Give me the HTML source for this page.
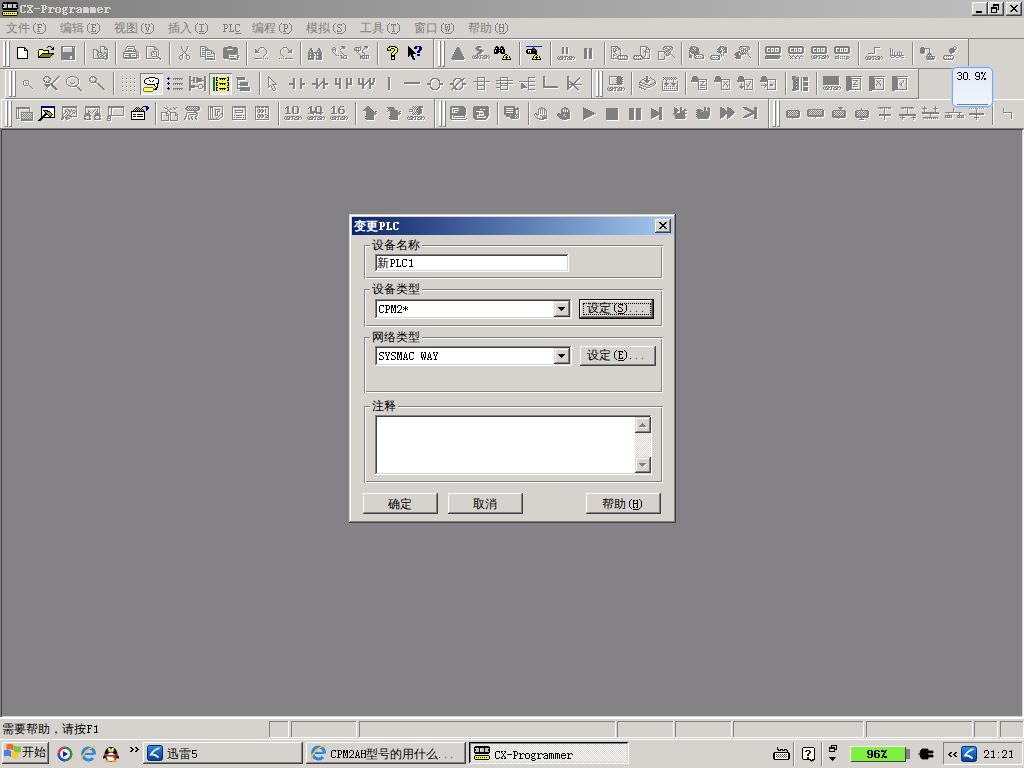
<!DOCTYPE html>
<html><head><meta charset="utf-8"><style>
html,body{margin:0;padding:0;width:1024px;height:768px;overflow:hidden;background:#d6d3ce;}
div,span,svg{position:absolute;}
.t{font-family:"Liberation Sans",sans-serif;font-size:12px;line-height:12px;white-space:nowrap;}
.m{font-family:"Liberation Mono",monospace;font-size:12px;line-height:12px;white-space:pre;letter-spacing:-1.2px;}
svg{overflow:visible;shape-rendering:crispEdges;}
svg.aa{shape-rendering:auto;}
</style></head><body>
<div style="left:0px;top:0px;width:1024px;height:18px;background:linear-gradient(to right,#808080,#c0c0c0);"></div>
<svg style="left:2px;top:1px" width="20" height="17"><path d="M3 2h1v1h-1z" fill="#008000"/><path d="M1 1h14v1h-14zM0 2h3v1h-3zM4 2h12v1h-12zM0 3h1v1h-1zM5 3h1v1h-1zM10 3h1v1h-1zM15 3h1v1h-1zM0 4h2v1h-2zM5 4h1v1h-1zM10 4h1v1h-1zM14 4h2v1h-2zM0 5h2v1h-2zM5 5h1v1h-1zM10 5h1v1h-1zM14 5h2v1h-2zM0 6h1v1h-1zM5 6h1v1h-1zM10 6h1v1h-1zM15 6h1v1h-1zM0 7h16v1h-16zM1 8h14v1h-14zM1 10h14v1h-14zM0 11h1v1h-1zM15 11h1v1h-1zM0 12h1v1h-1zM2 12h1v1h-1zM4 12h1v1h-1zM6 12h1v1h-1zM8 12h1v1h-1zM10 12h1v1h-1zM12 12h1v1h-1zM15 12h1v1h-1zM0 13h1v1h-1zM15 13h1v1h-1zM1 14h14v1h-14z" fill="#000000"/><path d="M2 3h3v1h-3zM6 3h4v1h-4zM11 3h4v1h-4zM2 4h3v1h-3zM7 4h3v1h-3zM11 4h3v1h-3zM2 5h3v1h-3zM7 5h3v1h-3zM11 5h3v1h-3zM2 6h3v1h-3zM6 6h4v1h-4zM11 6h4v1h-4z" fill="#c0c0c0"/><path d="M1 3h1v1h-1zM6 4h1v1h-1zM6 5h1v1h-1zM1 6h1v1h-1z" fill="#ffffff"/><path d="M1 11h14v1h-14zM1 12h1v1h-1zM3 12h1v1h-1zM5 12h1v1h-1zM7 12h1v1h-1zM9 12h1v1h-1zM11 12h1v1h-1zM13 12h2v1h-2zM1 13h14v1h-14z" fill="#ffff00"/></svg>
<svg style="left:19px;top:3px" width="92" height="12"><path d="M2 2h5v1h-5zM1 3h2v1h-2zM5 3h2v1h-2zM1 4h2v1h-2zM1 5h2v1h-2zM1 6h2v1h-2zM1 7h2v1h-2zM1 8h2v1h-2zM5 8h2v1h-2zM2 9h4v1h-4zM8 2h3v1h-3zM11 2h3v1h-3zM8 3h2v1h-2zM12 3h2v1h-2zM9 4h2v1h-2zM11 4h2v1h-2zM10 5h2v1h-2zM10 6h2v1h-2zM9 7h2v1h-2zM11 7h2v1h-2zM8 8h2v1h-2zM12 8h2v1h-2zM8 9h3v1h-3zM11 9h3v1h-3zM15 5h6v1h-6zM22 2h5v1h-5zM23 3h2v1h-2zM26 3h2v1h-2zM23 4h2v1h-2zM26 4h2v1h-2zM23 5h2v1h-2zM26 5h2v1h-2zM23 6h4v1h-4zM23 7h2v1h-2zM23 8h2v1h-2zM22 9h4v1h-4zM29 4h3v1h-3zM32 4h3v1h-3zM30 5h3v1h-3zM34 5h2v1h-2zM30 6h2v1h-2zM30 7h2v1h-2zM30 8h2v1h-2zM29 9h5v1h-5zM37 4h4v1h-4zM36 5h2v1h-2zM40 5h2v1h-2zM36 6h2v1h-2zM40 6h2v1h-2zM36 7h2v1h-2zM40 7h2v1h-2zM36 8h2v1h-2zM40 8h2v1h-2zM37 9h4v1h-4zM44 4h5v1h-5zM43 5h2v1h-2zM46 5h2v1h-2zM43 6h2v1h-2zM46 6h2v1h-2zM44 7h3v1h-3zM43 8h2v1h-2zM44 9h4v1h-4zM43 10h2v1h-2zM47 10h2v1h-2zM44 11h4v1h-4zM50 4h3v1h-3zM53 4h3v1h-3zM51 5h3v1h-3zM55 5h2v1h-2zM51 6h2v1h-2zM51 7h2v1h-2zM51 8h2v1h-2zM50 9h5v1h-5zM58 4h4v1h-4zM57 5h2v1h-2zM61 5h2v1h-2zM59 6h4v1h-4zM58 7h2v1h-2zM61 7h2v1h-2zM57 8h2v1h-2zM61 8h2v1h-2zM58 9h5v1h-5zM64 4h5v1h-5zM64 5h2v1h-2zM66 5h2v1h-2zM68 5h2v1h-2zM64 6h2v1h-2zM66 6h2v1h-2zM68 6h2v1h-2zM64 7h2v1h-2zM66 7h2v1h-2zM68 7h2v1h-2zM64 8h2v1h-2zM66 8h2v1h-2zM68 8h2v1h-2zM64 9h2v1h-2zM66 9h2v1h-2zM68 9h2v1h-2zM71 4h5v1h-5zM71 5h2v1h-2zM73 5h2v1h-2zM75 5h2v1h-2zM71 6h2v1h-2zM73 6h2v1h-2zM75 6h2v1h-2zM71 7h2v1h-2zM73 7h2v1h-2zM75 7h2v1h-2zM71 8h2v1h-2zM73 8h2v1h-2zM75 8h2v1h-2zM71 9h2v1h-2zM73 9h2v1h-2zM75 9h2v1h-2zM79 4h4v1h-4zM78 5h2v1h-2zM82 5h2v1h-2zM78 6h6v1h-6zM78 7h2v1h-2zM78 8h2v1h-2zM82 8h2v1h-2zM79 9h4v1h-4zM85 4h3v1h-3zM88 4h3v1h-3zM86 5h3v1h-3zM90 5h2v1h-2zM86 6h2v1h-2zM86 7h2v1h-2zM86 8h2v1h-2zM85 9h5v1h-5z" fill="#d6d3ce"/></svg>
<div style="left:972px;top:2px;width:16px;height:14px;background:#d6d3ce;box-shadow:inset -1px -1px #404040,inset 1px 1px #ffffff,inset -2px -2px #808080,inset 2px 2px #d6d3ce;"></div>
<div style="left:988px;top:2px;width:16px;height:14px;background:#d6d3ce;box-shadow:inset -1px -1px #404040,inset 1px 1px #ffffff,inset -2px -2px #808080,inset 2px 2px #d6d3ce;"></div>
<div style="left:1006px;top:2px;width:16px;height:14px;background:#d6d3ce;box-shadow:inset -1px -1px #404040,inset 1px 1px #ffffff,inset -2px -2px #808080,inset 2px 2px #d6d3ce;"></div>
<svg style="left:972px;top:2px" width="16" height="14"><path d="M4 9h6v2h-6z" fill="#000"/></svg>
<svg style="left:988px;top:2px" width="20" height="17"><path d="M5 2h6v1h-6zM5 3h6v1h-6zM5 4h1v1h-1zM10 4h1v1h-1zM3 5h6v1h-6zM10 5h1v1h-1zM3 6h6v1h-6zM10 6h1v1h-1zM3 7h1v1h-1zM8 7h3v1h-3zM3 8h1v1h-1zM8 8h1v1h-1zM3 9h1v1h-1zM8 9h1v1h-1zM3 10h6v1h-6z" fill="#000000"/></svg>
<svg style="left:1006px;top:2px" width="20" height="17"><path d="M4 3h2v1h-2zM10 3h2v1h-2zM5 4h2v1h-2zM9 4h2v1h-2zM6 5h4v1h-4zM7 6h2v1h-2zM6 7h4v1h-4zM5 8h2v1h-2zM9 8h2v1h-2zM4 9h2v1h-2zM10 9h2v1h-2z" fill="#000000"/></svg>
<div style="left:0px;top:18px;width:1024px;height:20px;background:#d6d3ce;"></div>
<span class="t" style="left:6px;top:22px;color:#808080;">文件</span>
<svg style="left:30px;top:22px" width="19" height="12"><path d="M5 1h1v1h-1zM4 2h1v1h-1zM3 3h1v1h-1zM3 4h1v1h-1zM3 5h1v1h-1zM3 6h1v1h-1zM3 7h1v1h-1zM3 8h1v1h-1zM4 9h1v1h-1zM5 10h1v1h-1zM7 2h5v1h-5zM8 3h1v1h-1zM11 3h1v1h-1zM8 4h1v1h-1zM8 5h3v1h-3zM8 6h1v1h-1zM8 7h1v1h-1zM8 8h1v1h-1zM7 9h3v1h-3zM7 11h6v1h-6zM13 1h1v1h-1zM14 2h1v1h-1zM15 3h1v1h-1zM15 4h1v1h-1zM15 5h1v1h-1zM15 6h1v1h-1zM15 7h1v1h-1zM15 8h1v1h-1zM14 9h1v1h-1zM13 10h1v1h-1z" fill="#808080"/></svg>
<span class="t" style="left:60px;top:22px;color:#808080;">编辑</span>
<svg style="left:84px;top:22px" width="19" height="12"><path d="M5 1h1v1h-1zM4 2h1v1h-1zM3 3h1v1h-1zM3 4h1v1h-1zM3 5h1v1h-1zM3 6h1v1h-1zM3 7h1v1h-1zM3 8h1v1h-1zM4 9h1v1h-1zM5 10h1v1h-1zM7 2h5v1h-5zM8 3h1v1h-1zM11 3h1v1h-1zM8 4h1v1h-1zM8 5h3v1h-3zM8 6h1v1h-1zM8 7h1v1h-1zM8 8h1v1h-1zM11 8h1v1h-1zM7 9h5v1h-5zM7 11h6v1h-6zM13 1h1v1h-1zM14 2h1v1h-1zM15 3h1v1h-1zM15 4h1v1h-1zM15 5h1v1h-1zM15 6h1v1h-1zM15 7h1v1h-1zM15 8h1v1h-1zM14 9h1v1h-1zM13 10h1v1h-1z" fill="#808080"/></svg>
<span class="t" style="left:114px;top:22px;color:#808080;">视图</span>
<svg style="left:138px;top:22px" width="19" height="12"><path d="M5 1h1v1h-1zM4 2h1v1h-1zM3 3h1v1h-1zM3 4h1v1h-1zM3 5h1v1h-1zM3 6h1v1h-1zM3 7h1v1h-1zM3 8h1v1h-1zM4 9h1v1h-1zM5 10h1v1h-1zM7 2h2v1h-2zM10 2h2v1h-2zM7 3h1v1h-1zM11 3h1v1h-1zM7 4h1v1h-1zM11 4h1v1h-1zM8 5h1v1h-1zM10 5h1v1h-1zM8 6h1v1h-1zM10 6h1v1h-1zM8 7h1v1h-1zM10 7h1v1h-1zM9 8h1v1h-1zM9 9h1v1h-1zM7 11h6v1h-6zM13 1h1v1h-1zM14 2h1v1h-1zM15 3h1v1h-1zM15 4h1v1h-1zM15 5h1v1h-1zM15 6h1v1h-1zM15 7h1v1h-1zM15 8h1v1h-1zM14 9h1v1h-1zM13 10h1v1h-1z" fill="#808080"/></svg>
<span class="t" style="left:168px;top:22px;color:#808080;">插入</span>
<svg style="left:192px;top:22px" width="19" height="12"><path d="M5 1h1v1h-1zM4 2h1v1h-1zM3 3h1v1h-1zM3 4h1v1h-1zM3 5h1v1h-1zM3 6h1v1h-1zM3 7h1v1h-1zM3 8h1v1h-1zM4 9h1v1h-1zM5 10h1v1h-1zM7 2h5v1h-5zM9 3h1v1h-1zM9 4h1v1h-1zM9 5h1v1h-1zM9 6h1v1h-1zM9 7h1v1h-1zM9 8h1v1h-1zM7 9h5v1h-5zM7 11h6v1h-6zM13 1h1v1h-1zM14 2h1v1h-1zM15 3h1v1h-1zM15 4h1v1h-1zM15 5h1v1h-1zM15 6h1v1h-1zM15 7h1v1h-1zM15 8h1v1h-1zM14 9h1v1h-1zM13 10h1v1h-1z" fill="#808080"/></svg>
<svg style="left:222px;top:22px" width="19" height="12"><path d="M1 2h4v1h-4zM2 3h1v1h-1zM5 3h1v1h-1zM2 4h1v1h-1zM5 4h1v1h-1zM2 5h1v1h-1zM5 5h1v1h-1zM2 6h3v1h-3zM2 7h1v1h-1zM2 8h1v1h-1zM1 9h3v1h-3zM7 2h3v1h-3zM8 3h1v1h-1zM8 4h1v1h-1zM8 5h1v1h-1zM8 6h1v1h-1zM8 7h1v1h-1zM8 8h1v1h-1zM11 8h1v1h-1zM7 9h5v1h-5zM14 2h4v1h-4zM13 3h1v1h-1zM17 3h1v1h-1zM13 4h1v1h-1zM13 5h1v1h-1zM13 6h1v1h-1zM13 7h1v1h-1zM13 8h1v1h-1zM17 8h1v1h-1zM14 9h3v1h-3zM13 11h6v1h-6z" fill="#808080"/></svg>
<span class="t" style="left:252px;top:22px;color:#808080;">编程</span>
<svg style="left:276px;top:22px" width="19" height="12"><path d="M5 1h1v1h-1zM4 2h1v1h-1zM3 3h1v1h-1zM3 4h1v1h-1zM3 5h1v1h-1zM3 6h1v1h-1zM3 7h1v1h-1zM3 8h1v1h-1zM4 9h1v1h-1zM5 10h1v1h-1zM7 2h4v1h-4zM8 3h1v1h-1zM11 3h1v1h-1zM8 4h1v1h-1zM11 4h1v1h-1zM8 5h1v1h-1zM11 5h1v1h-1zM8 6h3v1h-3zM8 7h1v1h-1zM8 8h1v1h-1zM7 9h3v1h-3zM7 11h6v1h-6zM13 1h1v1h-1zM14 2h1v1h-1zM15 3h1v1h-1zM15 4h1v1h-1zM15 5h1v1h-1zM15 6h1v1h-1zM15 7h1v1h-1zM15 8h1v1h-1zM14 9h1v1h-1zM13 10h1v1h-1z" fill="#808080"/></svg>
<span class="t" style="left:306px;top:22px;color:#808080;">模拟</span>
<svg style="left:330px;top:22px" width="19" height="12"><path d="M5 1h1v1h-1zM4 2h1v1h-1zM3 3h1v1h-1zM3 4h1v1h-1zM3 5h1v1h-1zM3 6h1v1h-1zM3 7h1v1h-1zM3 8h1v1h-1zM4 9h1v1h-1zM5 10h1v1h-1zM8 2h4v1h-4zM7 3h1v1h-1zM11 3h1v1h-1zM7 4h1v1h-1zM8 5h2v1h-2zM10 6h1v1h-1zM11 7h1v1h-1zM7 8h1v1h-1zM11 8h1v1h-1zM7 9h4v1h-4zM7 11h6v1h-6zM13 1h1v1h-1zM14 2h1v1h-1zM15 3h1v1h-1zM15 4h1v1h-1zM15 5h1v1h-1zM15 6h1v1h-1zM15 7h1v1h-1zM15 8h1v1h-1zM14 9h1v1h-1zM13 10h1v1h-1z" fill="#808080"/></svg>
<span class="t" style="left:360px;top:22px;color:#808080;">工具</span>
<svg style="left:384px;top:22px" width="19" height="12"><path d="M5 1h1v1h-1zM4 2h1v1h-1zM3 3h1v1h-1zM3 4h1v1h-1zM3 5h1v1h-1zM3 6h1v1h-1zM3 7h1v1h-1zM3 8h1v1h-1zM4 9h1v1h-1zM5 10h1v1h-1zM7 2h5v1h-5zM7 3h1v1h-1zM9 3h1v1h-1zM11 3h1v1h-1zM9 4h1v1h-1zM9 5h1v1h-1zM9 6h1v1h-1zM9 7h1v1h-1zM9 8h1v1h-1zM8 9h3v1h-3zM7 11h6v1h-6zM13 1h1v1h-1zM14 2h1v1h-1zM15 3h1v1h-1zM15 4h1v1h-1zM15 5h1v1h-1zM15 6h1v1h-1zM15 7h1v1h-1zM15 8h1v1h-1zM14 9h1v1h-1zM13 10h1v1h-1z" fill="#808080"/></svg>
<span class="t" style="left:414px;top:22px;color:#808080;">窗口</span>
<svg style="left:438px;top:22px" width="19" height="12"><path d="M5 1h1v1h-1zM4 2h1v1h-1zM3 3h1v1h-1zM3 4h1v1h-1zM3 5h1v1h-1zM3 6h1v1h-1zM3 7h1v1h-1zM3 8h1v1h-1zM4 9h1v1h-1zM5 10h1v1h-1zM7 2h2v1h-2zM10 2h2v1h-2zM7 3h1v1h-1zM11 3h1v1h-1zM7 4h1v1h-1zM9 4h1v1h-1zM11 4h1v1h-1zM7 5h1v1h-1zM9 5h1v1h-1zM11 5h1v1h-1zM7 6h1v1h-1zM9 6h1v1h-1zM11 6h1v1h-1zM7 7h2v1h-2zM10 7h2v1h-2zM8 8h1v1h-1zM10 8h1v1h-1zM8 9h1v1h-1zM10 9h1v1h-1zM7 11h6v1h-6zM13 1h1v1h-1zM14 2h1v1h-1zM15 3h1v1h-1zM15 4h1v1h-1zM15 5h1v1h-1zM15 6h1v1h-1zM15 7h1v1h-1zM15 8h1v1h-1zM14 9h1v1h-1zM13 10h1v1h-1z" fill="#808080"/></svg>
<span class="t" style="left:468px;top:22px;color:#808080;">帮助</span>
<svg style="left:492px;top:22px" width="19" height="12"><path d="M5 1h1v1h-1zM4 2h1v1h-1zM3 3h1v1h-1zM3 4h1v1h-1zM3 5h1v1h-1zM3 6h1v1h-1zM3 7h1v1h-1zM3 8h1v1h-1zM4 9h1v1h-1zM5 10h1v1h-1zM7 2h2v1h-2zM10 2h2v1h-2zM7 3h1v1h-1zM11 3h1v1h-1zM7 4h1v1h-1zM11 4h1v1h-1zM7 5h5v1h-5zM7 6h1v1h-1zM11 6h1v1h-1zM7 7h1v1h-1zM11 7h1v1h-1zM7 8h1v1h-1zM11 8h1v1h-1zM7 9h2v1h-2zM10 9h2v1h-2zM7 11h6v1h-6zM13 1h1v1h-1zM14 2h1v1h-1zM15 3h1v1h-1zM15 4h1v1h-1zM15 5h1v1h-1zM15 6h1v1h-1zM15 7h1v1h-1zM15 8h1v1h-1zM14 9h1v1h-1zM13 10h1v1h-1z" fill="#808080"/></svg>
<div style="left:0px;top:38px;width:1024px;height:1px;background:#808080;"></div>
<div style="left:0px;top:39px;width:1024px;height:90px;background:#d6d3ce;"></div>
<div style="left:-1px;top:39px;width:435px;height:1px;background:#fff;"></div>
<div style="left:-1px;top:39px;width:1px;height:29px;background:#fff;"></div>
<div style="left:-1px;top:68px;width:435px;height:1px;background:#808080;"></div>
<div style="left:433px;top:39px;width:1px;height:29px;background:#808080;"></div>
<div style="left:3px;top:41px;width:3px;height:26px;box-shadow:inset -1px -1px #808080,inset 2px 1px #fff;"></div>
<div style="left:7px;top:41px;width:3px;height:26px;box-shadow:inset -1px -1px #808080,inset 2px 1px #fff;"></div>
<svg style="left:15px;top:46px" width="20" height="17"><path d="M2 1h8v1h-8zM2 2h1v1h-1zM9 2h2v1h-2zM2 3h1v1h-1zM9 3h1v1h-1zM11 3h1v1h-1zM2 4h1v1h-1zM9 4h4v1h-4zM2 5h1v1h-1zM12 5h1v1h-1zM2 6h1v1h-1zM12 6h1v1h-1zM2 7h1v1h-1zM12 7h1v1h-1zM2 8h1v1h-1zM12 8h1v1h-1zM2 9h1v1h-1zM12 9h1v1h-1zM2 10h1v1h-1zM12 10h1v1h-1zM2 11h1v1h-1zM12 11h1v1h-1zM2 12h11v1h-11z" fill="#000000"/><path d="M3 2h6v1h-6zM3 3h6v1h-6zM10 3h1v1h-1zM3 4h6v1h-6zM3 5h9v1h-9zM3 6h9v1h-9zM3 7h9v1h-9zM3 8h9v1h-9zM3 9h9v1h-9zM3 10h9v1h-9zM3 11h9v1h-9z" fill="#ffffff"/></svg>
<svg style="left:38px;top:46px" width="20" height="17"><path d="M1 4h4v1h-4zM1 5h9v1h-9zM1 6h9v1h-9zM1 7h3v1h-3zM1 8h2v1h-2zM1 9h1v1h-1z" fill="#ffff80"/><path d="M10 0h3v1h-3zM9 1h1v1h-1zM13 1h1v1h-1zM15 1h1v1h-1zM14 2h2v1h-2zM1 3h4v1h-4zM13 3h3v1h-3zM0 4h1v1h-1zM5 4h6v1h-6zM0 5h1v1h-1zM10 5h1v1h-1zM0 6h1v1h-1zM10 6h1v1h-1zM0 7h1v1h-1zM4 7h12v1h-12zM0 8h1v1h-1zM3 8h1v1h-1zM14 8h1v1h-1zM0 9h1v1h-1zM2 9h1v1h-1zM13 9h1v1h-1zM0 10h2v1h-2zM12 10h1v1h-1zM0 11h12v1h-12z" fill="#000000"/><path d="M4 8h10v1h-10zM15 8h1v1h-1zM3 9h10v1h-10zM2 10h10v1h-10z" fill="#808000"/></svg>
<svg style="left:61px;top:46px" width="20" height="17"><path d="M1 1h14v1h-14zM1 2h2v1h-2zM12 2h1v1h-1zM14 2h1v1h-1zM1 3h2v1h-2zM12 3h3v1h-3zM1 4h2v1h-2zM12 4h3v1h-3zM1 5h2v1h-2zM12 5h3v1h-3zM1 6h2v1h-2zM12 6h3v1h-3zM1 7h14v1h-14zM1 8h14v1h-14zM1 9h14v1h-14zM1 10h14v1h-14zM1 11h9v1h-9zM12 11h3v1h-3zM1 12h9v1h-9zM12 12h3v1h-3zM1 13h9v1h-9zM12 13h3v1h-3zM1 14h14v1h-14z" fill="#fff"/><path d="M0 0h14v1h-14zM0 1h2v1h-2zM11 1h1v1h-1zM13 1h1v1h-1zM0 2h2v1h-2zM11 2h3v1h-3zM0 3h2v1h-2zM11 3h3v1h-3zM0 4h2v1h-2zM11 4h3v1h-3zM0 5h2v1h-2zM11 5h3v1h-3zM0 6h14v1h-14zM0 7h14v1h-14zM0 8h14v1h-14zM0 9h14v1h-14zM0 10h9v1h-9zM11 10h3v1h-3zM0 11h9v1h-9zM11 11h3v1h-3zM0 12h9v1h-9zM11 12h3v1h-3zM0 13h14v1h-14z" fill="#808080"/></svg>
<div style="left:84px;top:42px;width:1px;height:23px;background:#808080;"></div>
<div style="left:85px;top:42px;width:1px;height:23px;background:#fff;"></div>
<svg style="left:92px;top:46px" width="20" height="17"><path d="M9 1h5v1h-5zM9 2h1v1h-1zM13 2h2v1h-2zM9 3h1v1h-1zM13 3h1v1h-1zM15 3h1v1h-1zM2 4h4v1h-4zM9 4h1v1h-1zM13 4h4v1h-4zM2 5h1v1h-1zM5 5h2v1h-2zM9 5h1v1h-1zM16 5h1v1h-1zM2 6h1v1h-1zM6 6h2v1h-2zM9 6h1v1h-1zM16 6h1v1h-1zM2 7h1v1h-1zM7 7h4v1h-4zM13 7h2v1h-2zM16 7h1v1h-1zM2 8h1v1h-1zM6 8h2v1h-2zM10 8h2v1h-2zM13 8h1v1h-1zM15 8h2v1h-2zM2 9h1v1h-1zM6 9h1v1h-1zM8 9h2v1h-2zM12 9h1v1h-1zM15 9h2v1h-2zM2 10h1v1h-1zM6 10h2v1h-2zM10 10h2v1h-2zM14 10h3v1h-3zM2 11h1v1h-1zM7 11h1v1h-1zM9 11h2v1h-2zM12 11h2v1h-2zM15 11h2v1h-2zM2 12h1v1h-1zM7 12h2v1h-2zM11 12h2v1h-2zM15 12h2v1h-2zM2 13h15v1h-15zM14 14h2v1h-2z" fill="#fff"/><path d="M8 0h5v1h-5zM8 1h1v1h-1zM12 1h2v1h-2zM8 2h1v1h-1zM12 2h1v1h-1zM14 2h1v1h-1zM1 3h4v1h-4zM8 3h1v1h-1zM12 3h4v1h-4zM1 4h1v1h-1zM4 4h2v1h-2zM8 4h1v1h-1zM15 4h1v1h-1zM1 5h1v1h-1zM5 5h2v1h-2zM8 5h1v1h-1zM15 5h1v1h-1zM1 6h1v1h-1zM6 6h4v1h-4zM12 6h2v1h-2zM15 6h1v1h-1zM1 7h1v1h-1zM5 7h2v1h-2zM9 7h2v1h-2zM12 7h1v1h-1zM14 7h2v1h-2zM1 8h1v1h-1zM5 8h1v1h-1zM7 8h2v1h-2zM11 8h1v1h-1zM14 8h2v1h-2zM1 9h1v1h-1zM5 9h2v1h-2zM9 9h2v1h-2zM13 9h3v1h-3zM1 10h1v1h-1zM6 10h1v1h-1zM8 10h2v1h-2zM11 10h2v1h-2zM14 10h2v1h-2zM1 11h1v1h-1zM6 11h2v1h-2zM10 11h2v1h-2zM14 11h2v1h-2zM1 12h15v1h-15zM13 13h2v1h-2z" fill="#808080"/></svg>
<div style="left:115px;top:42px;width:1px;height:23px;background:#808080;"></div>
<div style="left:116px;top:42px;width:1px;height:23px;background:#fff;"></div>
<svg style="left:123px;top:46px" width="20" height="17"><path d="M5 1h8v1h-8zM4 2h1v1h-1zM12 2h1v1h-1zM4 3h1v1h-1zM6 3h5v1h-5zM12 3h1v1h-1zM3 4h1v1h-1zM12 4h2v1h-2zM3 5h1v1h-1zM5 5h5v1h-5zM11 5h1v1h-1zM13 5h2v1h-2zM2 6h12v1h-12zM15 6h1v1h-1zM1 7h1v1h-1zM14 7h1v1h-1zM16 7h1v1h-1zM1 8h14v1h-14zM16 8h1v1h-1zM1 9h1v1h-1zM7 9h2v1h-2zM14 9h1v1h-1zM16 9h1v1h-1zM1 10h1v1h-1zM3 10h6v1h-6zM10 10h3v1h-3zM14 10h3v1h-3zM1 11h1v1h-1zM7 11h2v1h-2zM14 11h1v1h-1zM16 11h1v1h-1zM1 12h16v1h-16zM2 13h13v1h-13z" fill="#fff"/><path d="M4 0h8v1h-8zM3 1h1v1h-1zM11 1h1v1h-1zM3 2h1v1h-1zM5 2h5v1h-5zM11 2h1v1h-1zM2 3h1v1h-1zM11 3h2v1h-2zM2 4h1v1h-1zM4 4h5v1h-5zM10 4h1v1h-1zM12 4h2v1h-2zM1 5h12v1h-12zM14 5h1v1h-1zM0 6h1v1h-1zM13 6h1v1h-1zM15 6h1v1h-1zM0 7h14v1h-14zM15 7h1v1h-1zM0 8h1v1h-1zM6 8h2v1h-2zM13 8h1v1h-1zM15 8h1v1h-1zM0 9h1v1h-1zM2 9h6v1h-6zM9 9h3v1h-3zM13 9h3v1h-3zM0 10h1v1h-1zM6 10h2v1h-2zM13 10h1v1h-1zM15 10h1v1h-1zM0 11h16v1h-16zM1 12h13v1h-13z" fill="#808080"/></svg>
<svg style="left:146px;top:46px" width="20" height="17"><path d="M1 1h9v1h-9zM1 2h1v1h-1zM9 2h2v1h-2zM1 3h1v1h-1zM9 3h1v1h-1zM11 3h1v1h-1zM1 4h1v1h-1zM9 4h4v1h-4zM1 5h1v1h-1zM13 5h1v1h-1zM1 6h1v1h-1zM7 6h4v1h-4zM13 6h1v1h-1zM1 7h1v1h-1zM6 7h1v1h-1zM8 7h1v1h-1zM11 7h1v1h-1zM13 7h1v1h-1zM1 8h1v1h-1zM6 8h1v1h-1zM9 8h1v1h-1zM11 8h1v1h-1zM13 8h1v1h-1zM1 9h1v1h-1zM6 9h2v1h-2zM11 9h1v1h-1zM13 9h1v1h-1zM1 10h1v1h-1zM6 10h1v1h-1zM11 10h1v1h-1zM13 10h1v1h-1zM1 11h1v1h-1zM7 11h6v1h-6zM1 12h1v1h-1zM13 12h2v1h-2zM1 13h12v1h-12zM14 13h2v1h-2zM15 14h1v1h-1z" fill="#fff"/><path d="M0 0h9v1h-9zM0 1h1v1h-1zM8 1h2v1h-2zM0 2h1v1h-1zM8 2h1v1h-1zM10 2h1v1h-1zM0 3h1v1h-1zM8 3h4v1h-4zM0 4h1v1h-1zM12 4h1v1h-1zM0 5h1v1h-1zM6 5h4v1h-4zM12 5h1v1h-1zM0 6h1v1h-1zM5 6h1v1h-1zM7 6h1v1h-1zM10 6h1v1h-1zM12 6h1v1h-1zM0 7h1v1h-1zM5 7h1v1h-1zM8 7h1v1h-1zM10 7h1v1h-1zM12 7h1v1h-1zM0 8h1v1h-1zM5 8h2v1h-2zM10 8h1v1h-1zM12 8h1v1h-1zM0 9h1v1h-1zM5 9h1v1h-1zM10 9h1v1h-1zM12 9h1v1h-1zM0 10h1v1h-1zM6 10h6v1h-6zM0 11h1v1h-1zM12 11h2v1h-2zM0 12h12v1h-12zM13 12h2v1h-2zM14 13h1v1h-1z" fill="#808080"/></svg>
<div style="left:169px;top:42px;width:1px;height:23px;background:#808080;"></div>
<div style="left:170px;top:42px;width:1px;height:23px;background:#fff;"></div>
<svg style="left:177px;top:46px" width="20" height="17"><path d="M5 1h1v1h-1zM11 1h1v1h-1zM5 2h1v1h-1zM11 2h1v1h-1zM5 3h1v1h-1zM11 3h1v1h-1zM6 4h1v1h-1zM10 4h1v1h-1zM6 5h1v1h-1zM10 5h1v1h-1zM7 6h1v1h-1zM9 6h1v1h-1zM8 7h1v1h-1zM7 8h1v1h-1zM9 8h1v1h-1zM6 9h1v1h-1zM10 9h1v1h-1zM4 10h3v1h-3zM10 10h3v1h-3zM3 11h1v1h-1zM6 11h1v1h-1zM10 11h1v1h-1zM13 11h1v1h-1zM3 12h1v1h-1zM6 12h1v1h-1zM10 12h1v1h-1zM13 12h1v1h-1zM3 13h1v1h-1zM6 13h1v1h-1zM10 13h1v1h-1zM13 13h1v1h-1zM4 14h2v1h-2zM11 14h2v1h-2z" fill="#fff"/><path d="M4 0h1v1h-1zM10 0h1v1h-1zM4 1h1v1h-1zM10 1h1v1h-1zM4 2h1v1h-1zM10 2h1v1h-1zM5 3h1v1h-1zM9 3h1v1h-1zM5 4h1v1h-1zM9 4h1v1h-1zM6 5h1v1h-1zM8 5h1v1h-1zM7 6h1v1h-1zM6 7h1v1h-1zM8 7h1v1h-1zM5 8h1v1h-1zM9 8h1v1h-1zM3 9h3v1h-3zM9 9h3v1h-3zM2 10h1v1h-1zM5 10h1v1h-1zM9 10h1v1h-1zM12 10h1v1h-1zM2 11h1v1h-1zM5 11h1v1h-1zM9 11h1v1h-1zM12 11h1v1h-1zM2 12h1v1h-1zM5 12h1v1h-1zM9 12h1v1h-1zM12 12h1v1h-1zM3 13h2v1h-2zM10 13h2v1h-2z" fill="#808080"/></svg>
<svg style="left:200px;top:46px" width="20" height="17"><path d="M1 1h6v1h-6zM1 2h1v1h-1zM6 2h2v1h-2zM1 3h1v1h-1zM3 3h2v1h-2zM6 3h1v1h-1zM8 3h1v1h-1zM1 4h1v1h-1zM6 4h4v1h-4zM1 5h1v1h-1zM3 5h10v1h-10zM1 6h1v1h-1zM6 6h1v1h-1zM12 6h2v1h-2zM1 7h1v1h-1zM3 7h4v1h-4zM8 7h3v1h-3zM12 7h1v1h-1zM14 7h1v1h-1zM1 8h1v1h-1zM6 8h1v1h-1zM12 8h4v1h-4zM1 9h1v1h-1zM3 9h4v1h-4zM8 9h4v1h-4zM15 9h1v1h-1zM1 10h1v1h-1zM6 10h1v1h-1zM15 10h1v1h-1zM1 11h6v1h-6zM8 11h6v1h-6zM15 11h1v1h-1zM6 12h1v1h-1zM15 12h1v1h-1zM6 13h1v1h-1zM8 13h6v1h-6zM15 13h1v1h-1zM6 14h10v1h-10z" fill="#fff"/><path d="M0 0h6v1h-6zM0 1h1v1h-1zM5 1h2v1h-2zM0 2h1v1h-1zM2 2h2v1h-2zM5 2h1v1h-1zM7 2h1v1h-1zM0 3h1v1h-1zM5 3h4v1h-4zM0 4h1v1h-1zM2 4h10v1h-10zM0 5h1v1h-1zM5 5h1v1h-1zM11 5h2v1h-2zM0 6h1v1h-1zM2 6h4v1h-4zM7 6h3v1h-3zM11 6h1v1h-1zM13 6h1v1h-1zM0 7h1v1h-1zM5 7h1v1h-1zM11 7h4v1h-4zM0 8h1v1h-1zM2 8h4v1h-4zM7 8h4v1h-4zM14 8h1v1h-1zM0 9h1v1h-1zM5 9h1v1h-1zM14 9h1v1h-1zM0 10h6v1h-6zM7 10h6v1h-6zM14 10h1v1h-1zM5 11h1v1h-1zM14 11h1v1h-1zM5 12h1v1h-1zM7 12h6v1h-6zM14 12h1v1h-1zM5 13h10v1h-10z" fill="#808080"/></svg>
<svg style="left:223px;top:46px" width="20" height="17"><path d="M6 1h4v1h-4zM2 2h13v1h-13zM1 3h15v1h-15zM1 4h4v1h-4zM11 4h5v1h-5zM1 5h15v1h-15zM1 6h15v1h-15zM1 7h15v1h-15zM1 8h15v1h-15zM1 9h6v1h-6zM8 9h6v1h-6zM15 9h1v1h-1zM1 10h6v1h-6zM15 10h2v1h-2zM1 11h6v1h-6zM8 11h4v1h-4zM15 11h2v1h-2zM1 12h6v1h-6zM15 12h2v1h-2zM2 13h5v1h-5zM8 13h6v1h-6zM15 13h1v1h-1zM7 14h9v1h-9z" fill="#fff"/><path d="M5 0h4v1h-4zM1 1h13v1h-13zM0 2h15v1h-15zM0 3h4v1h-4zM10 3h5v1h-5zM0 4h15v1h-15zM0 5h15v1h-15zM0 6h15v1h-15zM0 7h15v1h-15zM0 8h6v1h-6zM7 8h6v1h-6zM14 8h1v1h-1zM0 9h6v1h-6zM14 9h2v1h-2zM0 10h6v1h-6zM7 10h4v1h-4zM14 10h2v1h-2zM0 11h6v1h-6zM14 11h2v1h-2zM1 12h5v1h-5zM7 12h6v1h-6zM14 12h1v1h-1zM6 13h9v1h-9z" fill="#808080"/></svg>
<div style="left:246px;top:42px;width:1px;height:23px;background:#808080;"></div>
<div style="left:247px;top:42px;width:1px;height:23px;background:#fff;"></div>
<svg style="left:254px;top:46px" width="20" height="17"><path d="M7 2h4v1h-4zM6 3h1v1h-1zM11 3h1v1h-1zM2 4h1v1h-1zM5 4h1v1h-1zM12 4h1v1h-1zM2 5h2v1h-2zM5 5h1v1h-1zM13 5h1v1h-1zM2 6h3v1h-3zM13 6h1v1h-1zM2 7h4v1h-4zM13 7h1v1h-1zM13 8h1v1h-1zM12 9h1v1h-1zM11 10h1v1h-1zM10 11h1v1h-1zM1 13h8v1h-8zM10 13h1v1h-1zM12 13h1v1h-1zM14 13h1v1h-1z" fill="#fff"/><path d="M6 1h4v1h-4zM5 2h1v1h-1zM10 2h1v1h-1zM1 3h1v1h-1zM4 3h1v1h-1zM11 3h1v1h-1zM1 4h2v1h-2zM4 4h1v1h-1zM12 4h1v1h-1zM1 5h3v1h-3zM12 5h1v1h-1zM1 6h4v1h-4zM12 6h1v1h-1zM12 7h1v1h-1zM11 8h1v1h-1zM10 9h1v1h-1zM9 10h1v1h-1zM0 12h8v1h-8zM9 12h1v1h-1zM11 12h1v1h-1zM13 12h1v1h-1z" fill="#808080"/></svg>
<svg style="left:277px;top:46px" width="20" height="17"><path d="M7 2h4v1h-4zM6 3h1v1h-1zM11 3h1v1h-1zM5 4h1v1h-1zM12 4h1v1h-1zM15 4h1v1h-1zM4 5h1v1h-1zM12 5h1v1h-1zM14 5h2v1h-2zM4 6h1v1h-1zM13 6h3v1h-3zM4 7h1v1h-1zM12 7h4v1h-4zM4 8h1v1h-1zM5 9h1v1h-1zM6 10h1v1h-1zM7 11h1v1h-1zM3 13h1v1h-1zM5 13h1v1h-1zM7 13h1v1h-1zM9 13h8v1h-8z" fill="#fff"/><path d="M6 1h4v1h-4zM5 2h1v1h-1zM10 2h1v1h-1zM4 3h1v1h-1zM11 3h1v1h-1zM14 3h1v1h-1zM3 4h1v1h-1zM11 4h1v1h-1zM13 4h2v1h-2zM3 5h1v1h-1zM12 5h3v1h-3zM3 6h1v1h-1zM11 6h4v1h-4zM3 7h1v1h-1zM4 8h1v1h-1zM5 9h1v1h-1zM6 10h1v1h-1zM2 12h1v1h-1zM4 12h1v1h-1zM6 12h1v1h-1zM8 12h8v1h-8z" fill="#808080"/></svg>
<div style="left:300px;top:42px;width:1px;height:23px;background:#808080;"></div>
<div style="left:301px;top:42px;width:1px;height:23px;background:#fff;"></div>
<svg style="left:308px;top:46px" width="20" height="17"><path d="M3 3h2v1h-2zM11 3h2v1h-2zM3 4h2v1h-2zM11 4h2v1h-2zM2 5h4v1h-4zM10 5h4v1h-4zM2 6h1v1h-1zM4 6h2v1h-2zM10 6h1v1h-1zM12 6h2v1h-2zM1 7h14v1h-14zM1 8h2v1h-2zM4 8h3v1h-3zM8 8h2v1h-2zM11 8h4v1h-4zM1 9h2v1h-2zM4 9h3v1h-3zM9 9h1v1h-1zM11 9h4v1h-4zM1 10h7v1h-7zM9 10h6v1h-6zM1 11h2v1h-2zM4 11h3v1h-3zM9 11h1v1h-1zM11 11h4v1h-4zM1 12h2v1h-2zM4 12h3v1h-3zM9 12h1v1h-1zM11 12h4v1h-4zM1 13h6v1h-6zM9 13h6v1h-6zM1 14h6v1h-6zM9 14h6v1h-6z" fill="#fff"/><path d="M2 2h2v1h-2zM10 2h2v1h-2zM2 3h2v1h-2zM10 3h2v1h-2zM1 4h4v1h-4zM9 4h4v1h-4zM1 5h1v1h-1zM3 5h2v1h-2zM9 5h1v1h-1zM11 5h2v1h-2zM0 6h14v1h-14zM0 7h2v1h-2zM3 7h3v1h-3zM7 7h2v1h-2zM10 7h4v1h-4zM0 8h2v1h-2zM3 8h3v1h-3zM8 8h1v1h-1zM10 8h4v1h-4zM0 9h7v1h-7zM8 9h6v1h-6zM0 10h2v1h-2zM3 10h3v1h-3zM8 10h1v1h-1zM10 10h4v1h-4zM0 11h2v1h-2zM3 11h3v1h-3zM8 11h1v1h-1zM10 11h4v1h-4zM0 12h6v1h-6zM8 12h6v1h-6zM0 13h6v1h-6zM8 13h6v1h-6z" fill="#808080"/></svg>
<svg style="left:331px;top:46px" width="20" height="17"><path d="M11 1h4v1h-4zM3 2h2v1h-2zM12 2h3v1h-3zM2 3h1v1h-1zM5 3h1v1h-1zM11 3h1v1h-1zM13 3h2v1h-2zM2 4h4v1h-4zM10 4h1v1h-1zM2 5h1v1h-1zM5 5h1v1h-1zM2 6h1v1h-1zM5 6h1v1h-1zM10 6h1v1h-1zM3 7h1v1h-1zM11 7h1v1h-1zM4 8h1v1h-1zM12 8h1v1h-1zM5 9h1v1h-1zM13 9h1v1h-1zM6 10h1v1h-1zM8 10h1v1h-1zM10 10h2v1h-2zM14 10h3v1h-3zM11 11h1v1h-1zM13 11h1v1h-1zM16 11h1v1h-1zM11 12h3v1h-3zM16 12h1v1h-1zM11 13h1v1h-1zM13 13h4v1h-4z" fill="#fff"/><path d="M10 0h4v1h-4zM2 1h2v1h-2zM11 1h3v1h-3zM1 2h1v1h-1zM4 2h1v1h-1zM10 2h1v1h-1zM12 2h2v1h-2zM1 3h4v1h-4zM9 3h1v1h-1zM1 4h1v1h-1zM4 4h1v1h-1zM1 5h1v1h-1zM4 5h1v1h-1zM9 5h1v1h-1zM2 6h1v1h-1zM10 6h1v1h-1zM3 7h1v1h-1zM11 7h1v1h-1zM4 8h1v1h-1zM12 8h1v1h-1zM5 9h1v1h-1zM7 9h1v1h-1zM9 9h2v1h-2zM13 9h3v1h-3zM10 10h1v1h-1zM12 10h1v1h-1zM15 10h1v1h-1zM10 11h3v1h-3zM15 11h1v1h-1zM10 12h1v1h-1zM12 12h4v1h-4z" fill="#808080"/></svg>
<svg style="left:354px;top:46px" width="20" height="17"><path d="M7 1h1v1h-1zM11 1h4v1h-4zM2 2h6v1h-6zM12 2h3v1h-3zM1 3h1v1h-1zM3 3h1v1h-1zM5 3h1v1h-1zM7 3h1v1h-1zM11 3h1v1h-1zM13 3h1v1h-1zM1 4h1v1h-1zM3 4h1v1h-1zM5 4h1v1h-1zM7 4h1v1h-1zM10 4h1v1h-1zM1 5h7v1h-7zM9 5h1v1h-1zM3 6h1v1h-1zM5 6h1v1h-1zM9 6h1v1h-1zM4 7h1v1h-1zM9 7h2v1h-2zM5 8h1v1h-1zM11 8h1v1h-1zM6 9h1v1h-1zM11 9h1v1h-1zM7 10h1v1h-1zM9 10h7v1h-7zM7 11h3v1h-3zM11 11h1v1h-1zM13 11h1v1h-1zM15 11h1v1h-1zM7 12h3v1h-3zM11 12h1v1h-1zM13 12h1v1h-1zM15 12h1v1h-1zM7 13h1v1h-1zM9 13h7v1h-7z" fill="#fff"/><path d="M6 0h1v1h-1zM10 0h4v1h-4zM1 1h6v1h-6zM11 1h3v1h-3zM0 2h1v1h-1zM2 2h1v1h-1zM4 2h1v1h-1zM6 2h1v1h-1zM10 2h1v1h-1zM12 2h1v1h-1zM0 3h1v1h-1zM2 3h1v1h-1zM4 3h1v1h-1zM6 3h1v1h-1zM9 3h1v1h-1zM0 4h7v1h-7zM8 4h1v1h-1zM2 5h1v1h-1zM4 5h1v1h-1zM8 5h1v1h-1zM3 6h1v1h-1zM8 6h2v1h-2zM4 7h1v1h-1zM10 7h1v1h-1zM5 8h1v1h-1zM10 8h1v1h-1zM6 9h1v1h-1zM8 9h7v1h-7zM6 10h3v1h-3zM10 10h1v1h-1zM12 10h1v1h-1zM14 10h1v1h-1zM6 11h3v1h-3zM10 11h1v1h-1zM12 11h1v1h-1zM14 11h1v1h-1zM6 12h1v1h-1zM8 12h7v1h-7z" fill="#808080"/></svg>
<div style="left:377px;top:42px;width:1px;height:23px;background:#808080;"></div>
<div style="left:378px;top:42px;width:1px;height:23px;background:#fff;"></div>
<svg style="left:385px;top:46px" width="20" height="17"><path d="M4 0h7v1h-7zM3 1h2v1h-2zM10 1h2v1h-2zM2 2h1v1h-1zM6 2h3v1h-3zM12 2h1v1h-1zM2 3h1v1h-1zM5 3h1v1h-1zM9 3h1v1h-1zM12 3h1v1h-1zM2 4h4v1h-4zM9 4h1v1h-1zM12 4h1v1h-1zM8 5h1v1h-1zM12 5h1v1h-1zM7 6h1v1h-1zM11 6h1v1h-1zM6 7h1v1h-1zM10 7h1v1h-1zM6 8h1v1h-1zM9 8h1v1h-1zM6 9h4v1h-4zM6 10h4v1h-4zM6 11h1v1h-1zM9 11h1v1h-1zM6 12h1v1h-1zM9 12h1v1h-1zM6 13h4v1h-4z" fill="#000000"/><path d="M5 1h5v1h-5zM3 2h3v1h-3zM9 2h3v1h-3zM3 3h2v1h-2zM10 3h2v1h-2zM10 4h2v1h-2zM9 5h3v1h-3zM8 6h3v1h-3zM7 7h3v1h-3zM7 8h2v1h-2zM7 11h2v1h-2zM7 12h2v1h-2z" fill="#ffff00"/></svg>
<svg style="left:408px;top:46px" width="20" height="17"><path d="M7 0h6v1h-6zM6 1h3v1h-3zM11 1h3v1h-3zM6 2h3v1h-3zM11 2h3v1h-3zM11 3h3v1h-3zM10 4h3v1h-3zM9 5h3v1h-3zM9 6h3v1h-3zM9 8h3v1h-3zM9 9h3v1h-3z" fill="#000080"/><path d="M0 0h1v1h-1zM0 1h2v1h-2zM0 2h3v1h-3zM0 3h4v1h-4zM0 4h5v1h-5zM0 5h6v1h-6zM0 6h7v1h-7zM0 7h8v1h-8zM0 8h5v1h-5zM0 9h2v1h-2zM3 9h2v1h-2zM0 10h1v1h-1zM3 10h3v1h-3zM4 11h2v1h-2zM4 12h3v1h-3zM5 13h2v1h-2z" fill="#000000"/></svg>
<div style="left:434px;top:39px;width:535px;height:1px;background:#fff;"></div>
<div style="left:434px;top:39px;width:1px;height:29px;background:#fff;"></div>
<div style="left:434px;top:68px;width:535px;height:1px;background:#808080;"></div>
<div style="left:968px;top:39px;width:1px;height:29px;background:#808080;"></div>
<div style="left:438px;top:41px;width:3px;height:26px;box-shadow:inset -1px -1px #808080,inset 2px 1px #fff;"></div>
<div style="left:442px;top:41px;width:3px;height:26px;box-shadow:inset -1px -1px #808080,inset 2px 1px #fff;"></div>
<svg style="left:448px;top:45px" width="20" height="17"><path d="M10 3h2v1h-2zM9 4h4v1h-4zM9 5h4v1h-4zM8 6h6v1h-6zM8 7h6v1h-6zM7 8h8v1h-8zM7 9h8v1h-8zM6 10h10v1h-10zM6 11h10v1h-10zM5 12h12v1h-12zM5 13h12v1h-12zM4 14h14v1h-14zM5 15h12v1h-12z" fill="#fff"/><path d="M9 2h2v1h-2zM8 3h4v1h-4zM8 4h4v1h-4zM7 5h6v1h-6zM7 6h6v1h-6zM6 7h8v1h-8zM6 8h8v1h-8zM5 9h10v1h-10zM5 10h10v1h-10zM4 11h12v1h-12zM4 12h12v1h-12zM3 13h14v1h-14zM4 14h12v1h-12z" fill="#808080"/></svg>
<svg style="left:471px;top:45px" width="20" height="17"><path d="M7 2h4v1h-4zM6 3h5v1h-5zM5 4h4v1h-4zM6 5h6v1h-6zM7 6h7v1h-7zM9 7h4v1h-4zM8 8h4v1h-4zM7 9h4v1h-4zM7 10h2v1h-2zM3 11h1v1h-1zM5 11h3v1h-3zM9 11h4v1h-4zM14 11h3v1h-3zM18 11h1v1h-1zM2 12h1v1h-1zM4 12h2v1h-2zM7 12h2v1h-2zM10 12h1v1h-1zM13 12h2v1h-2zM16 12h2v1h-2zM19 12h1v1h-1zM2 13h1v1h-1zM4 13h1v1h-1zM6 13h2v1h-2zM10 13h1v1h-1zM12 13h1v1h-1zM15 13h2v1h-2zM19 13h1v1h-1zM3 14h5v1h-5zM9 14h2v1h-2zM12 14h5v1h-5zM18 14h1v1h-1z" fill="#fff"/><path d="M6 1h4v1h-4zM5 2h5v1h-5zM4 3h4v1h-4zM5 4h6v1h-6zM6 5h7v1h-7zM8 6h4v1h-4zM7 7h4v1h-4zM6 8h4v1h-4zM6 9h2v1h-2zM2 10h1v1h-1zM4 10h3v1h-3zM8 10h4v1h-4zM13 10h3v1h-3zM17 10h1v1h-1zM1 11h1v1h-1zM3 11h2v1h-2zM6 11h2v1h-2zM9 11h1v1h-1zM12 11h2v1h-2zM15 11h2v1h-2zM18 11h1v1h-1zM1 12h1v1h-1zM3 12h1v1h-1zM5 12h2v1h-2zM9 12h1v1h-1zM11 12h1v1h-1zM14 12h2v1h-2zM18 12h1v1h-1zM2 13h5v1h-5zM8 13h2v1h-2zM11 13h5v1h-5zM17 13h1v1h-1z" fill="#808080"/></svg>
<svg style="left:494px;top:45px" width="20" height="17"><path d="M2 1h2v1h-2zM7 1h2v1h-2zM1 2h4v1h-4zM6 2h4v1h-4zM1 3h1v1h-1zM3 3h2v1h-2zM6 3h1v1h-1zM8 3h2v1h-2zM0 4h11v1h-11zM0 5h1v1h-1zM2 5h3v1h-3zM6 5h2v1h-2zM9 5h2v1h-2zM0 6h1v1h-1zM2 6h6v1h-6zM9 6h2v1h-2zM0 7h5v1h-5zM6 7h5v1h-5zM0 8h4v1h-4zM7 8h4v1h-4zM11 9h2v1h-2zM10 10h1v1h-1zM13 10h1v1h-1zM9 11h1v1h-1zM12 11h1v1h-1zM15 11h1v1h-1zM9 12h1v1h-1zM11 12h3v1h-3zM15 12h1v1h-1zM8 13h1v1h-1zM12 13h1v1h-1zM16 13h1v1h-1zM8 14h9v1h-9z" fill="#000000"/><path d="M2 3h1v1h-1zM7 3h1v1h-1zM1 5h1v1h-1zM5 5h1v1h-1zM8 5h1v1h-1zM1 6h1v1h-1zM8 6h1v1h-1z" fill="#ffffff"/><path d="M11 10h2v1h-2zM10 11h2v1h-2zM13 11h2v1h-2zM10 12h1v1h-1zM14 12h1v1h-1zM9 13h3v1h-3zM13 13h3v1h-3z" fill="#ffff00"/></svg>
<div style="left:519px;top:42px;width:1px;height:23px;background:#808080;"></div>
<div style="left:520px;top:42px;width:1px;height:23px;background:#fff;"></div>
<svg style="left:525px;top:45px" width="20" height="17"><path d="M3 7h1v1h-1z" fill="#00ff00"/><path d="M1 1h16v1h-16zM8 2h1v1h-1zM7 3h3v1h-3z" fill="#2020c8"/><path d="M8 5h2v1h-2z" fill="#ff0000"/><path d="M2 4h9v1h-9zM1 5h2v1h-2zM6 5h2v1h-2zM10 5h2v1h-2zM1 6h2v1h-2zM4 6h1v1h-1zM6 6h6v1h-6zM1 7h2v1h-2zM4 7h1v1h-1zM6 7h6v1h-6zM2 8h10v1h-10zM10 9h2v1h-2zM9 10h1v1h-1zM12 10h1v1h-1zM8 11h1v1h-1zM11 11h1v1h-1zM14 11h1v1h-1zM8 12h1v1h-1zM10 12h3v1h-3zM14 12h1v1h-1zM7 13h1v1h-1zM11 13h1v1h-1zM15 13h1v1h-1zM7 14h9v1h-9z" fill="#000000"/><path d="M3 5h3v1h-3zM3 6h1v1h-1zM5 6h1v1h-1zM5 7h1v1h-1z" fill="#ffffff"/><path d="M10 10h2v1h-2zM9 11h2v1h-2zM12 11h2v1h-2zM9 12h1v1h-1zM13 12h1v1h-1zM8 13h3v1h-3zM12 13h3v1h-3z" fill="#ffff00"/></svg>
<div style="left:550px;top:42px;width:1px;height:23px;background:#808080;"></div>
<div style="left:551px;top:42px;width:1px;height:23px;background:#fff;"></div>
<svg style="left:556px;top:45px" width="20" height="17"><path d="M7 3h2v1h-2zM11 3h2v1h-2zM7 4h2v1h-2zM11 4h2v1h-2zM7 5h2v1h-2zM11 5h2v1h-2zM7 6h2v1h-2zM11 6h2v1h-2zM7 7h2v1h-2zM11 7h2v1h-2zM7 8h2v1h-2zM11 8h2v1h-2zM7 9h2v1h-2zM11 9h2v1h-2zM3 12h1v1h-1zM5 12h3v1h-3zM9 12h4v1h-4zM14 12h3v1h-3zM18 12h1v1h-1zM2 13h1v1h-1zM4 13h2v1h-2zM7 13h2v1h-2zM10 13h1v1h-1zM13 13h2v1h-2zM16 13h2v1h-2zM19 13h1v1h-1zM2 14h1v1h-1zM4 14h1v1h-1zM6 14h2v1h-2zM10 14h1v1h-1zM12 14h1v1h-1zM15 14h2v1h-2zM19 14h1v1h-1zM3 15h5v1h-5zM9 15h2v1h-2zM12 15h5v1h-5zM18 15h1v1h-1z" fill="#fff"/><path d="M6 2h2v1h-2zM10 2h2v1h-2zM6 3h2v1h-2zM10 3h2v1h-2zM6 4h2v1h-2zM10 4h2v1h-2zM6 5h2v1h-2zM10 5h2v1h-2zM6 6h2v1h-2zM10 6h2v1h-2zM6 7h2v1h-2zM10 7h2v1h-2zM6 8h2v1h-2zM10 8h2v1h-2zM2 11h1v1h-1zM4 11h3v1h-3zM8 11h4v1h-4zM13 11h3v1h-3zM17 11h1v1h-1zM1 12h1v1h-1zM3 12h2v1h-2zM6 12h2v1h-2zM9 12h1v1h-1zM12 12h2v1h-2zM15 12h2v1h-2zM18 12h1v1h-1zM1 13h1v1h-1zM3 13h1v1h-1zM5 13h2v1h-2zM9 13h1v1h-1zM11 13h1v1h-1zM14 13h2v1h-2zM18 13h1v1h-1zM2 14h5v1h-5zM8 14h2v1h-2zM11 14h5v1h-5zM17 14h1v1h-1z" fill="#808080"/></svg>
<svg style="left:579px;top:45px" width="20" height="17"><path d="M6 4h3v1h-3zM11 4h3v1h-3zM6 5h3v1h-3zM11 5h3v1h-3zM6 6h3v1h-3zM11 6h3v1h-3zM6 7h3v1h-3zM11 7h3v1h-3zM6 8h3v1h-3zM11 8h3v1h-3zM6 9h3v1h-3zM11 9h3v1h-3zM6 10h3v1h-3zM11 10h3v1h-3zM6 11h3v1h-3zM11 11h3v1h-3zM6 12h3v1h-3zM11 12h3v1h-3zM6 13h3v1h-3zM11 13h3v1h-3zM6 14h3v1h-3zM11 14h3v1h-3z" fill="#fff"/><path d="M5 3h3v1h-3zM10 3h3v1h-3zM5 4h3v1h-3zM10 4h3v1h-3zM5 5h3v1h-3zM10 5h3v1h-3zM5 6h3v1h-3zM10 6h3v1h-3zM5 7h3v1h-3zM10 7h3v1h-3zM5 8h3v1h-3zM10 8h3v1h-3zM5 9h3v1h-3zM10 9h3v1h-3zM5 10h3v1h-3zM10 10h3v1h-3zM5 11h3v1h-3zM10 11h3v1h-3zM5 12h3v1h-3zM10 12h3v1h-3zM5 13h3v1h-3zM10 13h3v1h-3z" fill="#808080"/></svg>
<div style="left:604px;top:42px;width:1px;height:23px;background:#808080;"></div>
<div style="left:605px;top:42px;width:1px;height:23px;background:#fff;"></div>
<svg style="left:610px;top:45px" width="20" height="17"><path d="M2 2h7v1h-7zM2 3h1v1h-1zM6 3h1v1h-1zM8 3h2v1h-2zM2 4h1v1h-1zM4 4h2v1h-2zM7 4h1v1h-1zM9 4h2v1h-2zM2 5h1v1h-1zM4 5h1v1h-1zM6 5h1v1h-1zM9 5h3v1h-3zM2 6h1v1h-1zM4 6h1v1h-1zM6 6h2v1h-2zM11 6h1v1h-1zM2 7h1v1h-1zM4 7h3v1h-3zM11 7h1v1h-1zM2 8h1v1h-1zM5 8h1v1h-1zM11 8h1v1h-1zM2 9h1v1h-1zM6 9h1v1h-1zM11 9h1v1h-1zM2 10h1v1h-1zM4 10h1v1h-1zM7 10h1v1h-1zM11 10h1v1h-1zM2 11h1v1h-1zM4 11h2v1h-2zM9 11h9v1h-9zM2 12h1v1h-1zM4 12h1v1h-1zM8 12h2v1h-2zM11 12h1v1h-1zM13 12h1v1h-1zM15 12h1v1h-1zM17 12h2v1h-2zM2 13h1v1h-1zM8 13h1v1h-1zM18 13h1v1h-1zM2 14h8v1h-8zM11 14h1v1h-1zM13 14h1v1h-1zM15 14h1v1h-1zM17 14h2v1h-2zM9 15h9v1h-9z" fill="#fff"/><path d="M1 1h7v1h-7zM1 2h1v1h-1zM5 2h1v1h-1zM7 2h2v1h-2zM1 3h1v1h-1zM3 3h2v1h-2zM6 3h1v1h-1zM8 3h2v1h-2zM1 4h1v1h-1zM3 4h1v1h-1zM5 4h1v1h-1zM8 4h3v1h-3zM1 5h1v1h-1zM3 5h1v1h-1zM5 5h2v1h-2zM10 5h1v1h-1zM1 6h1v1h-1zM3 6h3v1h-3zM10 6h1v1h-1zM1 7h1v1h-1zM4 7h1v1h-1zM10 7h1v1h-1zM1 8h1v1h-1zM5 8h1v1h-1zM10 8h1v1h-1zM1 9h1v1h-1zM3 9h1v1h-1zM6 9h1v1h-1zM10 9h1v1h-1zM1 10h1v1h-1zM3 10h2v1h-2zM8 10h9v1h-9zM1 11h1v1h-1zM3 11h1v1h-1zM7 11h2v1h-2zM10 11h1v1h-1zM12 11h1v1h-1zM14 11h1v1h-1zM16 11h2v1h-2zM1 12h1v1h-1zM7 12h1v1h-1zM17 12h1v1h-1zM1 13h8v1h-8zM10 13h1v1h-1zM12 13h1v1h-1zM14 13h1v1h-1zM16 13h2v1h-2zM8 14h9v1h-9z" fill="#808080"/></svg>
<svg style="left:633px;top:45px" width="20" height="17"><path d="M8 2h7v1h-7zM8 3h1v1h-1zM14 3h2v1h-2zM8 4h1v1h-1zM14 4h1v1h-1zM16 4h1v1h-1zM8 5h1v1h-1zM14 5h4v1h-4zM8 6h1v1h-1zM13 6h1v1h-1zM17 6h1v1h-1zM8 7h1v1h-1zM12 7h3v1h-3zM17 7h1v1h-1zM8 8h1v1h-1zM11 8h1v1h-1zM13 8h1v1h-1zM15 8h1v1h-1zM17 8h1v1h-1zM8 9h1v1h-1zM13 9h1v1h-1zM17 9h1v1h-1zM8 10h1v1h-1zM13 10h1v1h-1zM17 10h1v1h-1zM2 11h8v1h-8zM13 11h1v1h-1zM17 11h1v1h-1zM1 12h2v1h-2zM4 12h1v1h-1zM6 12h1v1h-1zM9 12h2v1h-2zM12 12h1v1h-1zM17 12h1v1h-1zM1 13h1v1h-1zM10 13h2v1h-2zM17 13h1v1h-1zM1 14h2v1h-2zM4 14h1v1h-1zM6 14h1v1h-1zM8 14h1v1h-1zM10 14h8v1h-8zM2 15h8v1h-8z" fill="#fff"/><path d="M7 1h7v1h-7zM7 2h1v1h-1zM13 2h2v1h-2zM7 3h1v1h-1zM13 3h1v1h-1zM15 3h1v1h-1zM7 4h1v1h-1zM13 4h4v1h-4zM7 5h1v1h-1zM12 5h1v1h-1zM16 5h1v1h-1zM7 6h1v1h-1zM11 6h3v1h-3zM16 6h1v1h-1zM7 7h1v1h-1zM10 7h1v1h-1zM12 7h1v1h-1zM14 7h1v1h-1zM16 7h1v1h-1zM7 8h1v1h-1zM12 8h1v1h-1zM16 8h1v1h-1zM7 9h1v1h-1zM12 9h1v1h-1zM16 9h1v1h-1zM1 10h8v1h-8zM12 10h1v1h-1zM16 10h1v1h-1zM0 11h2v1h-2zM3 11h1v1h-1zM5 11h1v1h-1zM8 11h2v1h-2zM11 11h1v1h-1zM16 11h1v1h-1zM0 12h1v1h-1zM9 12h2v1h-2zM16 12h1v1h-1zM0 13h2v1h-2zM3 13h1v1h-1zM5 13h1v1h-1zM7 13h1v1h-1zM9 13h8v1h-8zM1 14h8v1h-8z" fill="#808080"/></svg>
<svg style="left:656px;top:45px" width="20" height="17"><path d="M9 2h8v1h-8zM8 3h2v1h-2zM11 3h1v1h-1zM14 3h1v1h-1zM16 3h2v1h-2zM8 4h1v1h-1zM10 4h3v1h-3zM15 4h1v1h-1zM17 4h1v1h-1zM8 5h2v1h-2zM13 5h2v1h-2zM16 5h2v1h-2zM10 6h5v1h-5zM3 7h7v1h-7zM11 7h1v1h-1zM13 7h1v1h-1zM15 7h1v1h-1zM3 8h1v1h-1zM9 8h2v1h-2zM12 8h1v1h-1zM14 8h2v1h-2zM3 9h1v1h-1zM9 9h1v1h-1zM11 9h1v1h-1zM13 9h1v1h-1zM15 9h1v1h-1zM3 10h1v1h-1zM10 10h2v1h-2zM13 10h2v1h-2zM16 10h1v1h-1zM3 11h1v1h-1zM11 11h3v1h-3zM17 11h1v1h-1zM3 12h1v1h-1zM9 12h1v1h-1zM18 12h1v1h-1zM3 13h1v1h-1zM9 13h1v1h-1zM19 13h1v1h-1zM3 14h1v1h-1zM9 14h1v1h-1zM3 15h7v1h-7z" fill="#fff"/><path d="M8 1h8v1h-8zM7 2h2v1h-2zM10 2h1v1h-1zM13 2h1v1h-1zM15 2h2v1h-2zM7 3h1v1h-1zM9 3h3v1h-3zM14 3h1v1h-1zM16 3h1v1h-1zM7 4h2v1h-2zM12 4h2v1h-2zM15 4h2v1h-2zM9 5h5v1h-5zM2 6h7v1h-7zM10 6h1v1h-1zM12 6h1v1h-1zM14 6h1v1h-1zM2 7h1v1h-1zM8 7h2v1h-2zM11 7h1v1h-1zM13 7h2v1h-2zM2 8h1v1h-1zM8 8h1v1h-1zM10 8h1v1h-1zM12 8h1v1h-1zM14 8h1v1h-1zM2 9h1v1h-1zM9 9h2v1h-2zM12 9h2v1h-2zM15 9h1v1h-1zM2 10h1v1h-1zM10 10h3v1h-3zM16 10h1v1h-1zM2 11h1v1h-1zM8 11h1v1h-1zM17 11h1v1h-1zM2 12h1v1h-1zM8 12h1v1h-1zM18 12h1v1h-1zM2 13h1v1h-1zM8 13h1v1h-1zM2 14h7v1h-7z" fill="#808080"/></svg>
<div style="left:681px;top:42px;width:1px;height:23px;background:#808080;"></div>
<div style="left:682px;top:42px;width:1px;height:23px;background:#fff;"></div>
<svg style="left:687px;top:45px" width="20" height="17"><path d="M5 2h4v1h-4zM4 3h3v1h-3zM8 3h4v1h-4zM3 4h4v1h-4zM8 4h1v1h-1zM10 4h3v1h-3zM4 5h4v1h-4zM9 5h4v1h-4zM3 6h3v1h-3zM7 6h2v1h-2zM10 6h3v1h-3zM3 7h10v1h-10zM3 8h1v1h-1zM5 8h9v1h-9zM3 9h1v1h-1zM6 9h7v1h-7zM3 10h2v1h-2zM8 10h9v1h-9zM3 11h3v1h-3zM8 11h2v1h-2zM16 11h2v1h-2zM3 12h3v1h-3zM8 12h1v1h-1zM10 12h1v1h-1zM12 12h1v1h-1zM14 12h1v1h-1zM17 12h1v1h-1zM3 13h3v1h-3zM8 13h2v1h-2zM16 13h2v1h-2zM9 14h9v1h-9z" fill="#fff"/><path d="M4 1h4v1h-4zM3 2h3v1h-3zM7 2h4v1h-4zM2 3h4v1h-4zM7 3h1v1h-1zM9 3h3v1h-3zM3 4h4v1h-4zM8 4h4v1h-4zM2 5h3v1h-3zM6 5h2v1h-2zM9 5h3v1h-3zM2 6h10v1h-10zM2 7h1v1h-1zM4 7h9v1h-9zM2 8h1v1h-1zM5 8h7v1h-7zM2 9h2v1h-2zM7 9h9v1h-9zM2 10h3v1h-3zM7 10h2v1h-2zM15 10h2v1h-2zM2 11h3v1h-3zM7 11h1v1h-1zM9 11h1v1h-1zM11 11h1v1h-1zM13 11h1v1h-1zM16 11h1v1h-1zM2 12h3v1h-3zM7 12h2v1h-2zM15 12h2v1h-2zM8 13h9v1h-9z" fill="#808080"/></svg>
<svg style="left:710px;top:45px" width="20" height="17"><path d="M11 2h4v1h-4zM10 3h3v1h-3zM14 3h4v1h-4zM9 4h3v1h-3zM13 4h1v1h-1zM15 4h3v1h-3zM8 5h4v1h-4zM14 5h4v1h-4zM9 6h2v1h-2zM12 6h1v1h-1zM14 6h1v1h-1zM16 6h2v1h-2zM8 7h5v1h-5zM15 7h3v1h-3zM9 8h4v1h-4zM14 8h4v1h-4zM11 9h1v1h-1zM14 9h1v1h-1zM12 10h1v1h-1zM14 10h1v1h-1zM2 11h9v1h-9zM12 11h1v1h-1zM14 11h1v1h-1zM1 12h2v1h-2zM9 12h2v1h-2zM12 12h1v1h-1zM1 13h1v1h-1zM3 13h1v1h-1zM5 13h1v1h-1zM7 13h1v1h-1zM10 13h1v1h-1zM1 14h2v1h-2zM9 14h2v1h-2zM2 15h9v1h-9z" fill="#fff"/><path d="M10 1h4v1h-4zM9 2h3v1h-3zM13 2h4v1h-4zM8 3h3v1h-3zM12 3h1v1h-1zM14 3h3v1h-3zM7 4h4v1h-4zM13 4h4v1h-4zM8 5h2v1h-2zM11 5h1v1h-1zM13 5h1v1h-1zM15 5h2v1h-2zM7 6h5v1h-5zM14 6h3v1h-3zM8 7h4v1h-4zM13 7h4v1h-4zM10 8h1v1h-1zM13 8h1v1h-1zM11 9h1v1h-1zM13 9h1v1h-1zM1 10h9v1h-9zM11 10h1v1h-1zM13 10h1v1h-1zM0 11h2v1h-2zM8 11h2v1h-2zM11 11h1v1h-1zM0 12h1v1h-1zM2 12h1v1h-1zM4 12h1v1h-1zM6 12h1v1h-1zM9 12h1v1h-1zM0 13h2v1h-2zM8 13h2v1h-2zM1 14h9v1h-9z" fill="#808080"/></svg>
<svg style="left:733px;top:45px" width="20" height="17"><path d="M8 2h9v1h-9zM7 3h2v1h-2zM10 3h1v1h-1zM14 3h1v1h-1zM16 3h2v1h-2zM7 4h1v1h-1zM9 4h1v1h-1zM11 4h1v1h-1zM13 4h1v1h-1zM15 4h1v1h-1zM17 4h1v1h-1zM7 5h2v1h-2zM11 5h3v1h-3zM16 5h2v1h-2zM9 6h3v1h-3zM13 6h3v1h-3zM6 7h2v1h-2zM9 7h1v1h-1zM11 7h1v1h-1zM13 7h1v1h-1zM15 7h1v1h-1zM4 8h5v1h-5zM10 8h1v1h-1zM12 8h1v1h-1zM14 8h1v1h-1zM3 9h4v1h-4zM8 9h6v1h-6zM15 9h1v1h-1zM2 10h5v1h-5zM9 10h3v1h-3zM13 10h1v1h-1zM16 10h1v1h-1zM3 11h6v1h-6zM16 11h1v1h-1zM4 12h5v1h-5zM17 12h1v1h-1zM3 13h6v1h-6zM18 13h1v1h-1zM4 14h5v1h-5z" fill="#fff"/><path d="M7 1h9v1h-9zM6 2h2v1h-2zM9 2h1v1h-1zM13 2h1v1h-1zM15 2h2v1h-2zM6 3h1v1h-1zM8 3h1v1h-1zM10 3h1v1h-1zM12 3h1v1h-1zM14 3h1v1h-1zM16 3h1v1h-1zM6 4h2v1h-2zM10 4h3v1h-3zM15 4h2v1h-2zM8 5h3v1h-3zM12 5h3v1h-3zM5 6h2v1h-2zM8 6h1v1h-1zM10 6h1v1h-1zM12 6h1v1h-1zM14 6h1v1h-1zM3 7h5v1h-5zM9 7h1v1h-1zM11 7h1v1h-1zM13 7h1v1h-1zM2 8h4v1h-4zM7 8h6v1h-6zM14 8h1v1h-1zM1 9h5v1h-5zM8 9h3v1h-3zM12 9h1v1h-1zM15 9h1v1h-1zM2 10h6v1h-6zM15 10h1v1h-1zM3 11h5v1h-5zM16 11h1v1h-1zM2 12h6v1h-6zM17 12h1v1h-1zM3 13h5v1h-5z" fill="#808080"/></svg>
<div style="left:758px;top:42px;width:1px;height:23px;background:#808080;"></div>
<div style="left:759px;top:42px;width:1px;height:23px;background:#fff;"></div>
<svg style="left:764px;top:45px" width="20" height="17"><path d="M3 2h14v1h-14zM2 3h16v1h-16zM2 4h2v1h-2zM7 4h1v1h-1zM11 4h1v1h-1zM16 4h2v1h-2zM2 5h2v1h-2zM5 5h3v1h-3zM9 5h1v1h-1zM11 5h1v1h-1zM13 5h1v1h-1zM16 5h2v1h-2zM2 6h2v1h-2zM5 6h3v1h-3zM9 6h1v1h-1zM11 6h1v1h-1zM13 6h1v1h-1zM16 6h2v1h-2zM2 7h2v1h-2zM7 7h1v1h-1zM11 7h1v1h-1zM16 7h2v1h-2zM2 8h16v1h-16zM3 9h14v1h-14zM3 11h14v1h-14zM2 12h16v1h-16zM2 13h15v1h-15zM2 14h14v1h-14z" fill="#fff"/><path d="M2 1h14v1h-14zM1 2h16v1h-16zM1 3h2v1h-2zM6 3h1v1h-1zM10 3h1v1h-1zM15 3h2v1h-2zM1 4h2v1h-2zM4 4h3v1h-3zM8 4h1v1h-1zM10 4h1v1h-1zM12 4h1v1h-1zM15 4h2v1h-2zM1 5h2v1h-2zM4 5h3v1h-3zM8 5h1v1h-1zM10 5h1v1h-1zM12 5h1v1h-1zM15 5h2v1h-2zM1 6h2v1h-2zM6 6h1v1h-1zM10 6h1v1h-1zM15 6h2v1h-2zM1 7h16v1h-16zM2 8h14v1h-14zM2 10h14v1h-14zM1 11h16v1h-16zM1 12h15v1h-15zM1 13h14v1h-14z" fill="#808080"/></svg>
<svg style="left:787px;top:45px" width="20" height="17"><path d="M3 2h14v1h-14zM2 3h16v1h-16zM2 4h2v1h-2zM7 4h1v1h-1zM11 4h1v1h-1zM16 4h2v1h-2zM2 5h2v1h-2zM5 5h3v1h-3zM9 5h1v1h-1zM11 5h1v1h-1zM13 5h1v1h-1zM16 5h2v1h-2zM2 6h2v1h-2zM5 6h3v1h-3zM9 6h1v1h-1zM11 6h1v1h-1zM13 6h1v1h-1zM16 6h2v1h-2zM2 7h2v1h-2zM7 7h1v1h-1zM11 7h1v1h-1zM16 7h2v1h-2zM2 8h16v1h-16zM3 9h14v1h-14zM3 11h1v1h-1zM7 11h1v1h-1zM11 11h1v1h-1zM15 11h1v1h-1zM4 12h1v1h-1zM6 12h1v1h-1zM8 12h1v1h-1zM10 12h1v1h-1zM12 12h1v1h-1zM14 12h1v1h-1zM16 12h1v1h-1zM5 13h1v1h-1zM9 13h1v1h-1zM13 13h1v1h-1zM4 14h1v1h-1zM6 14h1v1h-1zM9 14h2v1h-2zM13 14h1v1h-1zM15 14h1v1h-1z" fill="#fff"/><path d="M2 1h14v1h-14zM1 2h16v1h-16zM1 3h2v1h-2zM6 3h1v1h-1zM10 3h1v1h-1zM15 3h2v1h-2zM1 4h2v1h-2zM4 4h3v1h-3zM8 4h1v1h-1zM10 4h1v1h-1zM12 4h1v1h-1zM15 4h2v1h-2zM1 5h2v1h-2zM4 5h3v1h-3zM8 5h1v1h-1zM10 5h1v1h-1zM12 5h1v1h-1zM15 5h2v1h-2zM1 6h2v1h-2zM6 6h1v1h-1zM10 6h1v1h-1zM15 6h2v1h-2zM1 7h16v1h-16zM2 8h14v1h-14zM2 10h1v1h-1zM6 10h1v1h-1zM10 10h1v1h-1zM14 10h1v1h-1zM3 11h1v1h-1zM5 11h1v1h-1zM7 11h1v1h-1zM9 11h1v1h-1zM11 11h1v1h-1zM13 11h1v1h-1zM15 11h1v1h-1zM4 12h1v1h-1zM8 12h1v1h-1zM12 12h1v1h-1zM3 13h1v1h-1zM5 13h1v1h-1zM8 13h2v1h-2zM12 13h1v1h-1zM14 13h1v1h-1z" fill="#808080"/></svg>
<svg style="left:810px;top:45px" width="20" height="17"><path d="M3 2h14v1h-14zM2 3h16v1h-16zM2 4h2v1h-2zM7 4h1v1h-1zM11 4h1v1h-1zM16 4h2v1h-2zM2 5h2v1h-2zM5 5h3v1h-3zM9 5h1v1h-1zM11 5h1v1h-1zM13 5h1v1h-1zM16 5h2v1h-2zM2 6h2v1h-2zM5 6h3v1h-3zM9 6h1v1h-1zM11 6h1v1h-1zM13 6h1v1h-1zM16 6h2v1h-2zM2 7h2v1h-2zM7 7h1v1h-1zM11 7h1v1h-1zM16 7h2v1h-2zM2 8h16v1h-16zM3 9h14v1h-14zM3 11h1v1h-1zM5 11h3v1h-3zM9 11h4v1h-4zM14 11h3v1h-3zM18 11h1v1h-1zM2 12h1v1h-1zM4 12h2v1h-2zM7 12h2v1h-2zM10 12h1v1h-1zM13 12h2v1h-2zM16 12h2v1h-2zM19 12h1v1h-1zM2 13h1v1h-1zM4 13h1v1h-1zM6 13h2v1h-2zM10 13h1v1h-1zM12 13h1v1h-1zM15 13h2v1h-2zM19 13h1v1h-1zM3 14h5v1h-5zM9 14h2v1h-2zM12 14h5v1h-5zM18 14h1v1h-1z" fill="#fff"/><path d="M2 1h14v1h-14zM1 2h16v1h-16zM1 3h2v1h-2zM6 3h1v1h-1zM10 3h1v1h-1zM15 3h2v1h-2zM1 4h2v1h-2zM4 4h3v1h-3zM8 4h1v1h-1zM10 4h1v1h-1zM12 4h1v1h-1zM15 4h2v1h-2zM1 5h2v1h-2zM4 5h3v1h-3zM8 5h1v1h-1zM10 5h1v1h-1zM12 5h1v1h-1zM15 5h2v1h-2zM1 6h2v1h-2zM6 6h1v1h-1zM10 6h1v1h-1zM15 6h2v1h-2zM1 7h16v1h-16zM2 8h14v1h-14zM2 10h1v1h-1zM4 10h3v1h-3zM8 10h4v1h-4zM13 10h3v1h-3zM17 10h1v1h-1zM1 11h1v1h-1zM3 11h2v1h-2zM6 11h2v1h-2zM9 11h1v1h-1zM12 11h2v1h-2zM15 11h2v1h-2zM18 11h1v1h-1zM1 12h1v1h-1zM3 12h1v1h-1zM5 12h2v1h-2zM9 12h1v1h-1zM11 12h1v1h-1zM14 12h2v1h-2zM18 12h1v1h-1zM2 13h5v1h-5zM8 13h2v1h-2zM11 13h5v1h-5zM17 13h1v1h-1z" fill="#808080"/></svg>
<svg style="left:833px;top:45px" width="20" height="17"><path d="M3 2h14v1h-14zM2 3h16v1h-16zM2 4h2v1h-2zM7 4h1v1h-1zM11 4h1v1h-1zM16 4h2v1h-2zM2 5h2v1h-2zM5 5h3v1h-3zM9 5h1v1h-1zM11 5h1v1h-1zM13 5h1v1h-1zM16 5h2v1h-2zM2 6h2v1h-2zM5 6h3v1h-3zM9 6h1v1h-1zM11 6h1v1h-1zM13 6h1v1h-1zM16 6h2v1h-2zM2 7h2v1h-2zM7 7h1v1h-1zM11 7h1v1h-1zM16 7h2v1h-2zM2 8h16v1h-16zM3 9h14v1h-14zM6 11h1v1h-1zM3 12h4v1h-4zM8 12h1v1h-1zM10 12h1v1h-1zM12 12h1v1h-1zM14 12h3v1h-3zM3 13h1v1h-1zM6 13h1v1h-1zM14 13h1v1h-1zM17 13h1v1h-1zM3 14h4v1h-4zM8 14h1v1h-1zM10 14h1v1h-1zM12 14h1v1h-1zM14 14h3v1h-3zM14 15h1v1h-1z" fill="#fff"/><path d="M2 1h14v1h-14zM1 2h16v1h-16zM1 3h2v1h-2zM6 3h1v1h-1zM10 3h1v1h-1zM15 3h2v1h-2zM1 4h2v1h-2zM4 4h3v1h-3zM8 4h1v1h-1zM10 4h1v1h-1zM12 4h1v1h-1zM15 4h2v1h-2zM1 5h2v1h-2zM4 5h3v1h-3zM8 5h1v1h-1zM10 5h1v1h-1zM12 5h1v1h-1zM15 5h2v1h-2zM1 6h2v1h-2zM6 6h1v1h-1zM10 6h1v1h-1zM15 6h2v1h-2zM1 7h16v1h-16zM2 8h14v1h-14zM5 10h1v1h-1zM2 11h4v1h-4zM7 11h1v1h-1zM9 11h1v1h-1zM11 11h1v1h-1zM13 11h3v1h-3zM2 12h1v1h-1zM5 12h1v1h-1zM13 12h1v1h-1zM16 12h1v1h-1zM2 13h4v1h-4zM7 13h1v1h-1zM9 13h1v1h-1zM11 13h1v1h-1zM13 13h3v1h-3zM13 14h1v1h-1z" fill="#808080"/></svg>
<div style="left:858px;top:42px;width:1px;height:23px;background:#808080;"></div>
<div style="left:859px;top:42px;width:1px;height:23px;background:#fff;"></div>
<svg style="left:864px;top:45px" width="20" height="17"><path d="M11 3h6v1h-6zM11 4h1v1h-1zM11 5h1v1h-1zM11 6h1v1h-1zM11 7h1v1h-1zM11 8h1v1h-1zM5 9h7v1h-7zM3 12h1v1h-1zM5 12h3v1h-3zM9 12h4v1h-4zM14 12h3v1h-3zM18 12h1v1h-1zM2 13h1v1h-1zM4 13h2v1h-2zM7 13h2v1h-2zM10 13h1v1h-1zM13 13h2v1h-2zM16 13h2v1h-2zM19 13h1v1h-1zM2 14h1v1h-1zM4 14h1v1h-1zM6 14h2v1h-2zM10 14h1v1h-1zM12 14h1v1h-1zM15 14h2v1h-2zM19 14h1v1h-1zM3 15h5v1h-5zM9 15h2v1h-2zM12 15h5v1h-5zM18 15h1v1h-1z" fill="#fff"/><path d="M10 2h6v1h-6zM10 3h1v1h-1zM10 4h1v1h-1zM10 5h1v1h-1zM10 6h1v1h-1zM10 7h1v1h-1zM4 8h7v1h-7zM2 11h1v1h-1zM4 11h3v1h-3zM8 11h4v1h-4zM13 11h3v1h-3zM17 11h1v1h-1zM1 12h1v1h-1zM3 12h2v1h-2zM6 12h2v1h-2zM9 12h1v1h-1zM12 12h2v1h-2zM15 12h2v1h-2zM18 12h1v1h-1zM1 13h1v1h-1zM3 13h1v1h-1zM5 13h2v1h-2zM9 13h1v1h-1zM11 13h1v1h-1zM14 13h2v1h-2zM18 13h1v1h-1zM2 14h5v1h-5zM8 14h2v1h-2zM11 14h5v1h-5zM17 14h1v1h-1z" fill="#808080"/></svg>
<svg style="left:887px;top:45px" width="20" height="17"><path d="M4 4h1v1h-1zM4 5h1v1h-1zM6 5h1v1h-1zM4 6h1v1h-1zM6 6h1v1h-1zM4 7h1v1h-1zM6 7h1v1h-1zM8 7h1v1h-1zM13 7h1v1h-1zM4 8h1v1h-1zM6 8h1v1h-1zM8 8h1v1h-1zM11 8h1v1h-1zM13 8h1v1h-1zM15 8h1v1h-1zM4 9h1v1h-1zM6 9h1v1h-1zM8 9h1v1h-1zM11 9h1v1h-1zM13 9h1v1h-1zM15 9h1v1h-1zM4 10h1v1h-1zM6 10h1v1h-1zM8 10h1v1h-1zM11 10h1v1h-1zM13 10h1v1h-1zM15 10h1v1h-1zM4 11h14v1h-14zM4 12h1v1h-1zM8 12h2v1h-2zM13 12h2v1h-2zM5 13h3v1h-3zM10 13h3v1h-3zM15 13h3v1h-3z" fill="#fff"/><path d="M3 3h1v1h-1zM3 4h1v1h-1zM5 4h1v1h-1zM3 5h1v1h-1zM5 5h1v1h-1zM3 6h1v1h-1zM5 6h1v1h-1zM7 6h1v1h-1zM12 6h1v1h-1zM3 7h1v1h-1zM5 7h1v1h-1zM7 7h1v1h-1zM10 7h1v1h-1zM12 7h1v1h-1zM14 7h1v1h-1zM3 8h1v1h-1zM5 8h1v1h-1zM7 8h1v1h-1zM10 8h1v1h-1zM12 8h1v1h-1zM14 8h1v1h-1zM3 9h1v1h-1zM5 9h1v1h-1zM7 9h1v1h-1zM10 9h1v1h-1zM12 9h1v1h-1zM14 9h1v1h-1zM3 10h14v1h-14zM3 11h1v1h-1zM7 11h2v1h-2zM12 11h2v1h-2zM4 12h3v1h-3zM9 12h3v1h-3zM14 12h3v1h-3z" fill="#808080"/></svg>
<div style="left:912px;top:42px;width:1px;height:23px;background:#808080;"></div>
<div style="left:913px;top:42px;width:1px;height:23px;background:#fff;"></div>
<svg style="left:918px;top:45px" width="20" height="17"><path d="M4 3h3v1h-3zM3 4h10v1h-10zM3 5h5v1h-5zM12 5h1v1h-1zM3 6h5v1h-5zM12 6h1v1h-1zM3 7h5v1h-5zM12 7h1v1h-1zM3 8h5v1h-5zM12 8h1v1h-1zM4 9h3v1h-3zM11 9h3v1h-3zM10 10h5v1h-5zM10 11h1v1h-1zM12 11h1v1h-1zM14 11h1v1h-1zM9 12h9v1h-9zM9 13h1v1h-1zM11 13h1v1h-1zM13 13h1v1h-1zM15 13h1v1h-1zM17 13h1v1h-1zM9 14h9v1h-9zM10 15h7v1h-7z" fill="#fff"/><path d="M3 2h3v1h-3zM2 3h10v1h-10zM2 4h5v1h-5zM11 4h1v1h-1zM2 5h5v1h-5zM11 5h1v1h-1zM2 6h5v1h-5zM11 6h1v1h-1zM2 7h5v1h-5zM11 7h1v1h-1zM3 8h3v1h-3zM10 8h3v1h-3zM9 9h5v1h-5zM9 10h1v1h-1zM11 10h1v1h-1zM13 10h1v1h-1zM8 11h9v1h-9zM8 12h1v1h-1zM10 12h1v1h-1zM12 12h1v1h-1zM14 12h1v1h-1zM16 12h1v1h-1zM8 13h9v1h-9zM9 14h7v1h-7z" fill="#808080"/></svg>
<svg style="left:941px;top:45px" width="20" height="17"><path d="M14 2h2v1h-2zM13 3h1v1h-1zM16 3h1v1h-1zM10 4h4v1h-4zM16 4h1v1h-1zM9 5h7v1h-7zM9 6h6v1h-6zM9 7h6v1h-6zM10 8h4v1h-4zM10 9h2v1h-2zM4 11h9v1h-9zM3 12h2v1h-2zM6 12h1v1h-1zM8 12h1v1h-1zM10 12h1v1h-1zM13 12h1v1h-1zM3 13h1v1h-1zM13 13h1v1h-1zM3 14h2v1h-2zM6 14h1v1h-1zM8 14h1v1h-1zM10 14h1v1h-1zM12 14h2v1h-2zM4 15h9v1h-9z" fill="#fff"/><path d="M13 1h2v1h-2zM12 2h1v1h-1zM15 2h1v1h-1zM9 3h4v1h-4zM15 3h1v1h-1zM8 4h7v1h-7zM8 5h6v1h-6zM8 6h6v1h-6zM9 7h4v1h-4zM9 8h2v1h-2zM3 10h9v1h-9zM2 11h2v1h-2zM5 11h1v1h-1zM7 11h1v1h-1zM9 11h1v1h-1zM12 11h1v1h-1zM2 12h1v1h-1zM12 12h1v1h-1zM2 13h2v1h-2zM5 13h1v1h-1zM7 13h1v1h-1zM9 13h1v1h-1zM11 13h2v1h-2zM3 14h9v1h-9z" fill="#808080"/></svg>
<div style="left:5px;top:69px;width:587px;height:1px;background:#fff;"></div>
<div style="left:5px;top:69px;width:1px;height:29px;background:#fff;"></div>
<div style="left:5px;top:98px;width:587px;height:1px;background:#808080;"></div>
<div style="left:591px;top:69px;width:1px;height:29px;background:#808080;"></div>
<div style="left:9px;top:71px;width:3px;height:26px;box-shadow:inset -1px -1px #808080,inset 2px 1px #fff;"></div>
<div style="left:13px;top:71px;width:3px;height:26px;box-shadow:inset -1px -1px #808080,inset 2px 1px #fff;"></div>
<svg style="left:18px;top:75px" width="20" height="17"><path d="M7 6h4v1h-4zM6 7h1v1h-1zM11 7h1v1h-1zM6 8h1v1h-1zM8 8h1v1h-1zM11 8h1v1h-1zM6 9h1v1h-1zM9 9h1v1h-1zM11 9h1v1h-1zM6 10h1v1h-1zM11 10h1v1h-1zM7 11h4v1h-4zM12 11h1v1h-1zM13 12h1v1h-1zM14 13h1v1h-1zM15 14h1v1h-1z" fill="#fff"/><path d="M6 5h4v1h-4zM5 6h1v1h-1zM10 6h1v1h-1zM5 7h1v1h-1zM7 7h1v1h-1zM10 7h1v1h-1zM5 8h1v1h-1zM8 8h1v1h-1zM10 8h1v1h-1zM5 9h1v1h-1zM10 9h1v1h-1zM6 10h4v1h-4zM11 10h1v1h-1zM12 11h1v1h-1zM13 12h1v1h-1zM14 13h1v1h-1z" fill="#808080"/></svg>
<svg style="left:41px;top:75px" width="20" height="17"><path d="M5 2h4v1h-4zM18 2h2v1h-2zM4 3h1v1h-1zM6 3h1v1h-1zM8 3h2v1h-2zM17 3h2v1h-2zM3 4h2v1h-2zM9 4h2v1h-2zM16 4h2v1h-2zM3 5h1v1h-1zM10 5h1v1h-1zM15 5h2v1h-2zM3 6h2v1h-2zM9 6h2v1h-2zM14 6h2v1h-2zM4 7h1v1h-1zM6 7h1v1h-1zM8 7h2v1h-2zM13 7h2v1h-2zM5 8h5v1h-5zM12 8h2v1h-2zM10 9h3v1h-3zM4 10h9v1h-9zM5 11h5v1h-5zM11 11h3v1h-3zM6 12h3v1h-3zM12 12h3v1h-3zM7 13h1v1h-1zM13 13h3v1h-3zM6 14h1v1h-1zM14 14h3v1h-3zM5 15h1v1h-1zM15 15h3v1h-3z" fill="#fff"/><path d="M4 1h4v1h-4zM17 1h2v1h-2zM3 2h1v1h-1zM5 2h1v1h-1zM7 2h2v1h-2zM16 2h2v1h-2zM2 3h2v1h-2zM8 3h2v1h-2zM15 3h2v1h-2zM2 4h1v1h-1zM9 4h1v1h-1zM14 4h2v1h-2zM2 5h2v1h-2zM8 5h2v1h-2zM13 5h2v1h-2zM3 6h1v1h-1zM5 6h1v1h-1zM7 6h2v1h-2zM12 6h2v1h-2zM4 7h5v1h-5zM11 7h2v1h-2zM9 8h3v1h-3zM3 9h9v1h-9zM4 10h5v1h-5zM10 10h3v1h-3zM5 11h3v1h-3zM11 11h3v1h-3zM6 12h1v1h-1zM12 12h3v1h-3zM5 13h1v1h-1zM13 13h3v1h-3zM4 14h1v1h-1zM14 14h3v1h-3z" fill="#808080"/></svg>
<svg style="left:64px;top:75px" width="20" height="17"><path d="M7 2h5v1h-5zM5 3h2v1h-2zM12 3h2v1h-2zM4 4h1v1h-1zM14 4h1v1h-1zM3 5h1v1h-1zM15 5h1v1h-1zM3 6h1v1h-1zM15 6h1v1h-1zM3 7h1v1h-1zM15 7h1v1h-1zM3 8h1v1h-1zM7 8h1v1h-1zM11 8h1v1h-1zM15 8h1v1h-1zM3 9h1v1h-1zM8 9h3v1h-3zM15 9h1v1h-1zM4 10h1v1h-1zM14 10h1v1h-1zM5 11h2v1h-2zM12 11h2v1h-2zM7 12h7v1h-7zM14 13h2v1h-2zM15 14h2v1h-2zM16 15h2v1h-2zM17 16h2v1h-2z" fill="#fff"/><path d="M6 1h5v1h-5zM4 2h2v1h-2zM11 2h2v1h-2zM3 3h1v1h-1zM13 3h1v1h-1zM2 4h1v1h-1zM14 4h1v1h-1zM2 5h1v1h-1zM14 5h1v1h-1zM2 6h1v1h-1zM14 6h1v1h-1zM2 7h1v1h-1zM6 7h1v1h-1zM10 7h1v1h-1zM14 7h1v1h-1zM2 8h1v1h-1zM7 8h3v1h-3zM14 8h1v1h-1zM3 9h1v1h-1zM13 9h1v1h-1zM4 10h2v1h-2zM11 10h2v1h-2zM6 11h7v1h-7zM13 12h2v1h-2zM14 13h2v1h-2zM15 14h2v1h-2zM16 15h2v1h-2z" fill="#808080"/></svg>
<svg style="left:87px;top:75px" width="20" height="17"><path d="M5 2h4v1h-4zM4 3h1v1h-1zM6 3h1v1h-1zM8 3h2v1h-2zM3 4h2v1h-2zM9 4h2v1h-2zM3 5h1v1h-1zM10 5h1v1h-1zM3 6h2v1h-2zM9 6h2v1h-2zM4 7h1v1h-1zM6 7h1v1h-1zM8 7h2v1h-2zM5 8h6v1h-6zM11 9h2v1h-2zM12 10h2v1h-2zM13 11h2v1h-2zM14 12h2v1h-2zM15 13h2v1h-2zM16 14h2v1h-2zM17 15h2v1h-2z" fill="#fff"/><path d="M4 1h4v1h-4zM3 2h1v1h-1zM5 2h1v1h-1zM7 2h2v1h-2zM2 3h2v1h-2zM8 3h2v1h-2zM2 4h1v1h-1zM9 4h1v1h-1zM2 5h2v1h-2zM8 5h2v1h-2zM3 6h1v1h-1zM5 6h1v1h-1zM7 6h2v1h-2zM4 7h6v1h-6zM10 8h2v1h-2zM11 9h2v1h-2zM12 10h2v1h-2zM13 11h2v1h-2zM14 12h2v1h-2zM15 13h2v1h-2zM16 14h2v1h-2z" fill="#808080"/></svg>
<div style="left:113px;top:72px;width:1px;height:23px;background:#808080;"></div>
<div style="left:114px;top:72px;width:1px;height:23px;background:#fff;"></div>
<svg style="left:118px;top:75px" width="20" height="17"><path d="M5 4h1v1h-1zM9 4h1v1h-1zM13 4h1v1h-1zM17 4h1v1h-1zM5 8h1v1h-1zM9 8h1v1h-1zM13 8h1v1h-1zM17 8h1v1h-1zM5 12h1v1h-1zM9 12h1v1h-1zM13 12h1v1h-1zM17 12h1v1h-1zM5 16h1v1h-1zM9 16h1v1h-1zM13 16h1v1h-1zM17 16h1v1h-1z" fill="#fff"/><path d="M4 3h1v1h-1zM8 3h1v1h-1zM12 3h1v1h-1zM16 3h1v1h-1zM4 7h1v1h-1zM8 7h1v1h-1zM12 7h1v1h-1zM16 7h1v1h-1zM4 11h1v1h-1zM8 11h1v1h-1zM12 11h1v1h-1zM16 11h1v1h-1zM4 15h1v1h-1zM8 15h1v1h-1zM12 15h1v1h-1zM16 15h1v1h-1z" fill="#808080"/></svg>
<div style="left:140px;top:73px;width:23px;height:22px;background:repeating-conic-gradient(#fff 0 25%,#d6d3ce 0 50%) 0 0/2px 2px;box-shadow:inset 1px 1px #808080,inset -1px -1px #fff;"></div>
<svg style="left:142px;top:76px" width="20" height="17"><path d="M2 12h9v1h-9zM2 13h9v1h-9zM2 14h9v1h-9z" fill="#ffff80"/><path d="M7 1h6v1h-6zM4 2h3v1h-3zM13 2h3v1h-3zM3 3h1v1h-1zM16 3h1v1h-1zM2 4h1v1h-1zM7 4h1v1h-1zM11 4h1v1h-1zM16 4h1v1h-1zM2 5h1v1h-1zM8 5h1v1h-1zM10 5h1v1h-1zM16 5h1v1h-1zM2 6h1v1h-1zM16 6h1v1h-1zM3 7h2v1h-2zM14 7h3v1h-3zM5 8h8v1h-8zM15 8h1v1h-1zM12 9h1v1h-1zM15 9h1v1h-1zM13 10h1v1h-1zM15 10h1v1h-1zM14 11h2v1h-2zM13 12h2v1h-2zM12 13h3v1h-3z" fill="#000000"/><path d="M2 11h9v1h-9zM1 12h1v1h-1zM11 12h1v1h-1zM1 13h1v1h-1zM11 13h1v1h-1zM1 14h1v1h-1zM11 14h1v1h-1zM2 15h9v1h-9z" fill="#808000"/><path d="M7 2h6v1h-6zM4 3h12v1h-12zM3 4h4v1h-4zM8 4h3v1h-3zM12 4h4v1h-4zM3 5h5v1h-5zM9 5h1v1h-1zM11 5h5v1h-5zM3 6h13v1h-13zM5 7h9v1h-9zM13 8h2v1h-2zM13 9h2v1h-2zM14 10h1v1h-1z" fill="#ffffff"/></svg>
<svg style="left:164px;top:75px" width="20" height="17"><path d="M4 2h1v1h-1zM3 3h3v1h-3zM4 4h1v1h-1zM4 7h1v1h-1zM3 8h3v1h-3zM4 9h1v1h-1zM4 12h1v1h-1zM3 13h3v1h-3zM4 14h1v1h-1z" fill="#000080"/><path d="M9 3h10v1h-10zM9 4h1v1h-1zM11 4h1v1h-1zM13 4h1v1h-1zM15 4h1v1h-1zM17 4h1v1h-1zM9 8h10v1h-10zM9 9h1v1h-1zM11 9h1v1h-1zM13 9h1v1h-1zM15 9h1v1h-1zM17 9h1v1h-1zM9 13h10v1h-10zM9 14h1v1h-1zM11 14h1v1h-1zM13 14h1v1h-1zM15 14h1v1h-1zM17 14h1v1h-1z" fill="#808080"/></svg>
<svg style="left:187px;top:75px" width="20" height="17"><path d="M3 2h2v1h-2zM18 2h2v1h-2zM3 3h2v1h-2zM7 3h2v1h-2zM10 3h2v1h-2zM18 3h2v1h-2zM3 4h2v1h-2zM7 4h2v1h-2zM10 4h6v1h-6zM18 4h2v1h-2zM3 5h2v1h-2zM7 5h2v1h-2zM10 5h6v1h-6zM18 5h2v1h-2zM3 6h6v1h-6zM10 6h10v1h-10zM3 7h2v1h-2zM7 7h2v1h-2zM10 7h6v1h-6zM18 7h2v1h-2zM3 8h2v1h-2zM7 8h2v1h-2zM10 8h2v1h-2zM18 8h2v1h-2zM3 9h2v1h-2zM18 9h2v1h-2zM3 10h2v1h-2zM13 10h3v1h-3zM18 10h2v1h-2zM3 11h6v1h-6zM12 11h1v1h-1zM16 11h1v1h-1zM18 11h2v1h-2zM3 12h10v1h-10zM16 12h4v1h-4zM3 13h6v1h-6zM12 13h1v1h-1zM16 13h1v1h-1zM18 13h2v1h-2zM3 14h2v1h-2zM13 14h3v1h-3zM18 14h2v1h-2zM3 15h2v1h-2zM18 15h2v1h-2zM3 16h2v1h-2zM18 16h2v1h-2z" fill="#fff"/><path d="M2 1h2v1h-2zM17 1h2v1h-2zM2 2h2v1h-2zM6 2h2v1h-2zM9 2h2v1h-2zM17 2h2v1h-2zM2 3h2v1h-2zM6 3h2v1h-2zM9 3h6v1h-6zM17 3h2v1h-2zM2 4h2v1h-2zM6 4h2v1h-2zM9 4h6v1h-6zM17 4h2v1h-2zM2 5h6v1h-6zM9 5h10v1h-10zM2 6h2v1h-2zM6 6h2v1h-2zM9 6h6v1h-6zM17 6h2v1h-2zM2 7h2v1h-2zM6 7h2v1h-2zM9 7h2v1h-2zM17 7h2v1h-2zM2 8h2v1h-2zM17 8h2v1h-2zM2 9h2v1h-2zM12 9h3v1h-3zM17 9h2v1h-2zM2 10h6v1h-6zM11 10h1v1h-1zM15 10h1v1h-1zM17 10h2v1h-2zM2 11h10v1h-10zM15 11h4v1h-4zM2 12h6v1h-6zM11 12h1v1h-1zM15 12h1v1h-1zM17 12h2v1h-2zM2 13h2v1h-2zM12 13h3v1h-3zM17 13h2v1h-2zM2 14h2v1h-2zM17 14h2v1h-2zM2 15h2v1h-2zM17 15h2v1h-2z" fill="#808080"/></svg>
<div style="left:209px;top:73px;width:23px;height:22px;background:repeating-conic-gradient(#fff 0 25%,#d6d3ce 0 50%) 0 0/2px 2px;box-shadow:inset 1px 1px #808080,inset -1px -1px #fff;"></div>
<svg style="left:211px;top:76px" width="20" height="17"><path d="M2 1h2v1h-2zM2 2h2v1h-2zM2 3h2v1h-2zM2 4h2v1h-2zM2 5h2v1h-2zM2 6h2v1h-2zM2 7h2v1h-2zM2 8h2v1h-2zM2 9h2v1h-2zM2 10h2v1h-2zM2 11h2v1h-2zM2 12h2v1h-2zM2 13h2v1h-2zM2 14h2v1h-2z" fill="#008000"/><path d="M5 1h2v1h-2zM16 1h2v1h-2zM5 2h1v1h-1zM8 2h7v1h-7zM17 2h1v1h-1zM5 3h1v1h-1zM9 3h1v1h-1zM11 3h1v1h-1zM13 3h1v1h-1zM17 3h1v1h-1zM5 4h2v1h-2zM16 4h2v1h-2zM5 6h2v1h-2zM16 6h2v1h-2zM5 7h1v1h-1zM8 7h7v1h-7zM17 7h1v1h-1zM5 8h1v1h-1zM9 8h1v1h-1zM11 8h1v1h-1zM13 8h1v1h-1zM17 8h1v1h-1zM5 9h2v1h-2zM16 9h2v1h-2zM5 11h2v1h-2zM16 11h2v1h-2zM5 12h1v1h-1zM8 12h7v1h-7zM17 12h1v1h-1zM5 13h1v1h-1zM9 13h1v1h-1zM11 13h1v1h-1zM13 13h1v1h-1zM17 13h1v1h-1zM5 14h2v1h-2zM16 14h2v1h-2z" fill="#000000"/><path d="M7 1h9v1h-9zM6 2h2v1h-2zM15 2h2v1h-2zM6 3h3v1h-3zM10 3h1v1h-1zM12 3h1v1h-1zM14 3h3v1h-3zM7 4h9v1h-9zM7 6h9v1h-9zM6 7h2v1h-2zM15 7h2v1h-2zM6 8h3v1h-3zM10 8h1v1h-1zM12 8h1v1h-1zM14 8h3v1h-3zM7 9h9v1h-9zM7 11h9v1h-9zM6 12h2v1h-2zM15 12h2v1h-2zM6 13h3v1h-3zM10 13h1v1h-1zM12 13h1v1h-1zM14 13h3v1h-3zM7 14h9v1h-9z" fill="#ffff00"/></svg>
<svg style="left:233px;top:75px" width="20" height="17"><path d="M4 3h9v1h-9zM5 4h8v1h-8zM5 5h8v1h-8zM5 6h1v1h-1zM5 7h1v1h-1zM5 8h1v1h-1zM8 8h8v1h-8zM5 9h1v1h-1zM8 9h8v1h-8zM5 10h11v1h-11zM5 11h1v1h-1zM8 11h8v1h-8zM5 12h1v1h-1zM5 13h1v1h-1zM8 13h10v1h-10zM5 14h13v1h-13zM8 15h10v1h-10zM8 16h10v1h-10z" fill="#fff"/><path d="M3 2h9v1h-9zM4 3h8v1h-8zM4 4h8v1h-8zM4 5h1v1h-1zM4 6h1v1h-1zM4 7h1v1h-1zM7 7h8v1h-8zM4 8h1v1h-1zM7 8h8v1h-8zM4 9h11v1h-11zM4 10h1v1h-1zM7 10h8v1h-8zM4 11h1v1h-1zM4 12h1v1h-1zM7 12h10v1h-10zM4 13h13v1h-13zM7 14h10v1h-10zM7 15h10v1h-10z" fill="#808080"/></svg>
<div style="left:259px;top:72px;width:1px;height:23px;background:#808080;"></div>
<div style="left:260px;top:72px;width:1px;height:23px;background:#fff;"></div>
<svg style="left:264px;top:75px" width="20" height="17"><path d="M5 2h1v1h-1zM5 3h2v1h-2zM5 4h1v1h-1zM7 4h1v1h-1zM5 5h1v1h-1zM8 5h1v1h-1zM5 6h1v1h-1zM9 6h1v1h-1zM5 7h1v1h-1zM10 7h1v1h-1zM5 8h1v1h-1zM11 8h1v1h-1zM5 9h1v1h-1zM12 9h1v1h-1zM5 10h1v1h-1zM9 10h5v1h-5zM5 11h1v1h-1zM7 11h1v1h-1zM10 11h1v1h-1zM5 12h2v1h-2zM8 12h1v1h-1zM11 12h1v1h-1zM5 13h1v1h-1zM8 13h1v1h-1zM11 13h1v1h-1zM9 14h1v1h-1zM12 14h1v1h-1zM9 15h1v1h-1zM12 15h1v1h-1zM10 16h2v1h-2z" fill="#fff"/><path d="M4 1h1v1h-1zM4 2h2v1h-2zM4 3h1v1h-1zM6 3h1v1h-1zM4 4h1v1h-1zM7 4h1v1h-1zM4 5h1v1h-1zM8 5h1v1h-1zM4 6h1v1h-1zM9 6h1v1h-1zM4 7h1v1h-1zM10 7h1v1h-1zM4 8h1v1h-1zM11 8h1v1h-1zM4 9h1v1h-1zM8 9h5v1h-5zM4 10h1v1h-1zM6 10h1v1h-1zM9 10h1v1h-1zM4 11h2v1h-2zM7 11h1v1h-1zM10 11h1v1h-1zM4 12h1v1h-1zM7 12h1v1h-1zM10 12h1v1h-1zM8 13h1v1h-1zM11 13h1v1h-1zM8 14h1v1h-1zM11 14h1v1h-1zM9 15h2v1h-2z" fill="#808080"/></svg>
<svg style="left:287px;top:75px" width="20" height="17"><path d="M7 4h2v1h-2zM14 4h2v1h-2zM7 5h2v1h-2zM14 5h2v1h-2zM7 6h2v1h-2zM14 6h2v1h-2zM7 7h2v1h-2zM14 7h2v1h-2zM7 8h2v1h-2zM14 8h2v1h-2zM3 9h6v1h-6zM14 9h5v1h-5zM3 10h6v1h-6zM14 10h5v1h-5zM7 11h2v1h-2zM14 11h2v1h-2zM7 12h2v1h-2zM14 12h2v1h-2zM7 13h2v1h-2zM14 13h2v1h-2zM7 14h2v1h-2zM14 14h2v1h-2z" fill="#fff"/><path d="M6 3h2v1h-2zM13 3h2v1h-2zM6 4h2v1h-2zM13 4h2v1h-2zM6 5h2v1h-2zM13 5h2v1h-2zM6 6h2v1h-2zM13 6h2v1h-2zM6 7h2v1h-2zM13 7h2v1h-2zM2 8h6v1h-6zM13 8h5v1h-5zM2 9h6v1h-6zM13 9h5v1h-5zM6 10h2v1h-2zM13 10h2v1h-2zM6 11h2v1h-2zM13 11h2v1h-2zM6 12h2v1h-2zM13 12h2v1h-2zM6 13h2v1h-2zM13 13h2v1h-2z" fill="#808080"/></svg>
<svg style="left:310px;top:75px" width="20" height="17"><path d="M7 4h2v1h-2zM14 4h2v1h-2zM7 5h2v1h-2zM14 5h2v1h-2zM7 6h2v1h-2zM14 6h2v1h-2zM7 7h2v1h-2zM13 7h3v1h-3zM7 8h2v1h-2zM12 8h4v1h-4zM3 9h6v1h-6zM11 9h2v1h-2zM14 9h5v1h-5zM3 10h6v1h-6zM10 10h2v1h-2zM14 10h5v1h-5zM7 11h4v1h-4zM14 11h2v1h-2zM7 12h3v1h-3zM14 12h2v1h-2zM7 13h2v1h-2zM14 13h2v1h-2zM7 14h2v1h-2zM14 14h2v1h-2z" fill="#fff"/><path d="M6 3h2v1h-2zM13 3h2v1h-2zM6 4h2v1h-2zM13 4h2v1h-2zM6 5h2v1h-2zM13 5h2v1h-2zM6 6h2v1h-2zM12 6h3v1h-3zM6 7h2v1h-2zM11 7h4v1h-4zM2 8h6v1h-6zM10 8h2v1h-2zM13 8h5v1h-5zM2 9h6v1h-6zM9 9h2v1h-2zM13 9h5v1h-5zM6 10h4v1h-4zM13 10h2v1h-2zM6 11h3v1h-3zM13 11h2v1h-2zM6 12h2v1h-2zM13 12h2v1h-2zM6 13h2v1h-2zM13 13h2v1h-2z" fill="#808080"/></svg>
<svg style="left:333px;top:75px" width="20" height="17"><path d="M3 4h2v1h-2zM7 4h2v1h-2zM14 4h2v1h-2zM18 4h2v1h-2zM3 5h2v1h-2zM7 5h2v1h-2zM14 5h2v1h-2zM18 5h2v1h-2zM3 6h2v1h-2zM7 6h2v1h-2zM14 6h2v1h-2zM18 6h2v1h-2zM3 7h2v1h-2zM7 7h2v1h-2zM14 7h2v1h-2zM18 7h2v1h-2zM3 8h2v1h-2zM7 8h2v1h-2zM14 8h2v1h-2zM18 8h2v1h-2zM3 9h6v1h-6zM14 9h6v1h-6zM3 10h6v1h-6zM14 10h6v1h-6zM7 11h2v1h-2zM14 11h2v1h-2zM7 12h2v1h-2zM14 12h2v1h-2zM7 13h2v1h-2zM14 13h2v1h-2zM7 14h2v1h-2zM14 14h2v1h-2z" fill="#fff"/><path d="M2 3h2v1h-2zM6 3h2v1h-2zM13 3h2v1h-2zM17 3h2v1h-2zM2 4h2v1h-2zM6 4h2v1h-2zM13 4h2v1h-2zM17 4h2v1h-2zM2 5h2v1h-2zM6 5h2v1h-2zM13 5h2v1h-2zM17 5h2v1h-2zM2 6h2v1h-2zM6 6h2v1h-2zM13 6h2v1h-2zM17 6h2v1h-2zM2 7h2v1h-2zM6 7h2v1h-2zM13 7h2v1h-2zM17 7h2v1h-2zM2 8h6v1h-6zM13 8h6v1h-6zM2 9h6v1h-6zM13 9h6v1h-6zM6 10h2v1h-2zM13 10h2v1h-2zM6 11h2v1h-2zM13 11h2v1h-2zM6 12h2v1h-2zM13 12h2v1h-2zM6 13h2v1h-2zM13 13h2v1h-2z" fill="#808080"/></svg>
<svg style="left:356px;top:75px" width="20" height="17"><path d="M3 4h2v1h-2zM7 4h2v1h-2zM14 4h2v1h-2zM18 4h2v1h-2zM3 5h2v1h-2zM7 5h2v1h-2zM14 5h2v1h-2zM18 5h2v1h-2zM3 6h2v1h-2zM7 6h2v1h-2zM13 6h3v1h-3zM18 6h2v1h-2zM3 7h2v1h-2zM7 7h2v1h-2zM12 7h4v1h-4zM18 7h2v1h-2zM3 8h2v1h-2zM7 8h2v1h-2zM11 8h2v1h-2zM14 8h2v1h-2zM17 8h2v1h-2zM3 9h6v1h-6zM10 9h2v1h-2zM14 9h5v1h-5zM3 10h8v1h-8zM14 10h5v1h-5zM7 11h3v1h-3zM14 11h2v1h-2zM7 12h2v1h-2zM14 12h2v1h-2zM7 13h2v1h-2zM14 13h2v1h-2zM7 14h2v1h-2zM14 14h2v1h-2z" fill="#fff"/><path d="M2 3h2v1h-2zM6 3h2v1h-2zM13 3h2v1h-2zM17 3h2v1h-2zM2 4h2v1h-2zM6 4h2v1h-2zM13 4h2v1h-2zM17 4h2v1h-2zM2 5h2v1h-2zM6 5h2v1h-2zM12 5h3v1h-3zM17 5h2v1h-2zM2 6h2v1h-2zM6 6h2v1h-2zM11 6h4v1h-4zM17 6h2v1h-2zM2 7h2v1h-2zM6 7h2v1h-2zM10 7h2v1h-2zM13 7h2v1h-2zM16 7h2v1h-2zM2 8h6v1h-6zM9 8h2v1h-2zM13 8h5v1h-5zM2 9h8v1h-8zM13 9h5v1h-5zM6 10h3v1h-3zM13 10h2v1h-2zM6 11h2v1h-2zM13 11h2v1h-2zM6 12h2v1h-2zM13 12h2v1h-2zM6 13h2v1h-2zM13 13h2v1h-2z" fill="#808080"/></svg>
<svg style="left:379px;top:75px" width="20" height="17"><path d="M10 3h2v1h-2zM10 4h2v1h-2zM10 5h2v1h-2zM10 6h2v1h-2zM10 7h2v1h-2zM10 8h2v1h-2zM10 9h2v1h-2zM10 10h2v1h-2zM10 11h2v1h-2zM10 12h2v1h-2zM10 13h2v1h-2zM10 14h2v1h-2zM10 15h2v1h-2z" fill="#fff"/><path d="M9 2h2v1h-2zM9 3h2v1h-2zM9 4h2v1h-2zM9 5h2v1h-2zM9 6h2v1h-2zM9 7h2v1h-2zM9 8h2v1h-2zM9 9h2v1h-2zM9 10h2v1h-2zM9 11h2v1h-2zM9 12h2v1h-2zM9 13h2v1h-2zM9 14h2v1h-2z" fill="#808080"/></svg>
<svg style="left:402px;top:75px" width="20" height="17"><path d="M3 8h16v1h-16zM3 9h16v1h-16z" fill="#fff"/><path d="M2 7h16v1h-16zM2 8h16v1h-16z" fill="#808080"/></svg>
<svg style="left:425px;top:75px" width="20" height="17"><path d="M8 4h6v1h-6zM7 5h2v1h-2zM13 5h2v1h-2zM6 6h2v1h-2zM14 6h2v1h-2zM6 7h1v1h-1zM15 7h1v1h-1zM6 8h1v1h-1zM15 8h1v1h-1zM3 9h4v1h-4zM15 9h4v1h-4zM3 10h4v1h-4zM15 10h4v1h-4zM6 11h1v1h-1zM15 11h1v1h-1zM6 12h1v1h-1zM15 12h1v1h-1zM6 13h2v1h-2zM14 13h2v1h-2zM7 14h2v1h-2zM13 14h2v1h-2zM8 15h6v1h-6z" fill="#fff"/><path d="M7 3h6v1h-6zM6 4h2v1h-2zM12 4h2v1h-2zM5 5h2v1h-2zM13 5h2v1h-2zM5 6h1v1h-1zM14 6h1v1h-1zM5 7h1v1h-1zM14 7h1v1h-1zM2 8h4v1h-4zM14 8h4v1h-4zM2 9h4v1h-4zM14 9h4v1h-4zM5 10h1v1h-1zM14 10h1v1h-1zM5 11h1v1h-1zM14 11h1v1h-1zM5 12h2v1h-2zM13 12h2v1h-2zM6 13h2v1h-2zM12 13h2v1h-2zM7 14h6v1h-6z" fill="#808080"/></svg>
<svg style="left:448px;top:75px" width="20" height="17"><path d="M8 4h6v1h-6zM16 4h2v1h-2zM7 5h2v1h-2zM13 5h4v1h-4zM6 6h2v1h-2zM13 6h3v1h-3zM6 7h1v1h-1zM12 7h2v1h-2zM15 7h1v1h-1zM6 8h1v1h-1zM11 8h2v1h-2zM15 8h1v1h-1zM3 9h4v1h-4zM10 9h2v1h-2zM15 9h4v1h-4zM3 10h4v1h-4zM9 10h2v1h-2zM15 10h4v1h-4zM6 11h1v1h-1zM8 11h2v1h-2zM15 11h1v1h-1zM6 12h3v1h-3zM15 12h1v1h-1zM6 13h3v1h-3zM14 13h2v1h-2zM5 14h5v1h-5zM13 14h2v1h-2zM4 15h2v1h-2zM8 15h6v1h-6z" fill="#fff"/><path d="M7 3h6v1h-6zM15 3h2v1h-2zM6 4h2v1h-2zM12 4h4v1h-4zM5 5h2v1h-2zM12 5h3v1h-3zM5 6h1v1h-1zM11 6h2v1h-2zM14 6h1v1h-1zM5 7h1v1h-1zM10 7h2v1h-2zM14 7h1v1h-1zM2 8h4v1h-4zM9 8h2v1h-2zM14 8h4v1h-4zM2 9h4v1h-4zM8 9h2v1h-2zM14 9h4v1h-4zM5 10h1v1h-1zM7 10h2v1h-2zM14 10h1v1h-1zM5 11h3v1h-3zM14 11h1v1h-1zM5 12h3v1h-3zM13 12h2v1h-2zM4 13h5v1h-5zM12 13h2v1h-2zM3 14h2v1h-2zM7 14h6v1h-6z" fill="#808080"/></svg>
<svg style="left:471px;top:75px" width="20" height="17"><path d="M7 3h8v1h-8zM7 4h1v1h-1zM14 4h1v1h-1zM7 5h1v1h-1zM14 5h1v1h-1zM7 6h1v1h-1zM14 6h1v1h-1zM3 7h17v1h-17zM7 8h1v1h-1zM14 8h1v1h-1zM7 9h1v1h-1zM14 9h1v1h-1zM7 10h1v1h-1zM14 10h1v1h-1zM7 11h8v1h-8zM7 12h1v1h-1zM14 12h1v1h-1zM7 13h1v1h-1zM14 13h1v1h-1zM7 14h1v1h-1zM14 14h1v1h-1zM7 15h8v1h-8z" fill="#fff"/><path d="M6 2h8v1h-8zM6 3h1v1h-1zM13 3h1v1h-1zM6 4h1v1h-1zM13 4h1v1h-1zM6 5h1v1h-1zM13 5h1v1h-1zM2 6h17v1h-17zM6 7h1v1h-1zM13 7h1v1h-1zM6 8h1v1h-1zM13 8h1v1h-1zM6 9h1v1h-1zM13 9h1v1h-1zM6 10h8v1h-8zM6 11h1v1h-1zM13 11h1v1h-1zM6 12h1v1h-1zM13 12h1v1h-1zM6 13h1v1h-1zM13 13h1v1h-1zM6 14h8v1h-8z" fill="#808080"/></svg>
<svg style="left:494px;top:75px" width="20" height="17"><path d="M7 3h8v1h-8zM7 4h1v1h-1zM14 4h1v1h-1zM7 5h1v1h-1zM14 5h1v1h-1zM3 6h17v1h-17zM7 7h1v1h-1zM14 7h1v1h-1zM7 8h1v1h-1zM14 8h1v1h-1zM3 9h17v1h-17zM7 10h1v1h-1zM14 10h1v1h-1zM7 11h8v1h-8zM7 12h1v1h-1zM14 12h1v1h-1zM3 13h5v1h-5zM14 13h1v1h-1zM7 14h1v1h-1zM14 14h1v1h-1zM7 15h8v1h-8z" fill="#fff"/><path d="M6 2h8v1h-8zM6 3h1v1h-1zM13 3h1v1h-1zM6 4h1v1h-1zM13 4h1v1h-1zM2 5h17v1h-17zM6 6h1v1h-1zM13 6h1v1h-1zM6 7h1v1h-1zM13 7h1v1h-1zM2 8h17v1h-17zM6 9h1v1h-1zM13 9h1v1h-1zM6 10h8v1h-8zM6 11h1v1h-1zM13 11h1v1h-1zM2 12h5v1h-5zM13 12h1v1h-1zM6 13h1v1h-1zM13 13h1v1h-1zM6 14h8v1h-8z" fill="#808080"/></svg>
<svg style="left:517px;top:75px" width="20" height="17"><path d="M12 3h7v1h-7zM12 4h1v1h-1zM12 5h1v1h-1zM12 6h1v1h-1zM3 7h16v1h-16zM12 8h1v1h-1zM5 9h2v1h-2zM12 9h1v1h-1zM5 10h3v1h-3zM12 10h1v1h-1zM5 11h4v1h-4zM12 11h7v1h-7zM5 12h5v1h-5zM12 12h1v1h-1zM5 13h6v1h-6zM12 13h1v1h-1zM5 14h2v1h-2zM12 14h1v1h-1zM12 15h7v1h-7z" fill="#fff"/><path d="M11 2h7v1h-7zM11 3h1v1h-1zM11 4h1v1h-1zM11 5h1v1h-1zM2 6h16v1h-16zM11 7h1v1h-1zM4 8h2v1h-2zM11 8h1v1h-1zM4 9h3v1h-3zM11 9h1v1h-1zM4 10h4v1h-4zM11 10h7v1h-7zM4 11h5v1h-5zM11 11h1v1h-1zM4 12h6v1h-6zM11 12h1v1h-1zM4 13h2v1h-2zM11 13h1v1h-1zM11 14h7v1h-7z" fill="#808080"/></svg>
<svg style="left:540px;top:75px" width="20" height="17"><path d="M4 2h2v1h-2zM4 3h2v1h-2zM4 4h2v1h-2zM4 5h2v1h-2zM4 6h2v1h-2zM4 7h2v1h-2zM4 8h2v1h-2zM4 9h2v1h-2zM4 10h2v1h-2zM4 11h2v1h-2zM4 12h15v1h-15zM4 13h15v1h-15z" fill="#fff"/><path d="M3 1h2v1h-2zM3 2h2v1h-2zM3 3h2v1h-2zM3 4h2v1h-2zM3 5h2v1h-2zM3 6h2v1h-2zM3 7h2v1h-2zM3 8h2v1h-2zM3 9h2v1h-2zM3 10h2v1h-2zM3 11h15v1h-15zM3 12h15v1h-15z" fill="#808080"/></svg>
<svg style="left:563px;top:75px" width="20" height="17"><path d="M5 2h2v1h-2zM5 3h2v1h-2zM17 3h1v1h-1zM5 4h2v1h-2zM16 4h2v1h-2zM5 5h2v1h-2zM15 5h2v1h-2zM5 6h2v1h-2zM14 6h2v1h-2zM5 7h4v1h-4zM13 7h2v1h-2zM5 8h2v1h-2zM8 8h2v1h-2zM12 8h2v1h-2zM5 9h2v1h-2zM9 9h4v1h-4zM5 10h15v1h-15zM5 11h2v1h-2zM9 11h4v1h-4zM5 12h2v1h-2zM8 12h2v1h-2zM12 12h2v1h-2zM5 13h4v1h-4zM13 13h2v1h-2zM5 14h2v1h-2zM14 14h2v1h-2zM5 15h2v1h-2zM15 15h2v1h-2z" fill="#fff"/><path d="M4 1h2v1h-2zM4 2h2v1h-2zM16 2h1v1h-1zM4 3h2v1h-2zM15 3h2v1h-2zM4 4h2v1h-2zM14 4h2v1h-2zM4 5h2v1h-2zM13 5h2v1h-2zM4 6h4v1h-4zM12 6h2v1h-2zM4 7h2v1h-2zM7 7h2v1h-2zM11 7h2v1h-2zM4 8h2v1h-2zM8 8h4v1h-4zM4 9h15v1h-15zM4 10h2v1h-2zM8 10h4v1h-4zM4 11h2v1h-2zM7 11h2v1h-2zM11 11h2v1h-2zM4 12h4v1h-4zM12 12h2v1h-2zM4 13h2v1h-2zM13 13h2v1h-2zM4 14h2v1h-2zM14 14h2v1h-2z" fill="#808080"/></svg>
<div style="left:592px;top:69px;width:327px;height:1px;background:#fff;"></div>
<div style="left:592px;top:69px;width:1px;height:29px;background:#fff;"></div>
<div style="left:592px;top:98px;width:327px;height:1px;background:#808080;"></div>
<div style="left:918px;top:69px;width:1px;height:29px;background:#808080;"></div>
<div style="left:596px;top:71px;width:3px;height:26px;box-shadow:inset -1px -1px #808080,inset 2px 1px #fff;"></div>
<div style="left:600px;top:71px;width:3px;height:26px;box-shadow:inset -1px -1px #808080,inset 2px 1px #fff;"></div>
<svg style="left:606px;top:75px" width="20" height="17"><path d="M4 2h12v1h-12zM4 3h1v1h-1zM12 3h6v1h-6zM4 4h1v1h-1zM11 4h6v1h-6zM4 5h1v1h-1zM12 5h6v1h-6zM4 6h1v1h-1zM11 6h6v1h-6zM4 7h1v1h-1zM12 7h6v1h-6zM4 8h1v1h-1zM11 8h6v1h-6zM4 9h1v1h-1zM12 9h6v1h-6zM4 10h13v1h-13zM3 13h1v1h-1zM5 13h3v1h-3zM9 13h4v1h-4zM14 13h3v1h-3zM18 13h1v1h-1zM2 14h1v1h-1zM4 14h2v1h-2zM7 14h2v1h-2zM10 14h1v1h-1zM13 14h2v1h-2zM16 14h2v1h-2zM19 14h1v1h-1zM2 15h1v1h-1zM4 15h1v1h-1zM6 15h2v1h-2zM10 15h1v1h-1zM12 15h1v1h-1zM15 15h2v1h-2zM19 15h1v1h-1zM3 16h5v1h-5zM9 16h2v1h-2zM12 16h5v1h-5zM18 16h1v1h-1z" fill="#fff"/><path d="M3 1h12v1h-12zM3 2h1v1h-1zM11 2h6v1h-6zM3 3h1v1h-1zM10 3h6v1h-6zM3 4h1v1h-1zM11 4h6v1h-6zM3 5h1v1h-1zM10 5h6v1h-6zM3 6h1v1h-1zM11 6h6v1h-6zM3 7h1v1h-1zM10 7h6v1h-6zM3 8h1v1h-1zM11 8h6v1h-6zM3 9h13v1h-13zM2 12h1v1h-1zM4 12h3v1h-3zM8 12h4v1h-4zM13 12h3v1h-3zM17 12h1v1h-1zM1 13h1v1h-1zM3 13h2v1h-2zM6 13h2v1h-2zM9 13h1v1h-1zM12 13h2v1h-2zM15 13h2v1h-2zM18 13h1v1h-1zM1 14h1v1h-1zM3 14h1v1h-1zM5 14h2v1h-2zM9 14h1v1h-1zM11 14h1v1h-1zM14 14h2v1h-2zM18 14h1v1h-1zM2 15h5v1h-5zM8 15h2v1h-2zM11 15h5v1h-5zM17 15h1v1h-1z" fill="#808080"/></svg>
<div style="left:631px;top:72px;width:1px;height:23px;background:#808080;"></div>
<div style="left:632px;top:72px;width:1px;height:23px;background:#fff;"></div>
<svg style="left:637px;top:75px" width="20" height="17"><path d="M10 2h2v1h-2zM10 3h2v1h-2zM14 3h1v1h-1zM8 4h1v1h-1zM10 4h2v1h-2zM13 4h1v1h-1zM15 4h1v1h-1zM6 5h2v1h-2zM10 5h2v1h-2zM16 5h2v1h-2zM5 6h1v1h-1zM8 6h6v1h-6zM18 6h1v1h-1zM4 7h1v1h-1zM9 7h4v1h-4zM19 7h1v1h-1zM3 8h3v1h-3zM10 8h2v1h-2zM18 8h2v1h-2zM3 9h1v1h-1zM6 9h3v1h-3zM16 9h2v1h-2zM19 9h1v1h-1zM3 10h2v1h-2zM9 10h3v1h-3zM14 10h2v1h-2zM18 10h1v1h-1zM4 11h3v1h-3zM12 11h2v1h-2zM16 11h2v1h-2zM3 12h1v1h-1zM7 12h3v1h-3zM14 12h2v1h-2zM3 13h3v1h-3zM10 13h4v1h-4zM5 14h3v1h-3zM8 15h2v1h-2z" fill="#fff"/><path d="M9 1h2v1h-2zM9 2h2v1h-2zM13 2h1v1h-1zM7 3h1v1h-1zM9 3h2v1h-2zM12 3h1v1h-1zM14 3h1v1h-1zM5 4h2v1h-2zM9 4h2v1h-2zM15 4h2v1h-2zM4 5h1v1h-1zM7 5h6v1h-6zM17 5h1v1h-1zM3 6h1v1h-1zM8 6h4v1h-4zM18 6h1v1h-1zM2 7h3v1h-3zM9 7h2v1h-2zM17 7h2v1h-2zM2 8h1v1h-1zM5 8h3v1h-3zM15 8h2v1h-2zM18 8h1v1h-1zM2 9h2v1h-2zM8 9h3v1h-3zM13 9h2v1h-2zM17 9h1v1h-1zM3 10h3v1h-3zM11 10h2v1h-2zM15 10h2v1h-2zM2 11h1v1h-1zM6 11h3v1h-3zM13 11h2v1h-2zM2 12h3v1h-3zM9 12h4v1h-4zM4 13h3v1h-3zM7 14h2v1h-2z" fill="#808080"/></svg>
<svg style="left:660px;top:75px" width="20" height="17"><path d="M4 3h1v1h-1zM6 3h1v1h-1zM8 3h1v1h-1zM10 3h1v1h-1zM12 3h1v1h-1zM14 3h1v1h-1zM16 3h1v1h-1zM5 4h1v1h-1zM7 4h1v1h-1zM9 4h1v1h-1zM11 4h1v1h-1zM13 4h1v1h-1zM15 4h1v1h-1zM17 4h1v1h-1zM4 5h1v1h-1zM6 5h1v1h-1zM8 5h1v1h-1zM10 5h1v1h-1zM12 5h1v1h-1zM14 5h1v1h-1zM16 5h1v1h-1zM7 6h1v1h-1zM14 6h1v1h-1zM3 7h1v1h-1zM7 7h1v1h-1zM14 7h1v1h-1zM18 7h1v1h-1zM3 8h1v1h-1zM7 8h1v1h-1zM14 8h1v1h-1zM18 8h1v1h-1zM3 9h1v1h-1zM5 9h5v1h-5zM12 9h5v1h-5zM18 9h1v1h-1zM3 10h1v1h-1zM6 10h3v1h-3zM13 10h3v1h-3zM18 10h1v1h-1zM3 11h1v1h-1zM7 11h1v1h-1zM14 11h1v1h-1zM18 11h1v1h-1zM3 12h1v1h-1zM5 12h1v1h-1zM7 12h1v1h-1zM9 12h1v1h-1zM11 12h1v1h-1zM13 12h1v1h-1zM15 12h1v1h-1zM17 12h2v1h-2zM3 13h1v1h-1zM18 13h1v1h-1zM3 14h1v1h-1zM5 14h1v1h-1zM7 14h1v1h-1zM9 14h1v1h-1zM11 14h1v1h-1zM13 14h1v1h-1zM15 14h1v1h-1zM17 14h2v1h-2zM3 15h1v1h-1zM18 15h1v1h-1zM3 16h16v1h-16z" fill="#fff"/><path d="M3 2h1v1h-1zM5 2h1v1h-1zM7 2h1v1h-1zM9 2h1v1h-1zM11 2h1v1h-1zM13 2h1v1h-1zM15 2h1v1h-1zM4 3h1v1h-1zM6 3h1v1h-1zM8 3h1v1h-1zM10 3h1v1h-1zM12 3h1v1h-1zM14 3h1v1h-1zM16 3h1v1h-1zM3 4h1v1h-1zM5 4h1v1h-1zM7 4h1v1h-1zM9 4h1v1h-1zM11 4h1v1h-1zM13 4h1v1h-1zM15 4h1v1h-1zM6 5h1v1h-1zM13 5h1v1h-1zM2 6h1v1h-1zM6 6h1v1h-1zM13 6h1v1h-1zM17 6h1v1h-1zM2 7h1v1h-1zM6 7h1v1h-1zM13 7h1v1h-1zM17 7h1v1h-1zM2 8h1v1h-1zM4 8h5v1h-5zM11 8h5v1h-5zM17 8h1v1h-1zM2 9h1v1h-1zM5 9h3v1h-3zM12 9h3v1h-3zM17 9h1v1h-1zM2 10h1v1h-1zM6 10h1v1h-1zM13 10h1v1h-1zM17 10h1v1h-1zM2 11h1v1h-1zM4 11h1v1h-1zM6 11h1v1h-1zM8 11h1v1h-1zM10 11h1v1h-1zM12 11h1v1h-1zM14 11h1v1h-1zM16 11h2v1h-2zM2 12h1v1h-1zM17 12h1v1h-1zM2 13h1v1h-1zM4 13h1v1h-1zM6 13h1v1h-1zM8 13h1v1h-1zM10 13h1v1h-1zM12 13h1v1h-1zM14 13h1v1h-1zM16 13h2v1h-2zM2 14h1v1h-1zM17 14h1v1h-1zM2 15h16v1h-16z" fill="#808080"/></svg>
<div style="left:685px;top:72px;width:1px;height:23px;background:#808080;"></div>
<div style="left:686px;top:72px;width:1px;height:23px;background:#fff;"></div>
<svg style="left:691px;top:75px" width="20" height="17"><path d="M3 2h4v1h-4zM2 3h6v1h-6zM2 4h6v1h-6zM2 5h15v1h-15zM1 6h8v1h-8zM16 6h1v1h-1zM1 7h8v1h-8zM10 7h5v1h-5zM16 7h1v1h-1zM8 8h1v1h-1zM13 8h1v1h-1zM16 8h1v1h-1zM8 9h1v1h-1zM12 9h1v1h-1zM16 9h1v1h-1zM8 10h1v1h-1zM11 10h1v1h-1zM16 10h1v1h-1zM8 11h1v1h-1zM10 11h5v1h-5zM16 11h1v1h-1zM8 12h1v1h-1zM16 12h1v1h-1zM8 13h1v1h-1zM10 13h5v1h-5zM16 13h1v1h-1zM8 14h1v1h-1zM16 14h1v1h-1zM8 15h9v1h-9z" fill="#fff"/><path d="M2 1h4v1h-4zM1 2h6v1h-6zM1 3h6v1h-6zM1 4h15v1h-15zM0 5h8v1h-8zM15 5h1v1h-1zM0 6h8v1h-8zM9 6h5v1h-5zM15 6h1v1h-1zM7 7h1v1h-1zM12 7h1v1h-1zM15 7h1v1h-1zM7 8h1v1h-1zM11 8h1v1h-1zM15 8h1v1h-1zM7 9h1v1h-1zM10 9h1v1h-1zM15 9h1v1h-1zM7 10h1v1h-1zM9 10h5v1h-5zM15 10h1v1h-1zM7 11h1v1h-1zM15 11h1v1h-1zM7 12h1v1h-1zM9 12h5v1h-5zM15 12h1v1h-1zM7 13h1v1h-1zM15 13h1v1h-1zM7 14h9v1h-9z" fill="#808080"/></svg>
<svg style="left:714px;top:75px" width="20" height="17"><path d="M3 2h4v1h-4zM2 3h6v1h-6zM2 4h6v1h-6zM2 5h15v1h-15zM1 6h8v1h-8zM16 6h1v1h-1zM1 7h8v1h-8zM10 7h1v1h-1zM14 7h1v1h-1zM16 7h1v1h-1zM8 8h1v1h-1zM11 8h1v1h-1zM13 8h1v1h-1zM16 8h1v1h-1zM8 9h1v1h-1zM12 9h1v1h-1zM16 9h1v1h-1zM8 10h1v1h-1zM11 10h1v1h-1zM13 10h1v1h-1zM16 10h1v1h-1zM8 11h1v1h-1zM10 11h1v1h-1zM14 11h1v1h-1zM16 11h1v1h-1zM8 12h1v1h-1zM10 12h1v1h-1zM14 12h1v1h-1zM16 12h1v1h-1zM8 13h1v1h-1zM16 13h1v1h-1zM8 14h1v1h-1zM16 14h1v1h-1zM8 15h9v1h-9z" fill="#fff"/><path d="M2 1h4v1h-4zM1 2h6v1h-6zM1 3h6v1h-6zM1 4h15v1h-15zM0 5h8v1h-8zM15 5h1v1h-1zM0 6h8v1h-8zM9 6h1v1h-1zM13 6h1v1h-1zM15 6h1v1h-1zM7 7h1v1h-1zM10 7h1v1h-1zM12 7h1v1h-1zM15 7h1v1h-1zM7 8h1v1h-1zM11 8h1v1h-1zM15 8h1v1h-1zM7 9h1v1h-1zM10 9h1v1h-1zM12 9h1v1h-1zM15 9h1v1h-1zM7 10h1v1h-1zM9 10h1v1h-1zM13 10h1v1h-1zM15 10h1v1h-1zM7 11h1v1h-1zM9 11h1v1h-1zM13 11h1v1h-1zM15 11h1v1h-1zM7 12h1v1h-1zM15 12h1v1h-1zM7 13h1v1h-1zM15 13h1v1h-1zM7 14h9v1h-9z" fill="#808080"/></svg>
<svg style="left:737px;top:75px" width="20" height="17"><path d="M3 2h4v1h-4zM2 3h6v1h-6zM2 4h6v1h-6zM2 5h15v1h-15zM1 6h8v1h-8zM16 6h1v1h-1zM1 7h8v1h-8zM14 7h1v1h-1zM16 7h1v1h-1zM8 8h1v1h-1zM14 8h1v1h-1zM16 8h1v1h-1zM5 9h1v1h-1zM8 9h1v1h-1zM13 9h1v1h-1zM16 9h1v1h-1zM5 10h1v1h-1zM8 10h1v1h-1zM10 10h1v1h-1zM13 10h1v1h-1zM16 10h1v1h-1zM5 11h1v1h-1zM8 11h1v1h-1zM11 11h2v1h-2zM16 11h1v1h-1zM3 12h6v1h-6zM11 12h1v1h-1zM16 12h1v1h-1zM4 13h3v1h-3zM8 13h1v1h-1zM16 13h1v1h-1zM5 14h1v1h-1zM8 14h1v1h-1zM16 14h1v1h-1zM8 15h9v1h-9z" fill="#fff"/><path d="M2 1h4v1h-4zM1 2h6v1h-6zM1 3h6v1h-6zM1 4h15v1h-15zM0 5h8v1h-8zM15 5h1v1h-1zM0 6h8v1h-8zM13 6h1v1h-1zM15 6h1v1h-1zM7 7h1v1h-1zM13 7h1v1h-1zM15 7h1v1h-1zM4 8h1v1h-1zM7 8h1v1h-1zM12 8h1v1h-1zM15 8h1v1h-1zM4 9h1v1h-1zM7 9h1v1h-1zM9 9h1v1h-1zM12 9h1v1h-1zM15 9h1v1h-1zM4 10h1v1h-1zM7 10h1v1h-1zM10 10h2v1h-2zM15 10h1v1h-1zM2 11h6v1h-6zM10 11h1v1h-1zM15 11h1v1h-1zM3 12h3v1h-3zM7 12h1v1h-1zM15 12h1v1h-1zM4 13h1v1h-1zM7 13h1v1h-1zM15 13h1v1h-1zM7 14h9v1h-9z" fill="#808080"/></svg>
<svg style="left:760px;top:75px" width="20" height="17"><path d="M3 2h4v1h-4zM2 3h6v1h-6zM2 4h6v1h-6zM2 5h15v1h-15zM1 6h8v1h-8zM16 6h1v1h-1zM1 7h8v1h-8zM16 7h1v1h-1zM8 8h1v1h-1zM16 8h1v1h-1zM5 9h1v1h-1zM8 9h1v1h-1zM16 9h1v1h-1zM6 10h1v1h-1zM8 10h1v1h-1zM11 10h3v1h-3zM16 10h1v1h-1zM2 11h7v1h-7zM11 11h3v1h-3zM16 11h1v1h-1zM6 12h1v1h-1zM8 12h1v1h-1zM16 12h1v1h-1zM5 13h1v1h-1zM8 13h1v1h-1zM16 13h1v1h-1zM8 14h1v1h-1zM16 14h1v1h-1zM8 15h9v1h-9z" fill="#fff"/><path d="M2 1h4v1h-4zM1 2h6v1h-6zM1 3h6v1h-6zM1 4h15v1h-15zM0 5h8v1h-8zM15 5h1v1h-1zM0 6h8v1h-8zM15 6h1v1h-1zM7 7h1v1h-1zM15 7h1v1h-1zM4 8h1v1h-1zM7 8h1v1h-1zM15 8h1v1h-1zM5 9h1v1h-1zM7 9h1v1h-1zM10 9h3v1h-3zM15 9h1v1h-1zM1 10h7v1h-7zM10 10h3v1h-3zM15 10h1v1h-1zM5 11h1v1h-1zM7 11h1v1h-1zM15 11h1v1h-1zM4 12h1v1h-1zM7 12h1v1h-1zM15 12h1v1h-1zM7 13h1v1h-1zM15 13h1v1h-1zM7 14h9v1h-9z" fill="#808080"/></svg>
<div style="left:785px;top:72px;width:1px;height:23px;background:#808080;"></div>
<div style="left:786px;top:72px;width:1px;height:23px;background:#fff;"></div>
<svg style="left:791px;top:75px" width="20" height="17"><path d="M2 2h4v1h-4zM2 3h7v1h-7zM11 3h1v1h-1zM13 3h5v1h-5zM2 4h3v1h-3zM6 4h3v1h-3zM11 4h1v1h-1zM13 4h5v1h-5zM2 5h7v1h-7zM11 5h1v1h-1zM13 5h5v1h-5zM3 6h6v1h-6zM11 6h1v1h-1zM13 6h5v1h-5zM3 7h3v1h-3zM7 7h2v1h-2zM11 7h1v1h-1zM3 8h6v1h-6zM11 8h1v1h-1zM13 8h5v1h-5zM3 9h6v1h-6zM11 9h1v1h-1zM13 9h5v1h-5zM3 10h3v1h-3zM7 10h2v1h-2zM11 10h1v1h-1zM13 10h5v1h-5zM3 11h6v1h-6zM11 11h1v1h-1zM13 11h5v1h-5zM3 12h6v1h-6zM11 12h1v1h-1zM3 13h3v1h-3zM7 13h2v1h-2zM11 13h1v1h-1zM13 13h5v1h-5zM3 14h6v1h-6zM11 14h1v1h-1zM13 14h5v1h-5zM2 15h7v1h-7zM11 15h1v1h-1zM13 15h5v1h-5zM2 16h4v1h-4zM11 16h1v1h-1zM13 16h5v1h-5z" fill="#fff"/><path d="M1 1h4v1h-4zM1 2h7v1h-7zM10 2h1v1h-1zM12 2h5v1h-5zM1 3h3v1h-3zM5 3h3v1h-3zM10 3h1v1h-1zM12 3h5v1h-5zM1 4h7v1h-7zM10 4h1v1h-1zM12 4h5v1h-5zM2 5h6v1h-6zM10 5h1v1h-1zM12 5h5v1h-5zM2 6h3v1h-3zM6 6h2v1h-2zM10 6h1v1h-1zM2 7h6v1h-6zM10 7h1v1h-1zM12 7h5v1h-5zM2 8h6v1h-6zM10 8h1v1h-1zM12 8h5v1h-5zM2 9h3v1h-3zM6 9h2v1h-2zM10 9h1v1h-1zM12 9h5v1h-5zM2 10h6v1h-6zM10 10h1v1h-1zM12 10h5v1h-5zM2 11h6v1h-6zM10 11h1v1h-1zM2 12h3v1h-3zM6 12h2v1h-2zM10 12h1v1h-1zM12 12h5v1h-5zM2 13h6v1h-6zM10 13h1v1h-1zM12 13h5v1h-5zM1 14h7v1h-7zM10 14h1v1h-1zM12 14h5v1h-5zM1 15h4v1h-4zM10 15h1v1h-1zM12 15h5v1h-5z" fill="#808080"/></svg>
<div style="left:816px;top:72px;width:1px;height:23px;background:#808080;"></div>
<div style="left:817px;top:72px;width:1px;height:23px;background:#fff;"></div>
<svg style="left:822px;top:75px" width="20" height="17"><path d="M2 2h16v1h-16zM2 3h16v1h-16zM2 4h16v1h-16zM2 5h16v1h-16zM2 6h16v1h-16zM2 7h16v1h-16zM2 8h16v1h-16zM2 9h16v1h-16zM2 10h16v1h-16zM3 12h1v1h-1zM5 12h3v1h-3zM9 12h4v1h-4zM14 12h3v1h-3zM18 12h1v1h-1zM2 13h1v1h-1zM4 13h2v1h-2zM7 13h2v1h-2zM10 13h1v1h-1zM13 13h2v1h-2zM16 13h2v1h-2zM19 13h1v1h-1zM2 14h1v1h-1zM4 14h1v1h-1zM6 14h2v1h-2zM10 14h1v1h-1zM12 14h1v1h-1zM15 14h2v1h-2zM19 14h1v1h-1zM3 15h5v1h-5zM9 15h2v1h-2zM12 15h5v1h-5zM18 15h1v1h-1z" fill="#fff"/><path d="M1 1h16v1h-16zM1 2h16v1h-16zM1 3h16v1h-16zM1 4h16v1h-16zM1 5h16v1h-16zM1 6h16v1h-16zM1 7h16v1h-16zM1 8h16v1h-16zM1 9h16v1h-16zM2 11h1v1h-1zM4 11h3v1h-3zM8 11h4v1h-4zM13 11h3v1h-3zM17 11h1v1h-1zM1 12h1v1h-1zM3 12h2v1h-2zM6 12h2v1h-2zM9 12h1v1h-1zM12 12h2v1h-2zM15 12h2v1h-2zM18 12h1v1h-1zM1 13h1v1h-1zM3 13h1v1h-1zM5 13h2v1h-2zM9 13h1v1h-1zM11 13h1v1h-1zM14 13h2v1h-2zM18 13h1v1h-1zM2 14h5v1h-5zM8 14h2v1h-2zM11 14h5v1h-5zM17 14h1v1h-1z" fill="#808080"/></svg>
<svg style="left:845px;top:75px" width="20" height="17"><path d="M2 2h16v1h-16zM2 3h5v1h-5zM2 4h15v1h-15zM2 5h6v1h-6zM16 5h1v1h-1zM2 6h6v1h-6zM9 6h5v1h-5zM16 6h1v1h-1zM2 7h6v1h-6zM12 7h1v1h-1zM16 7h1v1h-1zM2 8h6v1h-6zM11 8h1v1h-1zM16 8h1v1h-1zM2 9h6v1h-6zM10 9h1v1h-1zM16 9h1v1h-1zM2 10h6v1h-6zM9 10h5v1h-5zM16 10h1v1h-1zM2 11h6v1h-6zM16 11h1v1h-1zM2 12h6v1h-6zM9 12h5v1h-5zM16 12h1v1h-1zM2 13h6v1h-6zM16 13h1v1h-1zM2 14h6v1h-6zM16 14h1v1h-1zM2 15h15v1h-15zM2 16h3v1h-3z" fill="#fff"/><path d="M1 1h16v1h-16zM1 2h5v1h-5zM1 3h15v1h-15zM1 4h6v1h-6zM15 4h1v1h-1zM1 5h6v1h-6zM8 5h5v1h-5zM15 5h1v1h-1zM1 6h6v1h-6zM11 6h1v1h-1zM15 6h1v1h-1zM1 7h6v1h-6zM10 7h1v1h-1zM15 7h1v1h-1zM1 8h6v1h-6zM9 8h1v1h-1zM15 8h1v1h-1zM1 9h6v1h-6zM8 9h5v1h-5zM15 9h1v1h-1zM1 10h6v1h-6zM15 10h1v1h-1zM1 11h6v1h-6zM8 11h5v1h-5zM15 11h1v1h-1zM1 12h6v1h-6zM15 12h1v1h-1zM1 13h6v1h-6zM15 13h1v1h-1zM1 14h15v1h-15zM1 15h3v1h-3z" fill="#808080"/></svg>
<svg style="left:868px;top:75px" width="20" height="17"><path d="M2 2h16v1h-16zM2 3h5v1h-5zM2 4h15v1h-15zM2 5h6v1h-6zM16 5h1v1h-1zM2 6h6v1h-6zM9 6h1v1h-1zM13 6h1v1h-1zM16 6h1v1h-1zM2 7h6v1h-6zM10 7h1v1h-1zM12 7h1v1h-1zM16 7h1v1h-1zM2 8h6v1h-6zM11 8h1v1h-1zM16 8h1v1h-1zM2 9h6v1h-6zM10 9h1v1h-1zM12 9h1v1h-1zM16 9h1v1h-1zM2 10h6v1h-6zM9 10h1v1h-1zM13 10h1v1h-1zM16 10h1v1h-1zM2 11h6v1h-6zM9 11h1v1h-1zM13 11h1v1h-1zM16 11h1v1h-1zM2 12h6v1h-6zM16 12h1v1h-1zM2 13h6v1h-6zM16 13h1v1h-1zM2 14h6v1h-6zM16 14h1v1h-1zM2 15h15v1h-15zM2 16h3v1h-3z" fill="#fff"/><path d="M1 1h16v1h-16zM1 2h5v1h-5zM1 3h15v1h-15zM1 4h6v1h-6zM15 4h1v1h-1zM1 5h6v1h-6zM8 5h1v1h-1zM12 5h1v1h-1zM15 5h1v1h-1zM1 6h6v1h-6zM9 6h1v1h-1zM11 6h1v1h-1zM15 6h1v1h-1zM1 7h6v1h-6zM10 7h1v1h-1zM15 7h1v1h-1zM1 8h6v1h-6zM9 8h1v1h-1zM11 8h1v1h-1zM15 8h1v1h-1zM1 9h6v1h-6zM8 9h1v1h-1zM12 9h1v1h-1zM15 9h1v1h-1zM1 10h6v1h-6zM8 10h1v1h-1zM12 10h1v1h-1zM15 10h1v1h-1zM1 11h6v1h-6zM15 11h1v1h-1zM1 12h6v1h-6zM15 12h1v1h-1zM1 13h6v1h-6zM15 13h1v1h-1zM1 14h15v1h-15zM1 15h3v1h-3z" fill="#808080"/></svg>
<svg style="left:891px;top:75px" width="20" height="17"><path d="M2 2h16v1h-16zM2 3h5v1h-5zM2 4h15v1h-15zM2 5h6v1h-6zM16 5h1v1h-1zM2 6h6v1h-6zM13 6h1v1h-1zM16 6h1v1h-1zM2 7h6v1h-6zM13 7h1v1h-1zM16 7h1v1h-1zM2 8h6v1h-6zM12 8h1v1h-1zM16 8h1v1h-1zM2 9h6v1h-6zM9 9h1v1h-1zM11 9h1v1h-1zM16 9h1v1h-1zM2 10h6v1h-6zM10 10h2v1h-2zM16 10h1v1h-1zM2 11h6v1h-6zM11 11h1v1h-1zM16 11h1v1h-1zM2 12h6v1h-6zM16 12h1v1h-1zM2 13h6v1h-6zM16 13h1v1h-1zM2 14h6v1h-6zM16 14h1v1h-1zM2 15h15v1h-15zM2 16h3v1h-3z" fill="#fff"/><path d="M1 1h16v1h-16zM1 2h5v1h-5zM1 3h15v1h-15zM1 4h6v1h-6zM15 4h1v1h-1zM1 5h6v1h-6zM12 5h1v1h-1zM15 5h1v1h-1zM1 6h6v1h-6zM12 6h1v1h-1zM15 6h1v1h-1zM1 7h6v1h-6zM11 7h1v1h-1zM15 7h1v1h-1zM1 8h6v1h-6zM8 8h1v1h-1zM10 8h1v1h-1zM15 8h1v1h-1zM1 9h6v1h-6zM9 9h2v1h-2zM15 9h1v1h-1zM1 10h6v1h-6zM10 10h1v1h-1zM15 10h1v1h-1zM1 11h6v1h-6zM15 11h1v1h-1zM1 12h6v1h-6zM15 12h1v1h-1zM1 13h6v1h-6zM15 13h1v1h-1zM1 14h15v1h-15zM1 15h3v1h-3z" fill="#808080"/></svg>
<div style="left:1px;top:99px;width:434px;height:1px;background:#fff;"></div>
<div style="left:1px;top:99px;width:1px;height:29px;background:#fff;"></div>
<div style="left:1px;top:128px;width:434px;height:1px;background:#808080;"></div>
<div style="left:434px;top:99px;width:1px;height:29px;background:#808080;"></div>
<div style="left:5px;top:101px;width:3px;height:26px;box-shadow:inset -1px -1px #808080,inset 2px 1px #fff;"></div>
<div style="left:9px;top:101px;width:3px;height:26px;box-shadow:inset -1px -1px #808080,inset 2px 1px #fff;"></div>
<svg style="left:14px;top:105px" width="20" height="17"><path d="M3 3h14v1h-14zM3 4h14v1h-14zM3 5h1v1h-1zM5 5h1v1h-1zM16 5h1v1h-1zM3 6h1v1h-1zM5 6h1v1h-1zM16 6h1v1h-1zM3 7h1v1h-1zM5 7h1v1h-1zM16 7h1v1h-1zM3 8h1v1h-1zM5 8h1v1h-1zM8 8h12v1h-12zM3 9h1v1h-1zM5 9h1v1h-1zM8 9h1v1h-1zM10 9h1v1h-1zM12 9h1v1h-1zM14 9h1v1h-1zM16 9h1v1h-1zM18 9h2v1h-2zM3 10h1v1h-1zM5 10h1v1h-1zM8 10h2v1h-2zM11 10h1v1h-1zM13 10h1v1h-1zM15 10h1v1h-1zM17 10h1v1h-1zM19 10h1v1h-1zM3 11h1v1h-1zM5 11h1v1h-1zM8 11h1v1h-1zM10 11h1v1h-1zM12 11h1v1h-1zM14 11h1v1h-1zM16 11h1v1h-1zM18 11h2v1h-2zM3 12h1v1h-1zM5 12h1v1h-1zM8 12h2v1h-2zM11 12h1v1h-1zM13 12h1v1h-1zM15 12h1v1h-1zM17 12h1v1h-1zM19 12h1v1h-1zM3 13h1v1h-1zM5 13h1v1h-1zM8 13h1v1h-1zM10 13h1v1h-1zM12 13h1v1h-1zM14 13h1v1h-1zM16 13h1v1h-1zM18 13h2v1h-2zM3 14h4v1h-4zM8 14h2v1h-2zM11 14h1v1h-1zM13 14h1v1h-1zM15 14h1v1h-1zM17 14h1v1h-1zM19 14h1v1h-1zM8 15h12v1h-12zM8 16h12v1h-12z" fill="#fff"/><path d="M2 2h14v1h-14zM2 3h14v1h-14zM2 4h1v1h-1zM4 4h1v1h-1zM15 4h1v1h-1zM2 5h1v1h-1zM4 5h1v1h-1zM15 5h1v1h-1zM2 6h1v1h-1zM4 6h1v1h-1zM15 6h1v1h-1zM2 7h1v1h-1zM4 7h1v1h-1zM7 7h12v1h-12zM2 8h1v1h-1zM4 8h1v1h-1zM7 8h1v1h-1zM9 8h1v1h-1zM11 8h1v1h-1zM13 8h1v1h-1zM15 8h1v1h-1zM17 8h2v1h-2zM2 9h1v1h-1zM4 9h1v1h-1zM7 9h2v1h-2zM10 9h1v1h-1zM12 9h1v1h-1zM14 9h1v1h-1zM16 9h1v1h-1zM18 9h1v1h-1zM2 10h1v1h-1zM4 10h1v1h-1zM7 10h1v1h-1zM9 10h1v1h-1zM11 10h1v1h-1zM13 10h1v1h-1zM15 10h1v1h-1zM17 10h2v1h-2zM2 11h1v1h-1zM4 11h1v1h-1zM7 11h2v1h-2zM10 11h1v1h-1zM12 11h1v1h-1zM14 11h1v1h-1zM16 11h1v1h-1zM18 11h1v1h-1zM2 12h1v1h-1zM4 12h1v1h-1zM7 12h1v1h-1zM9 12h1v1h-1zM11 12h1v1h-1zM13 12h1v1h-1zM15 12h1v1h-1zM17 12h2v1h-2zM2 13h4v1h-4zM7 13h2v1h-2zM10 13h1v1h-1zM12 13h1v1h-1zM14 13h1v1h-1zM16 13h1v1h-1zM18 13h1v1h-1zM7 14h12v1h-12zM7 15h12v1h-12z" fill="#808080"/></svg>
<svg style="left:37px;top:105px" width="20" height="17"><path d="M4 1h14v1h-14zM4 2h14v1h-14z" fill="#000080"/><path d="M8 6h2v1h-2zM9 7h4v1h-4zM10 8h4v1h-4zM11 9h4v1h-4zM12 10h2v1h-2z" fill="#98a838"/><path d="M4 3h1v1h-1zM17 3h1v1h-1zM4 4h1v1h-1zM17 4h1v1h-1zM4 5h1v1h-1zM6 5h5v1h-5zM17 5h1v1h-1zM4 6h1v1h-1zM7 6h1v1h-1zM10 6h3v1h-3zM17 6h1v1h-1zM4 7h1v1h-1zM8 7h1v1h-1zM13 7h1v1h-1zM17 7h1v1h-1zM4 8h1v1h-1zM8 8h2v1h-2zM14 8h1v1h-1zM17 8h1v1h-1zM4 9h1v1h-1zM7 9h4v1h-4zM15 9h1v1h-1zM17 9h1v1h-1zM4 10h1v1h-1zM6 10h3v1h-3zM11 10h1v1h-1zM14 10h1v1h-1zM17 10h1v1h-1zM4 11h4v1h-4zM12 11h2v1h-2zM17 11h1v1h-1zM4 12h14v1h-14zM3 13h3v1h-3zM2 14h3v1h-3zM1 15h3v1h-3z" fill="#000000"/><path d="M5 3h12v1h-12zM5 4h12v1h-12zM5 5h1v1h-1zM11 5h6v1h-6zM5 6h2v1h-2zM13 6h4v1h-4zM5 7h3v1h-3zM14 7h3v1h-3zM5 8h3v1h-3zM15 8h2v1h-2zM5 9h2v1h-2zM16 9h1v1h-1zM5 10h1v1h-1zM9 10h2v1h-2zM15 10h2v1h-2zM8 11h4v1h-4zM14 11h3v1h-3z" fill="#ffffff"/></svg>
<svg style="left:60px;top:105px" width="20" height="17"><path d="M3 2h15v1h-15zM3 3h15v1h-15zM3 4h1v1h-1zM17 4h1v1h-1zM3 5h1v1h-1zM7 5h3v1h-3zM12 5h1v1h-1zM17 5h1v1h-1zM3 6h1v1h-1zM6 6h1v1h-1zM9 6h2v1h-2zM12 6h1v1h-1zM14 6h2v1h-2zM17 6h1v1h-1zM3 7h1v1h-1zM6 7h2v1h-2zM10 7h2v1h-2zM13 7h1v1h-1zM16 7h2v1h-2zM3 8h1v1h-1zM6 8h1v1h-1zM8 8h1v1h-1zM11 8h1v1h-1zM14 8h2v1h-2zM17 8h1v1h-1zM3 9h1v1h-1zM5 9h1v1h-1zM8 9h1v1h-1zM10 9h1v1h-1zM13 9h1v1h-1zM15 9h1v1h-1zM17 9h1v1h-1zM3 10h2v1h-2zM7 10h1v1h-1zM9 10h1v1h-1zM12 10h1v1h-1zM17 10h1v1h-1zM3 11h1v1h-1zM6 11h1v1h-1zM8 11h4v1h-4zM17 11h1v1h-1zM3 12h3v1h-3zM7 12h1v1h-1zM10 12h8v1h-8zM3 13h2v1h-2zM6 13h4v1h-4zM12 13h1v1h-1zM2 14h3v1h-3zM6 14h2v1h-2zM9 14h2v1h-2zM2 15h2v1h-2zM7 15h2v1h-2z" fill="#fff"/><path d="M2 1h15v1h-15zM2 2h15v1h-15zM2 3h1v1h-1zM16 3h1v1h-1zM2 4h1v1h-1zM6 4h3v1h-3zM11 4h1v1h-1zM16 4h1v1h-1zM2 5h1v1h-1zM5 5h1v1h-1zM8 5h2v1h-2zM11 5h1v1h-1zM13 5h2v1h-2zM16 5h1v1h-1zM2 6h1v1h-1zM5 6h2v1h-2zM9 6h2v1h-2zM12 6h1v1h-1zM15 6h2v1h-2zM2 7h1v1h-1zM5 7h1v1h-1zM7 7h1v1h-1zM10 7h1v1h-1zM13 7h2v1h-2zM16 7h1v1h-1zM2 8h1v1h-1zM4 8h1v1h-1zM7 8h1v1h-1zM9 8h1v1h-1zM12 8h1v1h-1zM14 8h1v1h-1zM16 8h1v1h-1zM2 9h2v1h-2zM6 9h1v1h-1zM8 9h1v1h-1zM11 9h1v1h-1zM16 9h1v1h-1zM2 10h1v1h-1zM5 10h1v1h-1zM7 10h4v1h-4zM16 10h1v1h-1zM2 11h3v1h-3zM6 11h1v1h-1zM9 11h8v1h-8zM2 12h2v1h-2zM5 12h4v1h-4zM11 12h1v1h-1zM1 13h3v1h-3zM5 13h2v1h-2zM8 13h2v1h-2zM1 14h2v1h-2zM6 14h2v1h-2z" fill="#808080"/></svg>
<svg style="left:83px;top:105px" width="20" height="17"><path d="M3 2h15v1h-15zM3 3h15v1h-15zM3 4h1v1h-1zM17 4h1v1h-1zM3 5h1v1h-1zM13 5h1v1h-1zM15 5h1v1h-1zM17 5h1v1h-1zM3 6h1v1h-1zM6 6h1v1h-1zM12 6h1v1h-1zM15 6h1v1h-1zM17 6h1v1h-1zM3 7h1v1h-1zM6 7h2v1h-2zM11 7h1v1h-1zM14 7h2v1h-2zM17 7h1v1h-1zM3 8h1v1h-1zM6 8h1v1h-1zM8 8h1v1h-1zM10 8h1v1h-1zM13 8h1v1h-1zM15 8h1v1h-1zM17 8h1v1h-1zM3 9h5v1h-5zM13 9h5v1h-5zM3 10h5v1h-5zM13 10h5v1h-5zM2 11h7v1h-7zM12 11h7v1h-7zM2 12h2v1h-2zM7 12h2v1h-2zM12 12h2v1h-2zM17 12h2v1h-2zM2 13h1v1h-1zM7 13h1v1h-1zM12 13h1v1h-1zM17 13h1v1h-1zM2 14h2v1h-2zM7 14h2v1h-2zM12 14h2v1h-2zM17 14h2v1h-2zM2 15h7v1h-7zM12 15h7v1h-7z" fill="#fff"/><path d="M2 1h15v1h-15zM2 2h15v1h-15zM2 3h1v1h-1zM16 3h1v1h-1zM2 4h1v1h-1zM12 4h1v1h-1zM14 4h1v1h-1zM16 4h1v1h-1zM2 5h1v1h-1zM5 5h1v1h-1zM11 5h1v1h-1zM14 5h1v1h-1zM16 5h1v1h-1zM2 6h1v1h-1zM5 6h2v1h-2zM10 6h1v1h-1zM13 6h2v1h-2zM16 6h1v1h-1zM2 7h1v1h-1zM5 7h1v1h-1zM7 7h1v1h-1zM9 7h1v1h-1zM12 7h1v1h-1zM14 7h1v1h-1zM16 7h1v1h-1zM2 8h5v1h-5zM12 8h5v1h-5zM2 9h5v1h-5zM12 9h5v1h-5zM1 10h7v1h-7zM11 10h7v1h-7zM1 11h2v1h-2zM6 11h2v1h-2zM11 11h2v1h-2zM16 11h2v1h-2zM1 12h1v1h-1zM6 12h1v1h-1zM11 12h1v1h-1zM16 12h1v1h-1zM1 13h2v1h-2zM6 13h2v1h-2zM11 13h2v1h-2zM16 13h2v1h-2zM1 14h7v1h-7zM11 14h7v1h-7z" fill="#808080"/></svg>
<svg style="left:106px;top:105px" width="20" height="17"><path d="M3 2h16v1h-16zM3 3h16v1h-16zM3 4h1v1h-1zM6 4h1v1h-1zM18 4h1v1h-1zM3 5h1v1h-1zM6 5h1v1h-1zM18 5h1v1h-1zM3 6h1v1h-1zM6 6h1v1h-1zM18 6h1v1h-1zM3 7h1v1h-1zM6 7h1v1h-1zM18 7h1v1h-1zM3 8h1v1h-1zM6 8h1v1h-1zM18 8h1v1h-1zM3 9h1v1h-1zM6 9h1v1h-1zM18 9h1v1h-1zM3 10h1v1h-1zM6 10h1v1h-1zM18 10h1v1h-1zM3 11h16v1h-16zM2 12h4v1h-4zM2 13h1v1h-1zM5 13h1v1h-1zM2 14h4v1h-4zM2 15h1v1h-1zM5 15h1v1h-1zM2 16h4v1h-4z" fill="#fff"/><path d="M2 1h16v1h-16zM2 2h16v1h-16zM2 3h1v1h-1zM5 3h1v1h-1zM17 3h1v1h-1zM2 4h1v1h-1zM5 4h1v1h-1zM17 4h1v1h-1zM2 5h1v1h-1zM5 5h1v1h-1zM17 5h1v1h-1zM2 6h1v1h-1zM5 6h1v1h-1zM17 6h1v1h-1zM2 7h1v1h-1zM5 7h1v1h-1zM17 7h1v1h-1zM2 8h1v1h-1zM5 8h1v1h-1zM17 8h1v1h-1zM2 9h1v1h-1zM5 9h1v1h-1zM17 9h1v1h-1zM2 10h16v1h-16zM1 11h4v1h-4zM1 12h1v1h-1zM4 12h1v1h-1zM1 13h4v1h-4zM1 14h1v1h-1zM4 14h1v1h-1zM1 15h4v1h-4z" fill="#808080"/></svg>
<svg style="left:129px;top:105px" width="20" height="17"><path d="M17 1h2v1h-2zM17 2h3v1h-3zM17 3h3v1h-3zM17 4h2v1h-2zM17 5h1v1h-1z" fill="#000080"/><path d="M14 1h3v1h-3zM7 2h1v1h-1zM9 2h1v1h-1zM13 2h1v1h-1zM6 3h1v1h-1zM8 3h1v1h-1zM10 3h1v1h-1zM12 3h1v1h-1zM5 4h1v1h-1zM7 4h1v1h-1zM9 4h1v1h-1zM11 4h1v1h-1zM13 4h1v1h-1zM4 5h1v1h-1zM6 5h1v1h-1zM8 5h1v1h-1zM10 5h1v1h-1zM12 5h1v1h-1zM14 5h1v1h-1zM2 6h14v1h-14zM2 7h1v1h-1zM15 7h1v1h-1zM2 8h1v1h-1zM15 8h1v1h-1zM2 9h1v1h-1zM4 9h3v1h-3zM8 9h6v1h-6zM15 9h1v1h-1zM2 10h1v1h-1zM15 10h1v1h-1zM2 11h1v1h-1zM4 11h3v1h-3zM8 11h6v1h-6zM15 11h1v1h-1zM2 12h1v1h-1zM15 12h1v1h-1zM2 13h1v1h-1zM15 13h1v1h-1zM2 14h14v1h-14z" fill="#000000"/><path d="M3 7h1v1h-1zM5 7h1v1h-1zM7 7h1v1h-1zM9 7h1v1h-1zM11 7h1v1h-1zM13 7h1v1h-1zM3 8h12v1h-12zM3 9h1v1h-1zM7 9h1v1h-1zM14 9h1v1h-1zM3 10h12v1h-12zM3 11h1v1h-1zM7 11h1v1h-1zM14 11h1v1h-1zM3 12h12v1h-12zM3 13h12v1h-12z" fill="#ffffff"/></svg>
<div style="left:155px;top:102px;width:1px;height:23px;background:#808080;"></div>
<div style="left:156px;top:102px;width:1px;height:23px;background:#fff;"></div>
<svg style="left:160px;top:105px" width="20" height="17"><path d="M5 3h1v1h-1zM8 3h1v1h-1zM14 3h1v1h-1zM17 3h1v1h-1zM6 4h2v1h-2zM11 4h1v1h-1zM15 4h2v1h-2zM8 5h1v1h-1zM10 5h1v1h-1zM12 5h1v1h-1zM15 5h1v1h-1zM9 6h1v1h-1zM8 7h1v1h-1zM10 7h1v1h-1zM2 8h6v1h-6zM11 8h6v1h-6zM2 9h1v1h-1zM7 9h2v1h-2zM11 9h1v1h-1zM16 9h2v1h-2zM2 10h1v1h-1zM7 10h1v1h-1zM9 10h1v1h-1zM11 10h1v1h-1zM16 10h1v1h-1zM18 10h1v1h-1zM2 11h1v1h-1zM7 11h3v1h-3zM11 11h1v1h-1zM16 11h3v1h-3zM2 12h1v1h-1zM9 12h1v1h-1zM11 12h1v1h-1zM18 12h1v1h-1zM2 13h1v1h-1zM9 13h1v1h-1zM11 13h1v1h-1zM18 13h1v1h-1zM2 14h1v1h-1zM9 14h1v1h-1zM11 14h1v1h-1zM18 14h1v1h-1zM2 15h1v1h-1zM9 15h1v1h-1zM11 15h1v1h-1zM18 15h1v1h-1zM2 16h8v1h-8zM11 16h8v1h-8z" fill="#fff"/><path d="M4 2h1v1h-1zM7 2h1v1h-1zM13 2h1v1h-1zM16 2h1v1h-1zM5 3h2v1h-2zM10 3h1v1h-1zM14 3h2v1h-2zM7 4h1v1h-1zM9 4h1v1h-1zM11 4h1v1h-1zM14 4h1v1h-1zM8 5h1v1h-1zM7 6h1v1h-1zM9 6h1v1h-1zM1 7h6v1h-6zM10 7h6v1h-6zM1 8h1v1h-1zM6 8h2v1h-2zM10 8h1v1h-1zM15 8h2v1h-2zM1 9h1v1h-1zM6 9h1v1h-1zM8 9h1v1h-1zM10 9h1v1h-1zM15 9h1v1h-1zM17 9h1v1h-1zM1 10h1v1h-1zM6 10h3v1h-3zM10 10h1v1h-1zM15 10h3v1h-3zM1 11h1v1h-1zM8 11h1v1h-1zM10 11h1v1h-1zM17 11h1v1h-1zM1 12h1v1h-1zM8 12h1v1h-1zM10 12h1v1h-1zM17 12h1v1h-1zM1 13h1v1h-1zM8 13h1v1h-1zM10 13h1v1h-1zM17 13h1v1h-1zM1 14h1v1h-1zM8 14h1v1h-1zM10 14h1v1h-1zM17 14h1v1h-1zM1 15h8v1h-8zM10 15h8v1h-8z" fill="#808080"/></svg>
<svg style="left:183px;top:105px" width="20" height="17"><path d="M5 2h12v1h-12zM4 3h2v1h-2zM7 3h1v1h-1zM9 3h1v1h-1zM11 3h1v1h-1zM13 3h1v1h-1zM15 3h3v1h-3zM3 4h2v1h-2zM6 4h1v1h-1zM8 4h1v1h-1zM10 4h1v1h-1zM12 4h1v1h-1zM14 4h1v1h-1zM16 4h2v1h-2zM4 5h2v1h-2zM7 5h1v1h-1zM9 5h1v1h-1zM11 5h1v1h-1zM13 5h1v1h-1zM15 5h3v1h-3zM5 6h12v1h-12zM12 7h2v1h-2zM5 8h10v1h-10zM4 9h1v1h-1zM14 9h2v1h-2zM4 10h1v1h-1zM7 10h7v1h-7zM15 10h1v1h-1zM4 11h1v1h-1zM6 11h1v1h-1zM14 11h1v1h-1zM3 12h2v1h-2zM6 12h1v1h-1zM9 12h2v1h-2zM13 12h2v1h-2zM3 13h1v1h-1zM6 13h1v1h-1zM9 13h1v1h-1zM13 13h1v1h-1zM2 14h2v1h-2zM6 14h2v1h-2zM9 14h2v1h-2zM13 14h2v1h-2zM2 15h1v1h-1zM7 15h1v1h-1zM10 15h1v1h-1zM14 15h1v1h-1z" fill="#fff"/><path d="M4 1h12v1h-12zM3 2h2v1h-2zM6 2h1v1h-1zM8 2h1v1h-1zM10 2h1v1h-1zM12 2h1v1h-1zM14 2h3v1h-3zM2 3h2v1h-2zM5 3h1v1h-1zM7 3h1v1h-1zM9 3h1v1h-1zM11 3h1v1h-1zM13 3h1v1h-1zM15 3h2v1h-2zM3 4h2v1h-2zM6 4h1v1h-1zM8 4h1v1h-1zM10 4h1v1h-1zM12 4h1v1h-1zM14 4h3v1h-3zM4 5h12v1h-12zM11 6h2v1h-2zM4 7h10v1h-10zM3 8h1v1h-1zM13 8h2v1h-2zM3 9h1v1h-1zM6 9h7v1h-7zM14 9h1v1h-1zM3 10h1v1h-1zM5 10h1v1h-1zM13 10h1v1h-1zM2 11h2v1h-2zM5 11h1v1h-1zM8 11h2v1h-2zM12 11h2v1h-2zM2 12h1v1h-1zM5 12h1v1h-1zM8 12h1v1h-1zM12 12h1v1h-1zM1 13h2v1h-2zM5 13h2v1h-2zM8 13h2v1h-2zM12 13h2v1h-2zM1 14h1v1h-1zM6 14h1v1h-1zM9 14h1v1h-1zM13 14h1v1h-1z" fill="#808080"/></svg>
<svg style="left:206px;top:105px" width="20" height="17"><path d="M3 2h15v1h-15zM3 3h1v1h-1zM5 3h3v1h-3zM17 3h1v1h-1zM3 4h1v1h-1zM5 4h1v1h-1zM7 4h1v1h-1zM17 4h1v1h-1zM3 5h1v1h-1zM5 5h1v1h-1zM7 5h1v1h-1zM10 5h5v1h-5zM17 5h1v1h-1zM3 6h1v1h-1zM5 6h1v1h-1zM7 6h1v1h-1zM10 6h1v1h-1zM14 6h1v1h-1zM17 6h1v1h-1zM3 7h1v1h-1zM5 7h1v1h-1zM7 7h1v1h-1zM10 7h1v1h-1zM12 7h3v1h-3zM17 7h1v1h-1zM3 8h1v1h-1zM5 8h1v1h-1zM7 8h1v1h-1zM10 8h1v1h-1zM12 8h1v1h-1zM17 8h1v1h-1zM3 9h1v1h-1zM5 9h1v1h-1zM7 9h1v1h-1zM10 9h1v1h-1zM12 9h1v1h-1zM16 9h2v1h-2zM3 10h1v1h-1zM5 10h1v1h-1zM7 10h1v1h-1zM10 10h1v1h-1zM12 10h1v1h-1zM15 10h1v1h-1zM17 10h1v1h-1zM3 11h1v1h-1zM5 11h1v1h-1zM7 11h1v1h-1zM10 11h3v1h-3zM14 11h1v1h-1zM17 11h1v1h-1zM3 12h1v1h-1zM5 12h1v1h-1zM7 12h1v1h-1zM13 12h1v1h-1zM17 12h1v1h-1zM3 13h1v1h-1zM5 13h1v1h-1zM7 13h1v1h-1zM12 13h1v1h-1zM15 13h2v1h-2zM3 14h1v1h-1zM5 14h1v1h-1zM8 14h1v1h-1zM11 14h1v1h-1zM14 14h1v1h-1zM3 15h11v1h-11z" fill="#fff"/><path d="M2 1h15v1h-15zM2 2h1v1h-1zM4 2h3v1h-3zM16 2h1v1h-1zM2 3h1v1h-1zM4 3h1v1h-1zM6 3h1v1h-1zM16 3h1v1h-1zM2 4h1v1h-1zM4 4h1v1h-1zM6 4h1v1h-1zM9 4h5v1h-5zM16 4h1v1h-1zM2 5h1v1h-1zM4 5h1v1h-1zM6 5h1v1h-1zM9 5h1v1h-1zM13 5h1v1h-1zM16 5h1v1h-1zM2 6h1v1h-1zM4 6h1v1h-1zM6 6h1v1h-1zM9 6h1v1h-1zM11 6h3v1h-3zM16 6h1v1h-1zM2 7h1v1h-1zM4 7h1v1h-1zM6 7h1v1h-1zM9 7h1v1h-1zM11 7h1v1h-1zM16 7h1v1h-1zM2 8h1v1h-1zM4 8h1v1h-1zM6 8h1v1h-1zM9 8h1v1h-1zM11 8h1v1h-1zM15 8h2v1h-2zM2 9h1v1h-1zM4 9h1v1h-1zM6 9h1v1h-1zM9 9h1v1h-1zM11 9h1v1h-1zM14 9h1v1h-1zM16 9h1v1h-1zM2 10h1v1h-1zM4 10h1v1h-1zM6 10h1v1h-1zM9 10h3v1h-3zM13 10h1v1h-1zM16 10h1v1h-1zM2 11h1v1h-1zM4 11h1v1h-1zM6 11h1v1h-1zM12 11h1v1h-1zM16 11h1v1h-1zM2 12h1v1h-1zM4 12h1v1h-1zM6 12h1v1h-1zM11 12h1v1h-1zM14 12h2v1h-2zM2 13h1v1h-1zM4 13h1v1h-1zM7 13h1v1h-1zM10 13h1v1h-1zM13 13h1v1h-1zM2 14h11v1h-11z" fill="#808080"/></svg>
<svg style="left:229px;top:105px" width="20" height="17"><path d="M4 2h14v1h-14zM4 3h1v1h-1zM6 3h3v1h-3zM10 3h3v1h-3zM14 3h4v1h-4zM4 4h1v1h-1zM17 4h1v1h-1zM4 5h1v1h-1zM17 5h1v1h-1zM4 6h1v1h-1zM7 6h8v1h-8zM17 6h1v1h-1zM4 7h1v1h-1zM7 7h1v1h-1zM14 7h1v1h-1zM17 7h1v1h-1zM4 8h1v1h-1zM7 8h8v1h-8zM17 8h1v1h-1zM4 9h1v1h-1zM17 9h1v1h-1zM4 10h1v1h-1zM17 10h1v1h-1zM4 11h1v1h-1zM6 11h1v1h-1zM8 11h6v1h-6zM15 11h1v1h-1zM17 11h1v1h-1zM4 12h1v1h-1zM17 12h1v1h-1zM4 13h1v1h-1zM6 13h1v1h-1zM8 13h6v1h-6zM15 13h1v1h-1zM17 13h1v1h-1zM4 14h1v1h-1zM17 14h1v1h-1zM4 15h14v1h-14z" fill="#fff"/><path d="M3 1h14v1h-14zM3 2h1v1h-1zM5 2h3v1h-3zM9 2h3v1h-3zM13 2h4v1h-4zM3 3h1v1h-1zM16 3h1v1h-1zM3 4h1v1h-1zM16 4h1v1h-1zM3 5h1v1h-1zM6 5h8v1h-8zM16 5h1v1h-1zM3 6h1v1h-1zM6 6h1v1h-1zM13 6h1v1h-1zM16 6h1v1h-1zM3 7h1v1h-1zM6 7h8v1h-8zM16 7h1v1h-1zM3 8h1v1h-1zM16 8h1v1h-1zM3 9h1v1h-1zM16 9h1v1h-1zM3 10h1v1h-1zM5 10h1v1h-1zM7 10h6v1h-6zM14 10h1v1h-1zM16 10h1v1h-1zM3 11h1v1h-1zM16 11h1v1h-1zM3 12h1v1h-1zM5 12h1v1h-1zM7 12h6v1h-6zM14 12h1v1h-1zM16 12h1v1h-1zM3 13h1v1h-1zM16 13h1v1h-1zM3 14h14v1h-14z" fill="#808080"/></svg>
<svg style="left:252px;top:105px" width="20" height="17"><path d="M4 2h14v1h-14zM4 3h1v1h-1zM6 3h3v1h-3zM10 3h3v1h-3zM14 3h4v1h-4zM4 4h1v1h-1zM17 4h1v1h-1zM4 5h1v1h-1zM7 5h2v1h-2zM10 5h2v1h-2zM14 5h1v1h-1zM17 5h1v1h-1zM4 6h1v1h-1zM6 6h1v1h-1zM8 6h2v1h-2zM11 6h2v1h-2zM14 6h1v1h-1zM17 6h1v1h-1zM4 7h1v1h-1zM6 7h1v1h-1zM8 7h2v1h-2zM11 7h2v1h-2zM14 7h1v1h-1zM17 7h1v1h-1zM4 8h1v1h-1zM7 8h2v1h-2zM10 8h2v1h-2zM14 8h1v1h-1zM17 8h1v1h-1zM4 9h1v1h-1zM17 9h1v1h-1zM4 10h1v1h-1zM7 10h2v1h-2zM10 10h2v1h-2zM14 10h2v1h-2zM17 10h1v1h-1zM4 11h1v1h-1zM6 11h1v1h-1zM8 11h2v1h-2zM11 11h2v1h-2zM16 11h2v1h-2zM4 12h1v1h-1zM6 12h1v1h-1zM8 12h2v1h-2zM11 12h2v1h-2zM15 12h1v1h-1zM17 12h1v1h-1zM4 13h1v1h-1zM7 13h2v1h-2zM10 13h2v1h-2zM14 13h4v1h-4zM4 14h1v1h-1zM17 14h1v1h-1zM4 15h14v1h-14z" fill="#fff"/><path d="M3 1h14v1h-14zM3 2h1v1h-1zM5 2h3v1h-3zM9 2h3v1h-3zM13 2h4v1h-4zM3 3h1v1h-1zM16 3h1v1h-1zM3 4h1v1h-1zM6 4h2v1h-2zM9 4h2v1h-2zM13 4h1v1h-1zM16 4h1v1h-1zM3 5h1v1h-1zM5 5h1v1h-1zM7 5h2v1h-2zM10 5h2v1h-2zM13 5h1v1h-1zM16 5h1v1h-1zM3 6h1v1h-1zM5 6h1v1h-1zM7 6h2v1h-2zM10 6h2v1h-2zM13 6h1v1h-1zM16 6h1v1h-1zM3 7h1v1h-1zM6 7h2v1h-2zM9 7h2v1h-2zM13 7h1v1h-1zM16 7h1v1h-1zM3 8h1v1h-1zM16 8h1v1h-1zM3 9h1v1h-1zM6 9h2v1h-2zM9 9h2v1h-2zM13 9h2v1h-2zM16 9h1v1h-1zM3 10h1v1h-1zM5 10h1v1h-1zM7 10h2v1h-2zM10 10h2v1h-2zM15 10h2v1h-2zM3 11h1v1h-1zM5 11h1v1h-1zM7 11h2v1h-2zM10 11h2v1h-2zM14 11h1v1h-1zM16 11h1v1h-1zM3 12h1v1h-1zM6 12h2v1h-2zM9 12h2v1h-2zM13 12h4v1h-4zM3 13h1v1h-1zM16 13h1v1h-1zM3 14h14v1h-14z" fill="#808080"/></svg>
<div style="left:278px;top:102px;width:1px;height:23px;background:#808080;"></div>
<div style="left:279px;top:102px;width:1px;height:23px;background:#fff;"></div>
<svg style="left:283px;top:105px" width="20" height="17"><path d="M5 2h2v1h-2zM11 2h5v1h-5zM4 3h3v1h-3zM10 3h2v1h-2zM15 3h2v1h-2zM3 4h1v1h-1zM5 4h2v1h-2zM10 4h2v1h-2zM15 4h2v1h-2zM5 5h2v1h-2zM10 5h2v1h-2zM15 5h2v1h-2zM5 6h2v1h-2zM10 6h2v1h-2zM15 6h2v1h-2zM5 7h2v1h-2zM10 7h2v1h-2zM15 7h2v1h-2zM5 8h2v1h-2zM10 8h2v1h-2zM15 8h2v1h-2zM3 9h6v1h-6zM11 9h5v1h-5zM3 12h1v1h-1zM5 12h3v1h-3zM9 12h4v1h-4zM14 12h3v1h-3zM18 12h1v1h-1zM2 13h1v1h-1zM4 13h2v1h-2zM7 13h2v1h-2zM10 13h1v1h-1zM13 13h2v1h-2zM16 13h2v1h-2zM19 13h1v1h-1zM2 14h1v1h-1zM4 14h1v1h-1zM6 14h2v1h-2zM10 14h1v1h-1zM12 14h1v1h-1zM15 14h2v1h-2zM19 14h1v1h-1zM3 15h5v1h-5zM9 15h2v1h-2zM12 15h5v1h-5zM18 15h1v1h-1z" fill="#fff"/><path d="M4 1h2v1h-2zM10 1h5v1h-5zM3 2h3v1h-3zM9 2h2v1h-2zM14 2h2v1h-2zM2 3h1v1h-1zM4 3h2v1h-2zM9 3h2v1h-2zM14 3h2v1h-2zM4 4h2v1h-2zM9 4h2v1h-2zM14 4h2v1h-2zM4 5h2v1h-2zM9 5h2v1h-2zM14 5h2v1h-2zM4 6h2v1h-2zM9 6h2v1h-2zM14 6h2v1h-2zM4 7h2v1h-2zM9 7h2v1h-2zM14 7h2v1h-2zM2 8h6v1h-6zM10 8h5v1h-5zM2 11h1v1h-1zM4 11h3v1h-3zM8 11h4v1h-4zM13 11h3v1h-3zM17 11h1v1h-1zM1 12h1v1h-1zM3 12h2v1h-2zM6 12h2v1h-2zM9 12h1v1h-1zM12 12h2v1h-2zM15 12h2v1h-2zM18 12h1v1h-1zM1 13h1v1h-1zM3 13h1v1h-1zM5 13h2v1h-2zM9 13h1v1h-1zM11 13h1v1h-1zM14 13h2v1h-2zM18 13h1v1h-1zM2 14h5v1h-5zM8 14h2v1h-2zM11 14h5v1h-5zM17 14h1v1h-1z" fill="#808080"/></svg>
<svg style="left:306px;top:105px" width="20" height="17"><path d="M5 2h2v1h-2zM11 2h5v1h-5zM4 3h3v1h-3zM10 3h2v1h-2zM15 3h2v1h-2zM3 4h1v1h-1zM5 4h2v1h-2zM10 4h2v1h-2zM15 4h2v1h-2zM5 5h2v1h-2zM10 5h2v1h-2zM15 5h2v1h-2zM5 6h2v1h-2zM10 6h2v1h-2zM15 6h2v1h-2zM5 7h7v1h-7zM15 7h2v1h-2zM5 8h13v1h-13zM3 9h6v1h-6zM11 9h6v1h-6zM8 10h1v1h-1zM15 10h1v1h-1zM3 12h1v1h-1zM5 12h3v1h-3zM9 12h4v1h-4zM14 12h3v1h-3zM18 12h1v1h-1zM2 13h1v1h-1zM4 13h2v1h-2zM7 13h2v1h-2zM10 13h1v1h-1zM13 13h2v1h-2zM16 13h2v1h-2zM19 13h1v1h-1zM2 14h1v1h-1zM4 14h1v1h-1zM6 14h2v1h-2zM10 14h1v1h-1zM12 14h1v1h-1zM15 14h2v1h-2zM19 14h1v1h-1zM3 15h5v1h-5zM9 15h2v1h-2zM12 15h5v1h-5zM18 15h1v1h-1z" fill="#fff"/><path d="M4 1h2v1h-2zM10 1h5v1h-5zM3 2h3v1h-3zM9 2h2v1h-2zM14 2h2v1h-2zM2 3h1v1h-1zM4 3h2v1h-2zM9 3h2v1h-2zM14 3h2v1h-2zM4 4h2v1h-2zM9 4h2v1h-2zM14 4h2v1h-2zM4 5h2v1h-2zM9 5h2v1h-2zM14 5h2v1h-2zM4 6h7v1h-7zM14 6h2v1h-2zM4 7h13v1h-13zM2 8h6v1h-6zM10 8h6v1h-6zM7 9h1v1h-1zM14 9h1v1h-1zM2 11h1v1h-1zM4 11h3v1h-3zM8 11h4v1h-4zM13 11h3v1h-3zM17 11h1v1h-1zM1 12h1v1h-1zM3 12h2v1h-2zM6 12h2v1h-2zM9 12h1v1h-1zM12 12h2v1h-2zM15 12h2v1h-2zM18 12h1v1h-1zM1 13h1v1h-1zM3 13h1v1h-1zM5 13h2v1h-2zM9 13h1v1h-1zM11 13h1v1h-1zM14 13h2v1h-2zM18 13h1v1h-1zM2 14h5v1h-5zM8 14h2v1h-2zM11 14h5v1h-5zM17 14h1v1h-1z" fill="#808080"/></svg>
<svg style="left:329px;top:105px" width="20" height="17"><path d="M5 2h2v1h-2zM12 2h4v1h-4zM4 3h3v1h-3zM11 3h2v1h-2zM3 4h1v1h-1zM5 4h2v1h-2zM10 4h2v1h-2zM5 5h2v1h-2zM10 5h6v1h-6zM5 6h2v1h-2zM10 6h2v1h-2zM15 6h2v1h-2zM5 7h2v1h-2zM10 7h2v1h-2zM15 7h2v1h-2zM5 8h2v1h-2zM10 8h2v1h-2zM15 8h2v1h-2zM3 9h6v1h-6zM11 9h5v1h-5zM3 12h1v1h-1zM5 12h3v1h-3zM9 12h4v1h-4zM14 12h3v1h-3zM18 12h1v1h-1zM2 13h1v1h-1zM4 13h2v1h-2zM7 13h2v1h-2zM10 13h1v1h-1zM13 13h2v1h-2zM16 13h2v1h-2zM19 13h1v1h-1zM2 14h1v1h-1zM4 14h1v1h-1zM6 14h2v1h-2zM10 14h1v1h-1zM12 14h1v1h-1zM15 14h2v1h-2zM19 14h1v1h-1zM3 15h5v1h-5zM9 15h2v1h-2zM12 15h5v1h-5zM18 15h1v1h-1z" fill="#fff"/><path d="M4 1h2v1h-2zM11 1h4v1h-4zM3 2h3v1h-3zM10 2h2v1h-2zM2 3h1v1h-1zM4 3h2v1h-2zM9 3h2v1h-2zM4 4h2v1h-2zM9 4h6v1h-6zM4 5h2v1h-2zM9 5h2v1h-2zM14 5h2v1h-2zM4 6h2v1h-2zM9 6h2v1h-2zM14 6h2v1h-2zM4 7h2v1h-2zM9 7h2v1h-2zM14 7h2v1h-2zM2 8h6v1h-6zM10 8h5v1h-5zM2 11h1v1h-1zM4 11h3v1h-3zM8 11h4v1h-4zM13 11h3v1h-3zM17 11h1v1h-1zM1 12h1v1h-1zM3 12h2v1h-2zM6 12h2v1h-2zM9 12h1v1h-1zM12 12h2v1h-2zM15 12h2v1h-2zM18 12h1v1h-1zM1 13h1v1h-1zM3 13h1v1h-1zM5 13h2v1h-2zM9 13h1v1h-1zM11 13h1v1h-1zM14 13h2v1h-2zM18 13h1v1h-1zM2 14h5v1h-5zM8 14h2v1h-2zM11 14h5v1h-5zM17 14h1v1h-1z" fill="#808080"/></svg>
<div style="left:355px;top:102px;width:1px;height:23px;background:#808080;"></div>
<div style="left:356px;top:102px;width:1px;height:23px;background:#fff;"></div>
<svg style="left:360px;top:105px" width="20" height="17"><path d="M8 2h2v1h-2zM7 3h4v1h-4zM6 4h6v1h-6zM5 5h8v1h-8zM4 6h10v1h-10zM7 7h8v1h-8zM16 7h2v1h-2zM7 8h10v1h-10zM7 9h8v1h-8zM16 9h2v1h-2zM7 10h10v1h-10zM7 11h8v1h-8zM6 12h9v1h-9zM7 13h8v1h-8zM6 14h9v1h-9zM7 15h8v1h-8z" fill="#fff"/><path d="M7 1h2v1h-2zM6 2h4v1h-4zM5 3h6v1h-6zM4 4h8v1h-8zM3 5h10v1h-10zM6 6h8v1h-8zM15 6h2v1h-2zM6 7h10v1h-10zM6 8h8v1h-8zM15 8h2v1h-2zM6 9h10v1h-10zM6 10h8v1h-8zM5 11h9v1h-9zM6 12h8v1h-8zM5 13h9v1h-9zM6 14h8v1h-8z" fill="#808080"/></svg>
<svg style="left:383px;top:105px" width="20" height="17"><path d="M5 3h7v1h-7zM6 4h7v1h-7zM7 5h6v1h-6zM6 6h10v1h-10zM5 7h1v1h-1zM8 7h8v1h-8zM17 7h2v1h-2zM8 8h10v1h-10zM8 9h8v1h-8zM17 9h2v1h-2zM8 10h10v1h-10zM8 11h8v1h-8zM7 12h9v1h-9zM8 13h8v1h-8zM7 14h9v1h-9zM8 15h8v1h-8z" fill="#fff"/><path d="M4 2h7v1h-7zM5 3h7v1h-7zM6 4h6v1h-6zM5 5h10v1h-10zM4 6h1v1h-1zM7 6h8v1h-8zM16 6h2v1h-2zM7 7h10v1h-10zM7 8h8v1h-8zM16 8h2v1h-2zM7 9h10v1h-10zM7 10h8v1h-8zM6 11h9v1h-9zM7 12h8v1h-8zM6 13h9v1h-9zM7 14h8v1h-8z" fill="#808080"/></svg>
<svg style="left:406px;top:105px" width="20" height="17"><path d="M8 2h1v1h-1zM10 2h1v1h-1zM12 2h6v1h-6zM7 3h1v1h-1zM9 3h1v1h-1zM11 3h1v1h-1zM13 3h5v1h-5zM8 4h1v1h-1zM10 4h1v1h-1zM12 4h4v1h-4zM4 5h4v1h-4zM9 5h1v1h-1zM11 5h6v1h-6zM7 6h1v1h-1zM9 6h1v1h-1zM11 6h1v1h-1zM13 6h4v1h-4zM4 7h4v1h-4zM9 7h1v1h-1zM11 7h6v1h-6zM8 8h1v1h-1zM10 8h1v1h-1zM12 8h5v1h-5zM7 9h1v1h-1zM9 9h1v1h-1zM11 9h1v1h-1zM13 9h4v1h-4zM8 10h1v1h-1zM10 10h1v1h-1zM12 10h3v1h-3zM3 12h1v1h-1zM5 12h3v1h-3zM9 12h4v1h-4zM14 12h3v1h-3zM18 12h1v1h-1zM2 13h1v1h-1zM4 13h2v1h-2zM7 13h2v1h-2zM10 13h1v1h-1zM13 13h2v1h-2zM16 13h2v1h-2zM19 13h1v1h-1zM2 14h1v1h-1zM4 14h1v1h-1zM6 14h2v1h-2zM10 14h1v1h-1zM12 14h1v1h-1zM15 14h2v1h-2zM19 14h1v1h-1zM3 15h5v1h-5zM9 15h2v1h-2zM12 15h5v1h-5zM18 15h1v1h-1z" fill="#fff"/><path d="M7 1h1v1h-1zM9 1h1v1h-1zM11 1h6v1h-6zM6 2h1v1h-1zM8 2h1v1h-1zM10 2h1v1h-1zM12 2h5v1h-5zM7 3h1v1h-1zM9 3h1v1h-1zM11 3h4v1h-4zM3 4h4v1h-4zM8 4h1v1h-1zM10 4h6v1h-6zM6 5h1v1h-1zM8 5h1v1h-1zM10 5h1v1h-1zM12 5h4v1h-4zM3 6h4v1h-4zM8 6h1v1h-1zM10 6h6v1h-6zM7 7h1v1h-1zM9 7h1v1h-1zM11 7h5v1h-5zM6 8h1v1h-1zM8 8h1v1h-1zM10 8h1v1h-1zM12 8h4v1h-4zM7 9h1v1h-1zM9 9h1v1h-1zM11 9h3v1h-3zM2 11h1v1h-1zM4 11h3v1h-3zM8 11h4v1h-4zM13 11h3v1h-3zM17 11h1v1h-1zM1 12h1v1h-1zM3 12h2v1h-2zM6 12h2v1h-2zM9 12h1v1h-1zM12 12h2v1h-2zM15 12h2v1h-2zM18 12h1v1h-1zM1 13h1v1h-1zM3 13h1v1h-1zM5 13h2v1h-2zM9 13h1v1h-1zM11 13h1v1h-1zM14 13h2v1h-2zM18 13h1v1h-1zM2 14h5v1h-5zM8 14h2v1h-2zM11 14h5v1h-5zM17 14h1v1h-1z" fill="#808080"/></svg>
<div style="left:435px;top:99px;width:334px;height:1px;background:#fff;"></div>
<div style="left:435px;top:99px;width:1px;height:29px;background:#fff;"></div>
<div style="left:435px;top:128px;width:334px;height:1px;background:#808080;"></div>
<div style="left:768px;top:99px;width:1px;height:29px;background:#808080;"></div>
<div style="left:439px;top:101px;width:3px;height:26px;box-shadow:inset -1px -1px #808080,inset 2px 1px #fff;"></div>
<div style="left:443px;top:101px;width:3px;height:26px;box-shadow:inset -1px -1px #808080,inset 2px 1px #fff;"></div>
<svg style="left:448px;top:105px" width="20" height="17"><path d="M4 2h13v1h-13zM3 3h15v1h-15zM3 4h2v1h-2zM12 4h7v1h-7zM3 5h2v1h-2zM6 5h13v1h-13zM3 6h2v1h-2zM6 6h1v1h-1zM12 6h7v1h-7zM3 7h2v1h-2zM6 7h1v1h-1zM8 7h11v1h-11zM3 8h2v1h-2zM10 8h9v1h-9zM3 9h16v1h-16zM3 10h16v1h-16zM3 11h2v1h-2zM6 11h12v1h-12zM3 12h2v1h-2zM6 12h1v1h-1zM17 12h1v1h-1zM3 13h2v1h-2zM6 13h1v1h-1zM8 13h10v1h-10zM3 14h2v1h-2zM19 14h1v1h-1zM4 15h15v1h-15z" fill="#fff"/><path d="M3 1h13v1h-13zM2 2h15v1h-15zM2 3h2v1h-2zM11 3h7v1h-7zM2 4h2v1h-2zM5 4h13v1h-13zM2 5h2v1h-2zM5 5h1v1h-1zM11 5h7v1h-7zM2 6h2v1h-2zM5 6h1v1h-1zM7 6h11v1h-11zM2 7h2v1h-2zM9 7h9v1h-9zM2 8h16v1h-16zM2 9h16v1h-16zM2 10h2v1h-2zM5 10h12v1h-12zM2 11h2v1h-2zM5 11h1v1h-1zM16 11h1v1h-1zM2 12h2v1h-2zM5 12h1v1h-1zM7 12h10v1h-10zM2 13h2v1h-2zM18 13h1v1h-1zM3 14h15v1h-15z" fill="#808080"/></svg>
<svg style="left:471px;top:105px" width="20" height="17"><path d="M4 2h14v1h-14zM3 3h16v1h-16zM3 4h16v1h-16zM3 5h7v1h-7zM12 5h1v1h-1zM15 5h4v1h-4zM3 6h16v1h-16zM3 7h3v1h-3zM13 7h6v1h-6zM3 8h6v1h-6zM14 8h5v1h-5zM3 9h6v1h-6zM10 9h3v1h-3zM14 9h5v1h-5zM3 10h6v1h-6zM14 10h5v1h-5zM3 11h4v1h-4zM14 11h5v1h-5zM3 12h4v1h-4zM8 12h6v1h-6zM16 12h2v1h-2zM3 13h4v1h-4zM16 13h2v1h-2zM4 14h13v1h-13zM5 15h11v1h-11z" fill="#fff"/><path d="M3 1h14v1h-14zM2 2h16v1h-16zM2 3h16v1h-16zM2 4h7v1h-7zM11 4h1v1h-1zM14 4h4v1h-4zM2 5h16v1h-16zM2 6h3v1h-3zM12 6h6v1h-6zM2 7h6v1h-6zM13 7h5v1h-5zM2 8h6v1h-6zM9 8h3v1h-3zM13 8h5v1h-5zM2 9h6v1h-6zM13 9h5v1h-5zM2 10h4v1h-4zM13 10h5v1h-5zM2 11h4v1h-4zM7 11h6v1h-6zM15 11h2v1h-2zM2 12h4v1h-4zM15 12h2v1h-2zM3 13h13v1h-13zM4 14h11v1h-11z" fill="#808080"/></svg>
<div style="left:497px;top:102px;width:1px;height:23px;background:#808080;"></div>
<div style="left:498px;top:102px;width:1px;height:23px;background:#fff;"></div>
<svg style="left:502px;top:105px" width="20" height="17"><path d="M3 2h11v1h-11zM3 3h11v1h-11zM16 3h1v1h-1zM3 4h2v1h-2zM12 4h6v1h-6zM3 5h15v1h-15zM3 6h2v1h-2zM12 6h3v1h-3zM17 6h1v1h-1zM3 7h12v1h-12zM17 7h1v1h-1zM3 8h2v1h-2zM12 8h3v1h-3zM17 8h1v1h-1zM3 9h12v1h-12zM17 9h1v1h-1zM3 10h15v1h-15zM5 11h4v1h-4zM10 11h4v1h-4zM15 11h1v1h-1zM17 11h1v1h-1zM5 12h10v1h-10zM16 12h2v1h-2zM9 13h5v1h-5zM15 13h1v1h-1zM17 13h1v1h-1zM10 14h7v1h-7z" fill="#fff"/><path d="M2 1h11v1h-11zM2 2h11v1h-11zM15 2h1v1h-1zM2 3h2v1h-2zM11 3h6v1h-6zM2 4h15v1h-15zM2 5h2v1h-2zM11 5h3v1h-3zM16 5h1v1h-1zM2 6h12v1h-12zM16 6h1v1h-1zM2 7h2v1h-2zM11 7h3v1h-3zM16 7h1v1h-1zM2 8h12v1h-12zM16 8h1v1h-1zM2 9h15v1h-15zM4 10h4v1h-4zM9 10h4v1h-4zM14 10h1v1h-1zM16 10h1v1h-1zM4 11h10v1h-10zM15 11h2v1h-2zM8 12h5v1h-5zM14 12h1v1h-1zM16 12h1v1h-1zM9 13h7v1h-7z" fill="#808080"/></svg>
<div style="left:528px;top:102px;width:1px;height:23px;background:#808080;"></div>
<div style="left:529px;top:102px;width:1px;height:23px;background:#fff;"></div>
<svg style="left:533px;top:105px" width="20" height="17"><path d="M9 3h2v1h-2zM7 4h3v1h-3zM11 4h2v1h-2zM6 5h1v1h-1zM8 5h1v1h-1zM10 5h1v1h-1zM12 5h2v1h-2zM6 6h1v1h-1zM8 6h1v1h-1zM10 6h1v1h-1zM12 6h1v1h-1zM14 6h1v1h-1zM6 7h1v1h-1zM8 7h1v1h-1zM10 7h1v1h-1zM12 7h1v1h-1zM14 7h1v1h-1zM6 8h1v1h-1zM8 8h1v1h-1zM10 8h1v1h-1zM12 8h1v1h-1zM14 8h1v1h-1zM3 9h2v1h-2zM6 9h1v1h-1zM8 9h1v1h-1zM10 9h1v1h-1zM12 9h1v1h-1zM14 9h1v1h-1zM2 10h1v1h-1zM4 10h3v1h-3zM14 10h1v1h-1zM2 11h1v1h-1zM5 11h1v1h-1zM8 11h2v1h-2zM11 11h4v1h-4zM3 12h1v1h-1zM10 12h1v1h-1zM12 12h1v1h-1zM14 12h1v1h-1zM4 13h1v1h-1zM10 13h5v1h-5zM5 14h3v1h-3zM10 14h5v1h-5zM7 15h5v1h-5z" fill="#fff"/><path d="M8 2h2v1h-2zM6 3h3v1h-3zM10 3h2v1h-2zM5 4h1v1h-1zM7 4h1v1h-1zM9 4h1v1h-1zM11 4h2v1h-2zM5 5h1v1h-1zM7 5h1v1h-1zM9 5h1v1h-1zM11 5h1v1h-1zM13 5h1v1h-1zM5 6h1v1h-1zM7 6h1v1h-1zM9 6h1v1h-1zM11 6h1v1h-1zM13 6h1v1h-1zM5 7h1v1h-1zM7 7h1v1h-1zM9 7h1v1h-1zM11 7h1v1h-1zM13 7h1v1h-1zM2 8h2v1h-2zM5 8h1v1h-1zM7 8h1v1h-1zM9 8h1v1h-1zM11 8h1v1h-1zM13 8h1v1h-1zM1 9h1v1h-1zM3 9h3v1h-3zM13 9h1v1h-1zM1 10h1v1h-1zM4 10h1v1h-1zM7 10h2v1h-2zM10 10h4v1h-4zM2 11h1v1h-1zM9 11h1v1h-1zM11 11h1v1h-1zM13 11h1v1h-1zM3 12h1v1h-1zM9 12h5v1h-5zM4 13h3v1h-3zM9 13h5v1h-5zM6 14h5v1h-5z" fill="#808080"/></svg>
<svg style="left:556px;top:105px" width="20" height="17"><path d="M9 3h2v1h-2zM7 4h6v1h-6zM6 5h2v1h-2zM9 5h1v1h-1zM11 5h3v1h-3zM6 6h2v1h-2zM9 6h1v1h-1zM11 6h1v1h-1zM13 6h1v1h-1zM6 7h2v1h-2zM9 7h1v1h-1zM11 7h1v1h-1zM13 7h2v1h-2zM6 8h9v1h-9zM3 9h2v1h-2zM6 9h9v1h-9zM2 10h7v1h-7zM10 10h5v1h-5zM2 11h6v1h-6zM9 11h6v1h-6zM3 12h7v1h-7zM11 12h4v1h-4zM4 13h11v1h-11zM5 14h10v1h-10zM7 15h5v1h-5z" fill="#fff"/><path d="M8 2h2v1h-2zM6 3h6v1h-6zM5 4h2v1h-2zM8 4h1v1h-1zM10 4h3v1h-3zM5 5h2v1h-2zM8 5h1v1h-1zM10 5h1v1h-1zM12 5h1v1h-1zM5 6h2v1h-2zM8 6h1v1h-1zM10 6h1v1h-1zM12 6h2v1h-2zM5 7h9v1h-9zM2 8h2v1h-2zM5 8h9v1h-9zM1 9h7v1h-7zM9 9h5v1h-5zM1 10h6v1h-6zM8 10h6v1h-6zM2 11h7v1h-7zM10 11h4v1h-4zM3 12h11v1h-11zM4 13h10v1h-10zM6 14h5v1h-5z" fill="#808080"/></svg>
<svg style="left:579px;top:105px" width="20" height="17"><path d="M5 3h1v1h-1zM5 4h3v1h-3zM5 5h5v1h-5zM5 6h7v1h-7zM5 7h9v1h-9zM5 8h11v1h-11zM5 9h13v1h-13zM5 10h11v1h-11zM5 11h9v1h-9zM5 12h7v1h-7zM5 13h5v1h-5zM5 14h3v1h-3zM5 15h1v1h-1z" fill="#fff"/><path d="M4 2h1v1h-1zM4 3h3v1h-3zM4 4h5v1h-5zM4 5h7v1h-7zM4 6h9v1h-9zM4 7h11v1h-11zM4 8h13v1h-13zM4 9h11v1h-11zM4 10h9v1h-9zM4 11h7v1h-7zM4 12h5v1h-5zM4 13h3v1h-3zM4 14h1v1h-1z" fill="#808080"/></svg>
<svg style="left:602px;top:105px" width="20" height="17"><path d="M5 4h12v1h-12zM5 5h12v1h-12zM5 6h12v1h-12zM5 7h12v1h-12zM5 8h12v1h-12zM5 9h12v1h-12zM5 10h12v1h-12zM5 11h12v1h-12zM5 12h12v1h-12zM5 13h12v1h-12zM5 14h12v1h-12zM5 15h12v1h-12z" fill="#fff"/><path d="M4 3h12v1h-12zM4 4h12v1h-12zM4 5h12v1h-12zM4 6h12v1h-12zM4 7h12v1h-12zM4 8h12v1h-12zM4 9h12v1h-12zM4 10h12v1h-12zM4 11h12v1h-12zM4 12h12v1h-12zM4 13h12v1h-12zM4 14h12v1h-12z" fill="#808080"/></svg>
<svg style="left:625px;top:105px" width="20" height="17"><path d="M5 4h5v1h-5zM12 4h5v1h-5zM5 5h5v1h-5zM12 5h5v1h-5zM5 6h5v1h-5zM12 6h5v1h-5zM5 7h5v1h-5zM12 7h5v1h-5zM5 8h5v1h-5zM12 8h5v1h-5zM5 9h5v1h-5zM12 9h5v1h-5zM5 10h5v1h-5zM12 10h5v1h-5zM5 11h5v1h-5zM12 11h5v1h-5zM5 12h5v1h-5zM12 12h5v1h-5zM5 13h5v1h-5zM12 13h5v1h-5zM5 14h5v1h-5zM12 14h5v1h-5zM5 15h5v1h-5zM12 15h5v1h-5z" fill="#fff"/><path d="M4 3h5v1h-5zM11 3h5v1h-5zM4 4h5v1h-5zM11 4h5v1h-5zM4 5h5v1h-5zM11 5h5v1h-5zM4 6h5v1h-5zM11 6h5v1h-5zM4 7h5v1h-5zM11 7h5v1h-5zM4 8h5v1h-5zM11 8h5v1h-5zM4 9h5v1h-5zM11 9h5v1h-5zM4 10h5v1h-5zM11 10h5v1h-5zM4 11h5v1h-5zM11 11h5v1h-5zM4 12h5v1h-5zM11 12h5v1h-5zM4 13h5v1h-5zM11 13h5v1h-5zM4 14h5v1h-5zM11 14h5v1h-5z" fill="#808080"/></svg>
<svg style="left:648px;top:105px" width="20" height="17"><path d="M12 3h3v1h-3zM4 4h1v1h-1zM12 4h3v1h-3zM4 5h3v1h-3zM12 5h3v1h-3zM4 6h5v1h-5zM12 6h3v1h-3zM4 7h7v1h-7zM12 7h3v1h-3zM4 8h11v1h-11zM4 9h11v1h-11zM4 10h11v1h-11zM4 11h7v1h-7zM12 11h3v1h-3zM4 12h5v1h-5zM12 12h3v1h-3zM4 13h3v1h-3zM12 13h3v1h-3zM4 14h1v1h-1zM12 14h3v1h-3zM12 15h3v1h-3z" fill="#fff"/><path d="M11 2h3v1h-3zM3 3h1v1h-1zM11 3h3v1h-3zM3 4h3v1h-3zM11 4h3v1h-3zM3 5h5v1h-5zM11 5h3v1h-3zM3 6h7v1h-7zM11 6h3v1h-3zM3 7h11v1h-11zM3 8h11v1h-11zM3 9h11v1h-11zM3 10h7v1h-7zM11 10h3v1h-3zM3 11h5v1h-5zM11 11h3v1h-3zM3 12h3v1h-3zM11 12h3v1h-3zM3 13h1v1h-1zM11 13h3v1h-3zM11 14h3v1h-3z" fill="#808080"/></svg>
<svg style="left:671px;top:105px" width="20" height="17"><path d="M4 3h1v1h-1zM10 3h2v1h-2zM4 4h3v1h-3zM10 4h2v1h-2zM4 5h4v1h-4zM10 5h2v1h-2zM14 5h2v1h-2zM4 6h5v1h-5zM10 6h2v1h-2zM13 6h4v1h-4zM4 7h4v1h-4zM10 7h5v1h-5zM4 8h3v1h-3zM10 8h5v1h-5zM3 9h14v1h-14zM3 10h1v1h-1zM5 10h10v1h-10zM4 11h11v1h-11zM5 12h10v1h-10zM5 13h11v1h-11zM5 14h10v1h-10z" fill="#fff"/><path d="M3 2h1v1h-1zM9 2h2v1h-2zM3 3h3v1h-3zM9 3h2v1h-2zM3 4h4v1h-4zM9 4h2v1h-2zM13 4h2v1h-2zM3 5h5v1h-5zM9 5h2v1h-2zM12 5h4v1h-4zM3 6h4v1h-4zM9 6h5v1h-5zM3 7h3v1h-3zM9 7h5v1h-5zM2 8h14v1h-14zM2 9h1v1h-1zM4 9h10v1h-10zM3 10h11v1h-11zM4 11h10v1h-10zM4 12h11v1h-11zM4 13h10v1h-10z" fill="#808080"/></svg>
<svg style="left:694px;top:105px" width="20" height="17"><path d="M11 3h2v1h-2zM15 3h1v1h-1zM11 4h2v1h-2zM14 4h3v1h-3zM4 5h4v1h-4zM11 5h2v1h-2zM14 5h3v1h-3zM3 6h7v1h-7zM11 6h2v1h-2zM15 6h2v1h-2zM4 7h5v1h-5zM10 7h7v1h-7zM3 8h14v1h-14zM4 9h13v1h-13zM3 10h14v1h-14zM4 11h13v1h-13zM3 12h13v1h-13zM4 13h12v1h-12zM5 14h10v1h-10z" fill="#fff"/><path d="M10 2h2v1h-2zM14 2h1v1h-1zM10 3h2v1h-2zM13 3h3v1h-3zM3 4h4v1h-4zM10 4h2v1h-2zM13 4h3v1h-3zM2 5h7v1h-7zM10 5h2v1h-2zM14 5h2v1h-2zM3 6h5v1h-5zM9 6h7v1h-7zM2 7h14v1h-14zM3 8h13v1h-13zM2 9h14v1h-14zM3 10h13v1h-13zM2 11h13v1h-13zM3 12h12v1h-12zM4 13h10v1h-10z" fill="#808080"/></svg>
<svg style="left:717px;top:105px" width="20" height="17"><path d="M4 3h2v1h-2zM11 3h2v1h-2zM4 4h4v1h-4zM11 4h4v1h-4zM4 5h5v1h-5zM11 5h5v1h-5zM4 6h6v1h-6zM11 6h6v1h-6zM4 7h14v1h-14zM4 8h15v1h-15zM4 9h14v1h-14zM4 10h6v1h-6zM11 10h6v1h-6zM4 11h5v1h-5zM11 11h5v1h-5zM4 12h4v1h-4zM11 12h4v1h-4zM4 13h3v1h-3zM11 13h3v1h-3zM4 14h1v1h-1zM11 14h1v1h-1z" fill="#fff"/><path d="M3 2h2v1h-2zM10 2h2v1h-2zM3 3h4v1h-4zM10 3h4v1h-4zM3 4h5v1h-5zM10 4h5v1h-5zM3 5h6v1h-6zM10 5h6v1h-6zM3 6h14v1h-14zM3 7h15v1h-15zM3 8h14v1h-14zM3 9h6v1h-6zM10 9h6v1h-6zM3 10h5v1h-5zM10 10h5v1h-5zM3 11h4v1h-4zM10 11h4v1h-4zM3 12h3v1h-3zM10 12h3v1h-3zM3 13h1v1h-1zM10 13h1v1h-1z" fill="#808080"/></svg>
<svg style="left:740px;top:105px" width="20" height="17"><path d="M4 3h4v1h-4zM15 3h3v1h-3zM5 4h5v1h-5zM15 4h3v1h-3zM6 5h6v1h-6zM15 5h3v1h-3zM8 6h6v1h-6zM15 6h3v1h-3zM10 7h8v1h-8zM12 8h6v1h-6zM10 9h8v1h-8zM8 10h6v1h-6zM15 10h3v1h-3zM6 11h6v1h-6zM15 11h3v1h-3zM5 12h5v1h-5zM15 12h3v1h-3zM4 13h4v1h-4zM15 13h3v1h-3zM15 14h3v1h-3z" fill="#fff"/><path d="M3 2h4v1h-4zM14 2h3v1h-3zM4 3h5v1h-5zM14 3h3v1h-3zM5 4h6v1h-6zM14 4h3v1h-3zM7 5h6v1h-6zM14 5h3v1h-3zM9 6h8v1h-8zM11 7h6v1h-6zM9 8h8v1h-8zM7 9h6v1h-6zM14 9h3v1h-3zM5 10h6v1h-6zM14 10h3v1h-3zM4 11h5v1h-5zM14 11h3v1h-3zM3 12h4v1h-4zM14 12h3v1h-3zM14 13h3v1h-3z" fill="#808080"/></svg>
<div style="left:769px;top:99px;width:272px;height:1px;background:#fff;"></div>
<div style="left:769px;top:99px;width:1px;height:29px;background:#fff;"></div>
<div style="left:769px;top:128px;width:272px;height:1px;background:#808080;"></div>
<div style="left:1040px;top:99px;width:1px;height:29px;background:#808080;"></div>
<div style="left:773px;top:101px;width:3px;height:26px;box-shadow:inset -1px -1px #808080,inset 2px 1px #fff;"></div>
<div style="left:777px;top:101px;width:3px;height:26px;box-shadow:inset -1px -1px #808080,inset 2px 1px #fff;"></div>
<svg style="left:783px;top:105px" width="20" height="17"><path d="M5 6h12v1h-12zM4 7h2v1h-2zM7 7h1v1h-1zM9 7h1v1h-1zM11 7h1v1h-1zM13 7h1v1h-1zM15 7h3v1h-3zM4 8h3v1h-3zM8 8h1v1h-1zM10 8h1v1h-1zM12 8h1v1h-1zM14 8h1v1h-1zM16 8h2v1h-2zM4 9h2v1h-2zM7 9h1v1h-1zM9 9h1v1h-1zM11 9h1v1h-1zM13 9h1v1h-1zM15 9h3v1h-3zM4 10h3v1h-3zM8 10h1v1h-1zM10 10h1v1h-1zM12 10h1v1h-1zM14 10h1v1h-1zM16 10h2v1h-2zM4 11h2v1h-2zM7 11h1v1h-1zM9 11h1v1h-1zM11 11h1v1h-1zM13 11h1v1h-1zM15 11h3v1h-3zM4 12h14v1h-14zM5 13h12v1h-12zM10 14h1v1h-1z" fill="#fff"/><path d="M4 5h12v1h-12zM3 6h2v1h-2zM6 6h1v1h-1zM8 6h1v1h-1zM10 6h1v1h-1zM12 6h1v1h-1zM14 6h3v1h-3zM3 7h3v1h-3zM7 7h1v1h-1zM9 7h1v1h-1zM11 7h1v1h-1zM13 7h1v1h-1zM15 7h2v1h-2zM3 8h2v1h-2zM6 8h1v1h-1zM8 8h1v1h-1zM10 8h1v1h-1zM12 8h1v1h-1zM14 8h3v1h-3zM3 9h3v1h-3zM7 9h1v1h-1zM9 9h1v1h-1zM11 9h1v1h-1zM13 9h1v1h-1zM15 9h2v1h-2zM3 10h2v1h-2zM6 10h1v1h-1zM8 10h1v1h-1zM10 10h1v1h-1zM12 10h1v1h-1zM14 10h3v1h-3zM3 11h14v1h-14zM4 12h12v1h-12zM9 13h1v1h-1z" fill="#808080"/></svg>
<svg style="left:806px;top:105px" width="20" height="17"><path d="M3 5h15v1h-15zM2 6h2v1h-2zM5 6h1v1h-1zM7 6h1v1h-1zM9 6h1v1h-1zM11 6h1v1h-1zM13 6h1v1h-1zM15 6h1v1h-1zM17 6h2v1h-2zM2 7h3v1h-3zM6 7h1v1h-1zM8 7h1v1h-1zM10 7h1v1h-1zM12 7h1v1h-1zM14 7h1v1h-1zM16 7h3v1h-3zM2 8h2v1h-2zM5 8h1v1h-1zM7 8h1v1h-1zM9 8h1v1h-1zM11 8h1v1h-1zM13 8h1v1h-1zM15 8h1v1h-1zM17 8h2v1h-2zM2 9h3v1h-3zM6 9h1v1h-1zM8 9h1v1h-1zM10 9h1v1h-1zM12 9h1v1h-1zM14 9h1v1h-1zM16 9h3v1h-3zM2 10h2v1h-2zM5 10h1v1h-1zM7 10h1v1h-1zM9 10h1v1h-1zM11 10h1v1h-1zM13 10h1v1h-1zM15 10h1v1h-1zM17 10h2v1h-2zM2 11h17v1h-17zM3 12h15v1h-15zM10 13h1v1h-1z" fill="#fff"/><path d="M2 4h15v1h-15zM1 5h2v1h-2zM4 5h1v1h-1zM6 5h1v1h-1zM8 5h1v1h-1zM10 5h1v1h-1zM12 5h1v1h-1zM14 5h1v1h-1zM16 5h2v1h-2zM1 6h3v1h-3zM5 6h1v1h-1zM7 6h1v1h-1zM9 6h1v1h-1zM11 6h1v1h-1zM13 6h1v1h-1zM15 6h3v1h-3zM1 7h2v1h-2zM4 7h1v1h-1zM6 7h1v1h-1zM8 7h1v1h-1zM10 7h1v1h-1zM12 7h1v1h-1zM14 7h1v1h-1zM16 7h2v1h-2zM1 8h3v1h-3zM5 8h1v1h-1zM7 8h1v1h-1zM9 8h1v1h-1zM11 8h1v1h-1zM13 8h1v1h-1zM15 8h3v1h-3zM1 9h2v1h-2zM4 9h1v1h-1zM6 9h1v1h-1zM8 9h1v1h-1zM10 9h1v1h-1zM12 9h1v1h-1zM14 9h1v1h-1zM16 9h2v1h-2zM1 10h17v1h-17zM2 11h15v1h-15zM9 12h1v1h-1z" fill="#808080"/></svg>
<svg style="left:829px;top:105px" width="20" height="17"><path d="M10 3h5v1h-5zM11 4h3v1h-3zM12 5h1v1h-1zM5 6h12v1h-12zM4 7h2v1h-2zM7 7h1v1h-1zM9 7h1v1h-1zM11 7h1v1h-1zM13 7h1v1h-1zM15 7h3v1h-3zM4 8h3v1h-3zM8 8h1v1h-1zM10 8h1v1h-1zM12 8h1v1h-1zM14 8h1v1h-1zM16 8h2v1h-2zM4 9h2v1h-2zM7 9h1v1h-1zM9 9h1v1h-1zM11 9h1v1h-1zM13 9h1v1h-1zM15 9h3v1h-3zM4 10h3v1h-3zM8 10h1v1h-1zM10 10h1v1h-1zM12 10h1v1h-1zM14 10h1v1h-1zM16 10h2v1h-2zM4 11h2v1h-2zM7 11h1v1h-1zM9 11h1v1h-1zM11 11h1v1h-1zM13 11h1v1h-1zM15 11h3v1h-3zM4 12h14v1h-14zM5 13h12v1h-12zM10 14h1v1h-1z" fill="#fff"/><path d="M9 2h5v1h-5zM10 3h3v1h-3zM11 4h1v1h-1zM4 5h12v1h-12zM3 6h2v1h-2zM6 6h1v1h-1zM8 6h1v1h-1zM10 6h1v1h-1zM12 6h1v1h-1zM14 6h3v1h-3zM3 7h3v1h-3zM7 7h1v1h-1zM9 7h1v1h-1zM11 7h1v1h-1zM13 7h1v1h-1zM15 7h2v1h-2zM3 8h2v1h-2zM6 8h1v1h-1zM8 8h1v1h-1zM10 8h1v1h-1zM12 8h1v1h-1zM14 8h3v1h-3zM3 9h3v1h-3zM7 9h1v1h-1zM9 9h1v1h-1zM11 9h1v1h-1zM13 9h1v1h-1zM15 9h2v1h-2zM3 10h2v1h-2zM6 10h1v1h-1zM8 10h1v1h-1zM10 10h1v1h-1zM12 10h1v1h-1zM14 10h3v1h-3zM3 11h14v1h-14zM4 12h12v1h-12zM9 13h1v1h-1z" fill="#808080"/></svg>
<svg style="left:852px;top:105px" width="20" height="17"><path d="M10 4h1v1h-1zM10 5h1v1h-1zM5 6h12v1h-12zM4 7h2v1h-2zM7 7h1v1h-1zM9 7h1v1h-1zM11 7h1v1h-1zM13 7h1v1h-1zM15 7h3v1h-3zM4 8h3v1h-3zM8 8h1v1h-1zM10 8h1v1h-1zM12 8h1v1h-1zM14 8h1v1h-1zM16 8h2v1h-2zM4 9h2v1h-2zM7 9h1v1h-1zM9 9h1v1h-1zM11 9h1v1h-1zM13 9h1v1h-1zM15 9h3v1h-3zM4 10h3v1h-3zM8 10h1v1h-1zM10 10h1v1h-1zM12 10h1v1h-1zM14 10h1v1h-1zM16 10h2v1h-2zM4 11h2v1h-2zM7 11h1v1h-1zM9 11h1v1h-1zM11 11h1v1h-1zM13 11h1v1h-1zM15 11h3v1h-3zM4 12h14v1h-14zM5 13h12v1h-12zM10 14h1v1h-1zM8 15h5v1h-5z" fill="#fff"/><path d="M9 3h1v1h-1zM9 4h1v1h-1zM4 5h12v1h-12zM3 6h2v1h-2zM6 6h1v1h-1zM8 6h1v1h-1zM10 6h1v1h-1zM12 6h1v1h-1zM14 6h3v1h-3zM3 7h3v1h-3zM7 7h1v1h-1zM9 7h1v1h-1zM11 7h1v1h-1zM13 7h1v1h-1zM15 7h2v1h-2zM3 8h2v1h-2zM6 8h1v1h-1zM8 8h1v1h-1zM10 8h1v1h-1zM12 8h1v1h-1zM14 8h3v1h-3zM3 9h3v1h-3zM7 9h1v1h-1zM9 9h1v1h-1zM11 9h1v1h-1zM13 9h1v1h-1zM15 9h2v1h-2zM3 10h2v1h-2zM6 10h1v1h-1zM8 10h1v1h-1zM10 10h1v1h-1zM12 10h1v1h-1zM14 10h3v1h-3zM3 11h14v1h-14zM4 12h12v1h-12zM9 13h1v1h-1zM7 14h5v1h-5z" fill="#808080"/></svg>
<svg style="left:875px;top:105px" width="20" height="17"><path d="M4 3h13v1h-13zM4 4h1v1h-1zM6 4h1v1h-1zM8 4h1v1h-1zM10 4h1v1h-1zM12 4h1v1h-1zM14 4h1v1h-1zM16 4h1v1h-1zM10 5h1v1h-1zM10 6h1v1h-1zM10 7h1v1h-1zM10 8h1v1h-1zM10 9h1v1h-1zM5 10h12v1h-12zM5 11h12v1h-12zM10 12h1v1h-1zM10 13h1v1h-1zM10 14h1v1h-1zM10 15h1v1h-1z" fill="#fff"/><path d="M3 2h13v1h-13zM3 3h1v1h-1zM5 3h1v1h-1zM7 3h1v1h-1zM9 3h1v1h-1zM11 3h1v1h-1zM13 3h1v1h-1zM15 3h1v1h-1zM9 4h1v1h-1zM9 5h1v1h-1zM9 6h1v1h-1zM9 7h1v1h-1zM9 8h1v1h-1zM4 9h12v1h-12zM4 10h12v1h-12zM9 11h1v1h-1zM9 12h1v1h-1zM9 13h1v1h-1zM9 14h1v1h-1z" fill="#808080"/></svg>
<svg style="left:898px;top:105px" width="20" height="17"><path d="M4 3h13v1h-13zM4 4h1v1h-1zM6 4h1v1h-1zM8 4h1v1h-1zM10 4h1v1h-1zM12 4h1v1h-1zM14 4h1v1h-1zM16 4h1v1h-1zM10 5h1v1h-1zM10 6h1v1h-1zM10 7h1v1h-1zM10 8h1v1h-1zM10 9h1v1h-1zM2 10h17v1h-17zM2 11h17v1h-17zM5 12h1v1h-1zM16 12h1v1h-1zM3 13h5v1h-5zM14 13h5v1h-5zM5 14h1v1h-1zM16 14h1v1h-1zM5 15h1v1h-1zM16 15h1v1h-1z" fill="#fff"/><path d="M3 2h13v1h-13zM3 3h1v1h-1zM5 3h1v1h-1zM7 3h1v1h-1zM9 3h1v1h-1zM11 3h1v1h-1zM13 3h1v1h-1zM15 3h1v1h-1zM9 4h1v1h-1zM9 5h1v1h-1zM9 6h1v1h-1zM9 7h1v1h-1zM9 8h1v1h-1zM1 9h17v1h-17zM1 10h17v1h-17zM4 11h1v1h-1zM15 11h1v1h-1zM2 12h5v1h-5zM13 12h5v1h-5zM4 13h1v1h-1zM15 13h1v1h-1zM4 14h1v1h-1zM15 14h1v1h-1z" fill="#808080"/></svg>
<svg style="left:921px;top:105px" width="20" height="17"><path d="M4 2h1v1h-1zM15 2h1v1h-1zM4 3h1v1h-1zM15 3h1v1h-1zM2 4h5v1h-5zM13 4h5v1h-5zM4 5h1v1h-1zM15 5h1v1h-1zM4 6h1v1h-1zM15 6h1v1h-1zM4 7h1v1h-1zM15 7h1v1h-1zM2 8h17v1h-17zM2 9h17v1h-17zM10 10h1v1h-1zM10 11h1v1h-1zM10 12h1v1h-1zM3 13h15v1h-15zM3 14h1v1h-1zM5 14h1v1h-1zM7 14h1v1h-1zM9 14h1v1h-1zM11 14h1v1h-1zM13 14h1v1h-1zM15 14h1v1h-1zM17 14h1v1h-1z" fill="#fff"/><path d="M3 1h1v1h-1zM14 1h1v1h-1zM3 2h1v1h-1zM14 2h1v1h-1zM1 3h5v1h-5zM12 3h5v1h-5zM3 4h1v1h-1zM14 4h1v1h-1zM3 5h1v1h-1zM14 5h1v1h-1zM3 6h1v1h-1zM14 6h1v1h-1zM1 7h17v1h-17zM1 8h17v1h-17zM9 9h1v1h-1zM9 10h1v1h-1zM9 11h1v1h-1zM2 12h15v1h-15zM2 13h1v1h-1zM4 13h1v1h-1zM6 13h1v1h-1zM8 13h1v1h-1zM10 13h1v1h-1zM12 13h1v1h-1zM14 13h1v1h-1zM16 13h1v1h-1z" fill="#808080"/></svg>
<svg style="left:944px;top:105px" width="20" height="17"><path d="M10 4h1v1h-1zM10 5h1v1h-1zM10 6h1v1h-1zM10 7h1v1h-1zM2 8h17v1h-17zM5 9h1v1h-1zM16 9h1v1h-1zM5 10h1v1h-1zM16 10h1v1h-1zM2 11h7v1h-7zM14 11h7v1h-7zM2 12h1v1h-1zM4 12h1v1h-1zM6 12h1v1h-1zM8 12h1v1h-1zM14 12h1v1h-1zM16 12h1v1h-1zM18 12h1v1h-1zM20 12h1v1h-1zM2 13h7v1h-7zM14 13h7v1h-7z" fill="#fff"/><path d="M9 3h1v1h-1zM9 4h1v1h-1zM9 5h1v1h-1zM9 6h1v1h-1zM1 7h17v1h-17zM4 8h1v1h-1zM15 8h1v1h-1zM4 9h1v1h-1zM15 9h1v1h-1zM1 10h7v1h-7zM13 10h7v1h-7zM1 11h1v1h-1zM3 11h1v1h-1zM5 11h1v1h-1zM7 11h1v1h-1zM13 11h1v1h-1zM15 11h1v1h-1zM17 11h1v1h-1zM19 11h1v1h-1zM1 12h7v1h-7zM13 12h7v1h-7z" fill="#808080"/></svg>
<svg style="left:967px;top:105px" width="20" height="17"><path d="M3 3h15v1h-15zM3 4h1v1h-1zM5 4h1v1h-1zM7 4h1v1h-1zM9 4h1v1h-1zM11 4h1v1h-1zM13 4h1v1h-1zM15 4h1v1h-1zM17 4h1v1h-1zM10 5h1v1h-1zM10 6h1v1h-1zM10 7h1v1h-1zM10 8h1v1h-1zM3 9h15v1h-15zM3 10h15v1h-15zM10 11h1v1h-1zM10 12h1v1h-1zM8 13h5v1h-5zM10 14h1v1h-1zM10 15h1v1h-1z" fill="#fff"/><path d="M2 2h15v1h-15zM2 3h1v1h-1zM4 3h1v1h-1zM6 3h1v1h-1zM8 3h1v1h-1zM10 3h1v1h-1zM12 3h1v1h-1zM14 3h1v1h-1zM16 3h1v1h-1zM9 4h1v1h-1zM9 5h1v1h-1zM9 6h1v1h-1zM9 7h1v1h-1zM2 8h15v1h-15zM2 9h15v1h-15zM9 10h1v1h-1zM9 11h1v1h-1zM7 12h5v1h-5zM9 13h1v1h-1zM9 14h1v1h-1z" fill="#808080"/></svg>
<div style="left:992px;top:102px;width:1px;height:23px;background:#808080;"></div>
<div style="left:993px;top:102px;width:1px;height:23px;background:#fff;"></div>
<svg style="left:998px;top:105px" width="20" height="17"><path d="M6 4h1v1h-1zM6 5h1v1h-1zM6 6h1v1h-1zM6 7h1v1h-1zM6 8h9v1h-9zM14 9h1v1h-1zM14 10h1v1h-1zM14 11h1v1h-1zM14 12h1v1h-1zM14 13h1v1h-1zM14 14h1v1h-1z" fill="#fff"/><path d="M5 3h1v1h-1zM5 4h1v1h-1zM5 5h1v1h-1zM5 6h1v1h-1zM5 7h9v1h-9zM13 8h1v1h-1zM13 9h1v1h-1zM13 10h1v1h-1zM13 11h1v1h-1zM13 12h1v1h-1zM13 13h1v1h-1z" fill="#808080"/></svg>
<div style="left:0px;top:128px;width:1024px;height:1px;background:#808080;"></div>
<div style="left:0px;top:129px;width:1024px;height:588px;background:#848285;box-shadow:inset 1px 1px #404040,inset -1px -1px #d6d3ce;border-left:1px solid #808080;border-right:1px solid #ffffff;box-sizing:border-box;"></div>
<div style="left:0px;top:717px;width:1024px;height:2px;background:#ffffff;"></div>
<div style="left:0px;top:719px;width:1024px;height:20px;background:#d6d3ce;"></div>
<span class="t" style="left:2px;top:723px;color:#000;">需要帮助，请按</span>
<svg style="left:86px;top:723px" width="13" height="12"><path d="M1 2h5v1h-5zM2 3h1v1h-1zM5 3h1v1h-1zM2 4h1v1h-1zM2 5h3v1h-3zM2 6h1v1h-1zM2 7h1v1h-1zM2 8h1v1h-1zM1 9h3v1h-3zM10 2h1v1h-1zM8 3h3v1h-3zM10 4h1v1h-1zM10 5h1v1h-1zM10 6h1v1h-1zM10 7h1v1h-1zM10 8h1v1h-1zM8 9h4v1h-4z" fill="#000"/></svg>
<div style="left:269px;top:721px;width:20px;height:17px;box-shadow:inset -1px -1px #ffffff,inset 1px 1px #808080;"></div>
<div style="left:291px;top:721px;width:66px;height:17px;box-shadow:inset -1px -1px #ffffff,inset 1px 1px #808080;"></div>
<div style="left:359px;top:721px;width:257px;height:17px;box-shadow:inset -1px -1px #ffffff,inset 1px 1px #808080;"></div>
<div style="left:617px;top:721px;width:57px;height:17px;box-shadow:inset -1px -1px #ffffff,inset 1px 1px #808080;"></div>
<div style="left:675px;top:721px;width:57px;height:17px;box-shadow:inset -1px -1px #ffffff,inset 1px 1px #808080;"></div>
<div style="left:733px;top:721px;width:131px;height:17px;box-shadow:inset -1px -1px #ffffff,inset 1px 1px #808080;"></div>
<div style="left:866px;top:721px;width:107px;height:17px;box-shadow:inset -1px -1px #ffffff,inset 1px 1px #808080;"></div>
<div style="left:974px;top:721px;width:24px;height:17px;box-shadow:inset -1px -1px #ffffff,inset 1px 1px #808080;"></div>
<div style="left:1000px;top:721px;width:24px;height:17px;box-shadow:inset -1px -1px #ffffff,inset 1px 1px #808080;"></div>
<div style="left:0px;top:739px;width:1024px;height:1px;background:#ffffff;"></div>
<div style="left:0px;top:740px;width:1024px;height:28px;background:#d6d3ce;"></div>
<div style="left:2px;top:742px;width:47px;height:22px;background:#d6d3ce;box-shadow:inset -1px -1px #404040,inset 1px 1px #ffffff,inset -2px -2px #808080,inset 2px 2px #d6d3ce;"></div>
<svg class="aa" style="left:3px;top:743px" width="18" height="17"><path d="M3.5 1.5q3.5-1.5 7 0.5v5.5q-3.5-2-7-0.5z" fill="#ee6a2a"/><path d="M11 2.5q3.5 2 7 0.5v6q-3.5 1.5-7-0.5z" fill="#78c83a"/><path d="M1 7.5q3.5-1.5 7 0.5v6q-3.5-2-7-0.5z" fill="#4a7ee0"/><path d="M8.5 8.5q3.5 2 7 0.5v6q-3.5 1.5-7-0.5z" fill="#f8c828"/></svg>
<span class="t" style="left:22px;top:746px;color:#000;">开始</span>
<svg style="left:57px;top:746px" width="17" height="17" class="aa"><circle cx="8" cy="8" r="7.5" fill="#3a8a3a"/><path d="M8 0.5A7.5 7.5 0 0 0 0.5 8H8z" fill="#d83a5a"/><path d="M0.5 8A7.5 7.5 0 0 0 8 15.5V8z" fill="#2050c8"/><circle cx="8" cy="8" r="5" fill="#e8f0ff"/><path d="M6 5l5 3-5 3z" fill="#10208a"/></svg>
<svg class="aa" style="left:80px;top:745px" width="17" height="17"><path d="M14.5 9.5A6 6 0 1 0 13 13" stroke="#2a8ae0" stroke-width="3" fill="none"/><path d="M5 9h9" stroke="#2a8ae0" stroke-width="2.2"/><path d="M2 15.5C0 12 8 2.5 15.5 1.5" stroke="#f0c040" stroke-width="1.5" fill="none"/></svg>
<svg class="aa" style="left:102px;top:745px" width="18" height="18"><ellipse cx="9" cy="9.5" rx="6.5" ry="7.5" fill="#101010"/><path d="M2.5 10q-2.5 2-1 4 1.5-1 2-2zM15.5 10q2.5 2 1 4-1.5-1-2-2z" fill="#101010"/><ellipse cx="9" cy="12" rx="4.5" ry="4.2" fill="#fff"/><ellipse cx="9" cy="6" rx="2.8" ry="1.6" fill="#f0c020"/><circle cx="7.3" cy="4.2" r="1.3" fill="#fff"/><circle cx="10.7" cy="4.2" r="1.3" fill="#fff"/><path d="M3 8.5q6 3 12 0v2q-2 1-2.5 3.5l-2-2.5q-4 1-7.5-1z" fill="#e02020"/><ellipse cx="5.5" cy="16.3" rx="2.8" ry="1.2" fill="#f0b020"/><ellipse cx="12.5" cy="16.3" rx="2.8" ry="1.2" fill="#f0b020"/></svg>
<svg style="left:130px;top:747px" width="10" height="6"><path d="M0 0h2l2 2.5-2 2.5h-2l2-2.5zM5 0h2l2 2.5-2 2.5h-2l2-2.5z" fill="#000"/></svg>
<div style="left:143px;top:742px;width:160px;height:22px;background:#d6d3ce;box-shadow:inset -1px -1px #404040,inset 1px 1px #ffffff,inset -2px -2px #808080,inset 2px 2px #d6d3ce;"></div>
<svg style="left:147px;top:745px" width="16" height="16" class="aa"><defs><linearGradient id="tg" x1="0" y1="0" x2="0" y2="1"><stop offset="0" stop-color="#2f8ee8"/><stop offset="1" stop-color="#0a3a90"/></linearGradient></defs><rect x="0.5" y="0.5" width="15" height="15" rx="2" fill="url(#tg)" stroke="#062a70"/><path d="M12.5 3Q7 4.5 4 9.5Q8 9 11.5 12.5" stroke="#f0f8ff" stroke-width="1.8" fill="none"/></svg>
<span class="t" style="left:167px;top:748px;color:#000;">迅雷</span>
<svg style="left:191px;top:748px" width="7" height="12"><path d="M1 2h5v1h-5zM1 3h1v1h-1zM1 4h1v1h-1zM1 5h4v1h-4zM5 6h1v1h-1zM5 7h1v1h-1zM1 8h1v1h-1zM5 8h1v1h-1zM2 9h3v1h-3z" fill="#000"/></svg>
<div style="left:306px;top:742px;width:160px;height:22px;background:#d6d3ce;box-shadow:inset -1px -1px #404040,inset 1px 1px #ffffff,inset -2px -2px #808080,inset 2px 2px #d6d3ce;"></div>
<svg class="aa" style="left:310px;top:744px" width="17" height="17"><path d="M14.5 9.5A6 6 0 1 0 13 13" stroke="#2a8ae0" stroke-width="3" fill="none"/><path d="M5 9h9" stroke="#2a8ae0" stroke-width="2.2"/><path d="M2 15.5C0 12 8 2.5 15.5 1.5" stroke="#f0c040" stroke-width="1.5" fill="none"/></svg>
<svg style="left:330px;top:748px" width="37" height="12"><path d="M2 2h4v1h-4zM1 3h1v1h-1zM5 3h1v1h-1zM1 4h1v1h-1zM1 5h1v1h-1zM1 6h1v1h-1zM1 7h1v1h-1zM1 8h1v1h-1zM5 8h1v1h-1zM2 9h3v1h-3zM7 2h4v1h-4zM8 3h1v1h-1zM11 3h1v1h-1zM8 4h1v1h-1zM11 4h1v1h-1zM8 5h1v1h-1zM11 5h1v1h-1zM8 6h3v1h-3zM8 7h1v1h-1zM8 8h1v1h-1zM7 9h3v1h-3zM13 2h2v1h-2zM16 2h2v1h-2zM13 3h2v1h-2zM16 3h2v1h-2zM13 4h2v1h-2zM16 4h2v1h-2zM13 5h1v1h-1zM15 5h1v1h-1zM17 5h1v1h-1zM13 6h1v1h-1zM15 6h1v1h-1zM17 6h1v1h-1zM13 7h1v1h-1zM15 7h1v1h-1zM17 7h1v1h-1zM13 8h1v1h-1zM17 8h1v1h-1zM13 9h2v1h-2zM16 9h2v1h-2zM20 2h3v1h-3zM19 3h1v1h-1zM23 3h1v1h-1zM19 4h1v1h-1zM23 4h1v1h-1zM23 5h1v1h-1zM22 6h1v1h-1zM21 7h1v1h-1zM20 8h1v1h-1zM19 9h5v1h-5zM27 2h1v1h-1zM27 3h1v1h-1zM26 4h1v1h-1zM28 4h1v1h-1zM26 5h1v1h-1zM28 5h1v1h-1zM26 6h1v1h-1zM28 6h1v1h-1zM26 7h3v1h-3zM25 8h1v1h-1zM29 8h1v1h-1zM25 9h2v1h-2zM28 9h2v1h-2zM31 2h2v1h-2zM34 2h2v1h-2zM31 3h1v1h-1zM35 3h1v1h-1zM31 4h1v1h-1zM35 4h1v1h-1zM31 5h5v1h-5zM31 6h1v1h-1zM35 6h1v1h-1zM31 7h1v1h-1zM35 7h1v1h-1zM31 8h1v1h-1zM35 8h1v1h-1zM31 9h2v1h-2zM34 9h2v1h-2z" fill="#000"/></svg>
<span class="t" style="left:366px;top:748px;color:#000;">型号的用什么</span>
<svg style="left:438px;top:748px" width="19" height="12"><path d="M1 9h1v1h-1zM7 9h1v1h-1zM13 9h1v1h-1z" fill="#000"/></svg>
<div style="left:469px;top:742px;width:160px;height:22px;background:repeating-conic-gradient(#fff 0 25%,#d6d3ce 0 50%) 0 0/2px 2px;box-shadow:inset -1px -1px #fff,inset 1px 1px #000,inset -2px -2px #d6d3ce,inset 2px 2px #808080;"></div>
<svg style="left:474px;top:745px" width="20" height="17"><path d="M3 2h1v1h-1z" fill="#008000"/><path d="M1 1h14v1h-14zM0 2h3v1h-3zM4 2h12v1h-12zM0 3h1v1h-1zM5 3h1v1h-1zM10 3h1v1h-1zM15 3h1v1h-1zM0 4h2v1h-2zM5 4h1v1h-1zM10 4h1v1h-1zM14 4h2v1h-2zM0 5h2v1h-2zM5 5h1v1h-1zM10 5h1v1h-1zM14 5h2v1h-2zM0 6h1v1h-1zM5 6h1v1h-1zM10 6h1v1h-1zM15 6h1v1h-1zM0 7h16v1h-16zM1 8h14v1h-14zM1 10h14v1h-14zM0 11h1v1h-1zM15 11h1v1h-1zM0 12h1v1h-1zM2 12h1v1h-1zM4 12h1v1h-1zM6 12h1v1h-1zM8 12h1v1h-1zM10 12h1v1h-1zM12 12h1v1h-1zM15 12h1v1h-1zM0 13h1v1h-1zM15 13h1v1h-1zM1 14h14v1h-14z" fill="#000000"/><path d="M2 3h3v1h-3zM6 3h4v1h-4zM11 3h4v1h-4zM2 4h3v1h-3zM7 4h3v1h-3zM11 4h3v1h-3zM2 5h3v1h-3zM7 5h3v1h-3zM11 5h3v1h-3zM2 6h3v1h-3zM6 6h4v1h-4zM11 6h4v1h-4z" fill="#c0c0c0"/><path d="M1 3h1v1h-1zM6 4h1v1h-1zM6 5h1v1h-1zM1 6h1v1h-1z" fill="#ffffff"/><path d="M1 11h14v1h-14zM1 12h1v1h-1zM3 12h1v1h-1zM5 12h1v1h-1zM7 12h1v1h-1zM9 12h1v1h-1zM11 12h1v1h-1zM13 12h2v1h-2zM1 13h14v1h-14z" fill="#ffff00"/></svg>
<svg style="left:494px;top:749px" width="79" height="12"><path d="M2 2h4v1h-4zM1 3h1v1h-1zM5 3h1v1h-1zM1 4h1v1h-1zM1 5h1v1h-1zM1 6h1v1h-1zM1 7h1v1h-1zM1 8h1v1h-1zM5 8h1v1h-1zM2 9h3v1h-3zM7 2h2v1h-2zM10 2h2v1h-2zM7 3h1v1h-1zM11 3h1v1h-1zM8 4h1v1h-1zM10 4h1v1h-1zM9 5h1v1h-1zM9 6h1v1h-1zM8 7h1v1h-1zM10 7h1v1h-1zM7 8h1v1h-1zM11 8h1v1h-1zM7 9h2v1h-2zM10 9h2v1h-2zM13 5h5v1h-5zM19 2h4v1h-4zM20 3h1v1h-1zM23 3h1v1h-1zM20 4h1v1h-1zM23 4h1v1h-1zM20 5h1v1h-1zM23 5h1v1h-1zM20 6h3v1h-3zM20 7h1v1h-1zM20 8h1v1h-1zM19 9h3v1h-3zM25 4h2v1h-2zM28 4h2v1h-2zM26 5h2v1h-2zM30 5h1v1h-1zM26 6h1v1h-1zM26 7h1v1h-1zM26 8h1v1h-1zM25 9h4v1h-4zM32 4h3v1h-3zM31 5h1v1h-1zM35 5h1v1h-1zM31 6h1v1h-1zM35 6h1v1h-1zM31 7h1v1h-1zM35 7h1v1h-1zM31 8h1v1h-1zM35 8h1v1h-1zM32 9h3v1h-3zM38 4h4v1h-4zM37 5h1v1h-1zM40 5h1v1h-1zM37 6h1v1h-1zM40 6h1v1h-1zM38 7h2v1h-2zM37 8h1v1h-1zM38 9h3v1h-3zM37 10h1v1h-1zM41 10h1v1h-1zM38 11h3v1h-3zM43 4h2v1h-2zM46 4h2v1h-2zM44 5h2v1h-2zM48 5h1v1h-1zM44 6h1v1h-1zM44 7h1v1h-1zM44 8h1v1h-1zM43 9h4v1h-4zM50 4h3v1h-3zM49 5h1v1h-1zM53 5h1v1h-1zM51 6h3v1h-3zM50 7h1v1h-1zM53 7h1v1h-1zM49 8h1v1h-1zM53 8h1v1h-1zM50 9h4v1h-4zM55 4h4v1h-4zM55 5h1v1h-1zM57 5h1v1h-1zM59 5h1v1h-1zM55 6h1v1h-1zM57 6h1v1h-1zM59 6h1v1h-1zM55 7h1v1h-1zM57 7h1v1h-1zM59 7h1v1h-1zM55 8h1v1h-1zM57 8h1v1h-1zM59 8h1v1h-1zM55 9h1v1h-1zM57 9h1v1h-1zM59 9h1v1h-1zM61 4h4v1h-4zM61 5h1v1h-1zM63 5h1v1h-1zM65 5h1v1h-1zM61 6h1v1h-1zM63 6h1v1h-1zM65 6h1v1h-1zM61 7h1v1h-1zM63 7h1v1h-1zM65 7h1v1h-1zM61 8h1v1h-1zM63 8h1v1h-1zM65 8h1v1h-1zM61 9h1v1h-1zM63 9h1v1h-1zM65 9h1v1h-1zM68 4h3v1h-3zM67 5h1v1h-1zM71 5h1v1h-1zM67 6h5v1h-5zM67 7h1v1h-1zM67 8h1v1h-1zM71 8h1v1h-1zM68 9h3v1h-3zM73 4h2v1h-2zM76 4h2v1h-2zM74 5h2v1h-2zM78 5h1v1h-1zM74 6h1v1h-1zM74 7h1v1h-1zM74 8h1v1h-1zM73 9h4v1h-4z" fill="#000"/></svg>
<svg style="left:773px;top:747px" width="17" height="14"><path d="M4 0v2h1v1h2v-1h2v1h2v-1h2v1h1v2" stroke="#000" fill="none"/><path d="M1 5h15v1h1v6h-1v1h-15v-1h-1v-6h1z" fill="#000"/><path d="M2 6h13v6h-13z" fill="#fff"/><path d="M3 7h1v1h-1zM5 7h1v1h-1zM7 7h1v1h-1zM9 7h1v1h-1zM11 7h1v1h-1zM13 7h1v1h-1zM3 9h1v1h-1zM5 9h1v1h-1zM7 9h1v1h-1zM9 9h1v1h-1zM11 9h1v1h-1zM13 9h1v1h-1z" fill="#404040"/><path d="M4 8h1v1h-1zM6 8h1v1h-1zM8 8h1v1h-1zM10 8h1v1h-1zM12 8h1v1h-1zM4 10h1v1h-1zM6 10h1v1h-1zM8 10h1v1h-1zM10 10h1v1h-1zM12 10h1v1h-1z" fill="#808080"/></svg>
<div style="left:793px;top:742px;width:1px;height:24px;background:#808080;"></div>
<div style="left:794px;top:742px;width:1px;height:24px;background:#fff;"></div>
<svg style="left:801px;top:747px" width="16" height="16"><path d="M1 0h12v1h1v12h-1v1h-2v1h-1v-1h-1v-1h-7v-1h-1v-11h1z" fill="#000"/><path d="M2 1h11v11h-2v1h-1v-1h-8z" fill="#ffffe0"/><path d="M5 3h4v1h1v2h-1v1h-1v2h-2v-2h1v-1h1v-2h-2v1h-2v-1h1z M6 10h2v2h-2z" fill="#10107a"/></svg>
<div style="left:821px;top:742px;width:1px;height:24px;background:#808080;"></div>
<div style="left:822px;top:742px;width:1px;height:24px;background:#fff;"></div>
<svg style="left:827px;top:745px" width="20" height="17"><path d="M4 0h6v1h-6zM4 1h1v1h-1zM9 1h1v1h-1zM2 2h6v1h-6zM9 2h1v1h-1zM2 3h6v1h-6zM9 3h1v1h-1zM2 4h1v1h-1zM7 4h3v1h-3zM2 5h1v1h-1zM7 5h1v1h-1zM2 6h6v1h-6zM2 12h7v1h-7zM3 13h5v1h-5zM4 14h3v1h-3zM5 15h1v1h-1z" fill="#000000"/></svg>
<div style="left:850px;top:746px;width:56px;height:16px;background:#80f040;box-shadow:inset 1px 1px #fff,inset -1px -1px #404040;"></div>
<div style="left:906px;top:749px;width:4px;height:10px;background:#808080;"></div>
<svg style="left:866px;top:748px" width="22" height="12"><path d="M2 2h4v1h-4zM1 3h2v1h-2zM5 3h2v1h-2zM1 4h2v1h-2zM5 4h2v1h-2zM1 5h2v1h-2zM5 5h2v1h-2zM2 6h5v1h-5zM5 7h2v1h-2zM1 8h2v1h-2zM5 8h2v1h-2zM2 9h4v1h-4zM9 2h4v1h-4zM8 3h2v1h-2zM12 3h2v1h-2zM8 4h2v1h-2zM8 5h5v1h-5zM8 6h2v1h-2zM12 6h2v1h-2zM8 7h2v1h-2zM12 7h2v1h-2zM8 8h2v1h-2zM12 8h2v1h-2zM9 9h4v1h-4zM15 2h3v1h-3zM19 2h2v1h-2zM15 3h3v1h-3zM18 3h2v1h-2zM18 4h2v1h-2zM17 5h2v1h-2zM17 6h2v1h-2zM16 7h2v1h-2zM16 8h2v1h-2zM18 8h3v1h-3zM15 9h2v1h-2zM18 9h3v1h-3z" fill="#000"/></svg>
<svg style="left:918px;top:748px" width="17" height="12" class="aa"><path d="M0 6h2M4 1q-2 1-2 5t2 5h6v-2h5v-2h-5v-2h5v-2h-5v-2z" fill="#000" stroke="#000" stroke-width="0.8"/></svg>
<div style="left:943px;top:742px;width:80px;height:23px;box-shadow:inset -1px -1px #ffffff,inset 1px 1px #808080;"></div>
<svg style="left:948px;top:752px" width="10" height="6"><path d="M9 0h-2l-2 2.5 2 2.5h2l-2-2.5zM4 0h-2l-2 2.5 2 2.5h2l-2-2.5z" fill="#000"/></svg>
<svg style="left:961px;top:746px" width="16" height="16" class="aa"><defs><linearGradient id="tg" x1="0" y1="0" x2="0" y2="1"><stop offset="0" stop-color="#2f8ee8"/><stop offset="1" stop-color="#0a3a90"/></linearGradient></defs><rect x="0.5" y="0.5" width="15" height="15" rx="2" fill="url(#tg)" stroke="#062a70"/><path d="M12.5 3Q7 4.5 4 9.5Q8 9 11.5 12.5" stroke="#f0f8ff" stroke-width="1.8" fill="none"/></svg>
<svg style="left:983px;top:748px" width="31" height="12"><path d="M2 2h3v1h-3zM1 3h1v1h-1zM5 3h1v1h-1zM1 4h1v1h-1zM5 4h1v1h-1zM5 5h1v1h-1zM4 6h1v1h-1zM3 7h1v1h-1zM2 8h1v1h-1zM1 9h5v1h-5zM10 2h1v1h-1zM8 3h3v1h-3zM10 4h1v1h-1zM10 5h1v1h-1zM10 6h1v1h-1zM10 7h1v1h-1zM10 8h1v1h-1zM8 9h4v1h-4zM15 4h1v1h-1zM15 9h1v1h-1zM20 2h3v1h-3zM19 3h1v1h-1zM23 3h1v1h-1zM19 4h1v1h-1zM23 4h1v1h-1zM23 5h1v1h-1zM22 6h1v1h-1zM21 7h1v1h-1zM20 8h1v1h-1zM19 9h5v1h-5zM28 2h1v1h-1zM26 3h3v1h-3zM28 4h1v1h-1zM28 5h1v1h-1zM28 6h1v1h-1zM28 7h1v1h-1zM28 8h1v1h-1zM26 9h4v1h-4z" fill="#000"/></svg>
<div style="left:349px;top:214px;width:327px;height:309px;background:#d6d3ce;box-shadow:inset -1px -1px #404040,inset 1px 1px #d6d3ce,inset -2px -2px #808080,inset 2px 2px #ffffff;"></div>
<div style="left:352px;top:217px;width:321px;height:18px;background:linear-gradient(to right,#0a246a,#a6caf0);"></div>
<span class="t" style="left:354px;top:220px;color:#fff;font-weight:bold;">变更</span>
<svg style="left:378px;top:220px" width="22" height="12"><path d="M1 2h5v1h-5zM2 3h2v1h-2zM5 3h2v1h-2zM2 4h2v1h-2zM5 4h2v1h-2zM2 5h2v1h-2zM5 5h2v1h-2zM2 6h4v1h-4zM2 7h2v1h-2zM2 8h2v1h-2zM1 9h4v1h-4zM8 2h4v1h-4zM9 3h2v1h-2zM9 4h2v1h-2zM9 5h2v1h-2zM9 6h2v1h-2zM9 7h2v1h-2zM9 8h2v1h-2zM12 8h2v1h-2zM8 9h6v1h-6zM16 2h5v1h-5zM15 3h2v1h-2zM19 3h2v1h-2zM15 4h2v1h-2zM15 5h2v1h-2zM15 6h2v1h-2zM15 7h2v1h-2zM15 8h2v1h-2zM19 8h2v1h-2zM16 9h4v1h-4z" fill="#fff"/></svg>
<div style="left:655px;top:219px;width:16px;height:14px;background:#d6d3ce;box-shadow:inset -1px -1px #404040,inset 1px 1px #ffffff,inset -2px -2px #808080,inset 2px 2px #d6d3ce;"></div>
<svg style="left:655px;top:219px" width="20" height="17"><path d="M4 3h2v1h-2zM10 3h2v1h-2zM5 4h2v1h-2zM9 4h2v1h-2zM6 5h4v1h-4zM7 6h2v1h-2zM6 7h4v1h-4zM5 8h2v1h-2zM9 8h2v1h-2zM4 9h2v1h-2zM10 9h2v1h-2z" fill="#000000"/></svg>
<div style="left:364px;top:245px;width:299px;height:34px;box-shadow:inset 1px 1px #808080,inset -1px -1px #ffffff,inset 2px 2px #ffffff,inset -2px -2px #808080;"></div>
<div style="left:370px;top:239px;width:52px;height:12px;background:#d6d3ce;"></div>
<span class="t" style="left:372px;top:239px;color:#000;">设备名称</span>
<div style="left:364px;top:289px;width:299px;height:38px;box-shadow:inset 1px 1px #808080,inset -1px -1px #ffffff,inset 2px 2px #ffffff,inset -2px -2px #808080;"></div>
<div style="left:370px;top:283px;width:52px;height:12px;background:#d6d3ce;"></div>
<span class="t" style="left:372px;top:283px;color:#000;">设备类型</span>
<div style="left:364px;top:337px;width:299px;height:56px;box-shadow:inset 1px 1px #808080,inset -1px -1px #ffffff,inset 2px 2px #ffffff,inset -2px -2px #808080;"></div>
<div style="left:370px;top:331px;width:52px;height:12px;background:#d6d3ce;"></div>
<span class="t" style="left:372px;top:331px;color:#000;">网络类型</span>
<div style="left:364px;top:406px;width:299px;height:77px;box-shadow:inset 1px 1px #808080,inset -1px -1px #ffffff,inset 2px 2px #ffffff,inset -2px -2px #808080;"></div>
<div style="left:370px;top:400px;width:28px;height:12px;background:#d6d3ce;"></div>
<span class="t" style="left:372px;top:400px;color:#000;">注释</span>
<div style="left:375px;top:254px;width:194px;height:18px;background:#fff;box-shadow:inset -1px -1px #ffffff,inset 1px 1px #808080,inset -2px -2px #d6d3ce,inset 2px 2px #404040;"></div>
<span class="t" style="left:377px;top:257px;color:#000;">新</span>
<svg style="left:389px;top:257px" width="25" height="12"><path d="M1 2h4v1h-4zM2 3h1v1h-1zM5 3h1v1h-1zM2 4h1v1h-1zM5 4h1v1h-1zM2 5h1v1h-1zM5 5h1v1h-1zM2 6h3v1h-3zM2 7h1v1h-1zM2 8h1v1h-1zM1 9h3v1h-3zM7 2h3v1h-3zM8 3h1v1h-1zM8 4h1v1h-1zM8 5h1v1h-1zM8 6h1v1h-1zM8 7h1v1h-1zM8 8h1v1h-1zM11 8h1v1h-1zM7 9h5v1h-5zM14 2h4v1h-4zM13 3h1v1h-1zM17 3h1v1h-1zM13 4h1v1h-1zM13 5h1v1h-1zM13 6h1v1h-1zM13 7h1v1h-1zM13 8h1v1h-1zM17 8h1v1h-1zM14 9h3v1h-3zM22 2h1v1h-1zM20 3h3v1h-3zM22 4h1v1h-1zM22 5h1v1h-1zM22 6h1v1h-1zM22 7h1v1h-1zM22 8h1v1h-1zM20 9h4v1h-4z" fill="#000"/></svg>
<div style="left:375px;top:299px;width:197px;height:20px;background:#fff;box-shadow:inset -1px -1px #ffffff,inset 1px 1px #808080,inset -2px -2px #d6d3ce,inset 2px 2px #404040;"></div>
<svg style="left:378px;top:303px" width="31" height="12"><path d="M2 2h4v1h-4zM1 3h1v1h-1zM5 3h1v1h-1zM1 4h1v1h-1zM1 5h1v1h-1zM1 6h1v1h-1zM1 7h1v1h-1zM1 8h1v1h-1zM5 8h1v1h-1zM2 9h3v1h-3zM7 2h4v1h-4zM8 3h1v1h-1zM11 3h1v1h-1zM8 4h1v1h-1zM11 4h1v1h-1zM8 5h1v1h-1zM11 5h1v1h-1zM8 6h3v1h-3zM8 7h1v1h-1zM8 8h1v1h-1zM7 9h3v1h-3zM13 2h2v1h-2zM16 2h2v1h-2zM13 3h2v1h-2zM16 3h2v1h-2zM13 4h2v1h-2zM16 4h2v1h-2zM13 5h1v1h-1zM15 5h1v1h-1zM17 5h1v1h-1zM13 6h1v1h-1zM15 6h1v1h-1zM17 6h1v1h-1zM13 7h1v1h-1zM15 7h1v1h-1zM17 7h1v1h-1zM13 8h1v1h-1zM17 8h1v1h-1zM13 9h2v1h-2zM16 9h2v1h-2zM20 2h3v1h-3zM19 3h1v1h-1zM23 3h1v1h-1zM19 4h1v1h-1zM23 4h1v1h-1zM23 5h1v1h-1zM22 6h1v1h-1zM21 7h1v1h-1zM20 8h1v1h-1zM19 9h5v1h-5zM27 3h1v1h-1zM25 4h1v1h-1zM27 4h1v1h-1zM29 4h1v1h-1zM26 5h3v1h-3zM25 6h1v1h-1zM27 6h1v1h-1zM29 6h1v1h-1zM27 7h1v1h-1z" fill="#000"/></svg>
<div style="left:554px;top:301px;width:16px;height:16px;background:#d6d3ce;box-shadow:inset -1px -1px #404040,inset 1px 1px #d6d3ce,inset -2px -2px #808080,inset 2px 2px #ffffff;"></div>
<svg style="left:554px;top:301px" width="16" height="16"><path d="M4 6h7l-3.5 4z" fill="#000"/></svg>
<div style="left:375px;top:346px;width:197px;height:20px;background:#fff;box-shadow:inset -1px -1px #ffffff,inset 1px 1px #808080,inset -2px -2px #d6d3ce,inset 2px 2px #404040;"></div>
<svg style="left:378px;top:350px" width="61" height="12"><path d="M2 2h4v1h-4zM1 3h1v1h-1zM5 3h1v1h-1zM1 4h1v1h-1zM2 5h2v1h-2zM4 6h1v1h-1zM5 7h1v1h-1zM1 8h1v1h-1zM5 8h1v1h-1zM1 9h4v1h-4zM7 2h2v1h-2zM10 2h2v1h-2zM7 3h1v1h-1zM11 3h1v1h-1zM8 4h1v1h-1zM10 4h1v1h-1zM8 5h1v1h-1zM10 5h1v1h-1zM9 6h1v1h-1zM9 7h1v1h-1zM9 8h1v1h-1zM8 9h3v1h-3zM14 2h4v1h-4zM13 3h1v1h-1zM17 3h1v1h-1zM13 4h1v1h-1zM14 5h2v1h-2zM16 6h1v1h-1zM17 7h1v1h-1zM13 8h1v1h-1zM17 8h1v1h-1zM13 9h4v1h-4zM19 2h2v1h-2zM22 2h2v1h-2zM19 3h2v1h-2zM22 3h2v1h-2zM19 4h2v1h-2zM22 4h2v1h-2zM19 5h1v1h-1zM21 5h1v1h-1zM23 5h1v1h-1zM19 6h1v1h-1zM21 6h1v1h-1zM23 6h1v1h-1zM19 7h1v1h-1zM21 7h1v1h-1zM23 7h1v1h-1zM19 8h1v1h-1zM23 8h1v1h-1zM19 9h2v1h-2zM22 9h2v1h-2zM27 2h1v1h-1zM27 3h1v1h-1zM26 4h1v1h-1zM28 4h1v1h-1zM26 5h1v1h-1zM28 5h1v1h-1zM26 6h1v1h-1zM28 6h1v1h-1zM26 7h3v1h-3zM25 8h1v1h-1zM29 8h1v1h-1zM25 9h2v1h-2zM28 9h2v1h-2zM32 2h4v1h-4zM31 3h1v1h-1zM35 3h1v1h-1zM31 4h1v1h-1zM31 5h1v1h-1zM31 6h1v1h-1zM31 7h1v1h-1zM31 8h1v1h-1zM35 8h1v1h-1zM32 9h3v1h-3zM43 2h2v1h-2zM46 2h2v1h-2zM43 3h1v1h-1zM47 3h1v1h-1zM43 4h1v1h-1zM45 4h1v1h-1zM47 4h1v1h-1zM43 5h1v1h-1zM45 5h1v1h-1zM47 5h1v1h-1zM43 6h1v1h-1zM45 6h1v1h-1zM47 6h1v1h-1zM43 7h2v1h-2zM46 7h2v1h-2zM44 8h1v1h-1zM46 8h1v1h-1zM44 9h1v1h-1zM46 9h1v1h-1zM51 2h1v1h-1zM51 3h1v1h-1zM50 4h1v1h-1zM52 4h1v1h-1zM50 5h1v1h-1zM52 5h1v1h-1zM50 6h1v1h-1zM52 6h1v1h-1zM50 7h3v1h-3zM49 8h1v1h-1zM53 8h1v1h-1zM49 9h2v1h-2zM52 9h2v1h-2zM55 2h2v1h-2zM58 2h2v1h-2zM55 3h1v1h-1zM59 3h1v1h-1zM56 4h1v1h-1zM58 4h1v1h-1zM56 5h1v1h-1zM58 5h1v1h-1zM57 6h1v1h-1zM57 7h1v1h-1zM57 8h1v1h-1zM56 9h3v1h-3z" fill="#000"/></svg>
<div style="left:554px;top:348px;width:16px;height:16px;background:#d6d3ce;box-shadow:inset -1px -1px #404040,inset 1px 1px #d6d3ce,inset -2px -2px #808080,inset 2px 2px #ffffff;"></div>
<svg style="left:554px;top:348px" width="16" height="16"><path d="M4 6h7l-3.5 4z" fill="#000"/></svg>
<div style="left:579px;top:299px;width:75px;height:20px;background:#d6d3ce;box-shadow:inset -1px -1px #000,inset 1px 1px #000,inset -2px -2px #404040,inset 2px 2px #ffffff,inset -3px -3px #808080,inset 3px 3px #d6d3ce;"></div>
<div style="left:583px;top:303px;width:68px;height:12px;border:1px dotted #000;box-sizing:border-box;"></div>
<span class="t" style="left:587px;top:302px;color:#000;">设定</span>
<svg style="left:611px;top:302px" width="37" height="12"><path d="M5 1h1v1h-1zM4 2h1v1h-1zM3 3h1v1h-1zM3 4h1v1h-1zM3 5h1v1h-1zM3 6h1v1h-1zM3 7h1v1h-1zM3 8h1v1h-1zM4 9h1v1h-1zM5 10h1v1h-1zM8 2h4v1h-4zM7 3h1v1h-1zM11 3h1v1h-1zM7 4h1v1h-1zM8 5h2v1h-2zM10 6h1v1h-1zM11 7h1v1h-1zM7 8h1v1h-1zM11 8h1v1h-1zM7 9h4v1h-4zM7 11h6v1h-6zM13 1h1v1h-1zM14 2h1v1h-1zM15 3h1v1h-1zM15 4h1v1h-1zM15 5h1v1h-1zM15 6h1v1h-1zM15 7h1v1h-1zM15 8h1v1h-1zM14 9h1v1h-1zM13 10h1v1h-1zM19 9h1v1h-1zM25 9h1v1h-1zM31 9h1v1h-1z" fill="#000"/></svg>
<div style="left:580px;top:346px;width:76px;height:20px;background:#d6d3ce;box-shadow:inset -1px -1px #404040,inset 1px 1px #ffffff,inset -2px -2px #808080,inset 2px 2px #d6d3ce;"></div>
<span class="t" style="left:587px;top:349px;color:#000;">设定</span>
<svg style="left:611px;top:349px" width="37" height="12"><path d="M5 1h1v1h-1zM4 2h1v1h-1zM3 3h1v1h-1zM3 4h1v1h-1zM3 5h1v1h-1zM3 6h1v1h-1zM3 7h1v1h-1zM3 8h1v1h-1zM4 9h1v1h-1zM5 10h1v1h-1zM7 2h5v1h-5zM8 3h1v1h-1zM11 3h1v1h-1zM8 4h1v1h-1zM8 5h3v1h-3zM8 6h1v1h-1zM8 7h1v1h-1zM8 8h1v1h-1zM11 8h1v1h-1zM7 9h5v1h-5zM7 11h6v1h-6zM13 1h1v1h-1zM14 2h1v1h-1zM15 3h1v1h-1zM15 4h1v1h-1zM15 5h1v1h-1zM15 6h1v1h-1zM15 7h1v1h-1zM15 8h1v1h-1zM14 9h1v1h-1zM13 10h1v1h-1zM19 9h1v1h-1zM25 9h1v1h-1zM31 9h1v1h-1z" fill="#000"/></svg>
<div style="left:375px;top:415px;width:277px;height:60px;background:#fff;box-shadow:inset -1px -1px #ffffff,inset 1px 1px #808080,inset -2px -2px #d6d3ce,inset 2px 2px #404040;"></div>
<div style="left:635px;top:417px;width:16px;height:56px;background:repeating-conic-gradient(#fff 0 25%,#d6d3ce 0 50%) 0 0/2px 2px;"></div>
<div style="left:635px;top:417px;width:16px;height:16px;background:#d6d3ce;box-shadow:inset -1px -1px #404040,inset 1px 1px #d6d3ce,inset -2px -2px #808080,inset 2px 2px #ffffff;"></div>
<div style="left:635px;top:457px;width:16px;height:16px;background:#d6d3ce;box-shadow:inset -1px -1px #404040,inset 1px 1px #d6d3ce,inset -2px -2px #808080,inset 2px 2px #ffffff;"></div>
<svg style="left:635px;top:417px" width="20" height="17"><path d="M8 7h1v1h-1zM7 8h3v1h-3zM6 9h5v1h-5zM5 10h7v1h-7z" fill="#fff"/><path d="M7 6h1v1h-1zM6 7h3v1h-3zM5 8h5v1h-5zM4 9h7v1h-7z" fill="#808080"/></svg>
<svg style="left:635px;top:457px" width="20" height="17"><path d="M5 7h7v1h-7zM6 8h5v1h-5zM7 9h3v1h-3zM8 10h1v1h-1z" fill="#fff"/><path d="M4 6h7v1h-7zM5 7h5v1h-5zM6 8h3v1h-3zM7 9h1v1h-1z" fill="#808080"/></svg>
<div style="left:363px;top:493px;width:75px;height:21px;background:#d6d3ce;box-shadow:inset -1px -1px #404040,inset 1px 1px #ffffff,inset -2px -2px #808080,inset 2px 2px #d6d3ce;"></div>
<span class="t" style="left:388px;top:498px;color:#000;">确定</span>
<div style="left:448px;top:493px;width:75px;height:21px;background:#d6d3ce;box-shadow:inset -1px -1px #404040,inset 1px 1px #ffffff,inset -2px -2px #808080,inset 2px 2px #d6d3ce;"></div>
<span class="t" style="left:473px;top:498px;color:#000;">取消</span>
<div style="left:586px;top:493px;width:75px;height:21px;background:#d6d3ce;box-shadow:inset -1px -1px #404040,inset 1px 1px #ffffff,inset -2px -2px #808080,inset 2px 2px #d6d3ce;"></div>
<span class="t" style="left:602px;top:498px;color:#000;">帮助</span>
<svg style="left:626px;top:498px" width="19" height="12"><path d="M5 1h1v1h-1zM4 2h1v1h-1zM3 3h1v1h-1zM3 4h1v1h-1zM3 5h1v1h-1zM3 6h1v1h-1zM3 7h1v1h-1zM3 8h1v1h-1zM4 9h1v1h-1zM5 10h1v1h-1zM7 2h2v1h-2zM10 2h2v1h-2zM7 3h1v1h-1zM11 3h1v1h-1zM7 4h1v1h-1zM11 4h1v1h-1zM7 5h5v1h-5zM7 6h1v1h-1zM11 6h1v1h-1zM7 7h1v1h-1zM11 7h1v1h-1zM7 8h1v1h-1zM11 8h1v1h-1zM7 9h2v1h-2zM10 9h2v1h-2zM7 11h6v1h-6zM13 1h1v1h-1zM14 2h1v1h-1zM15 3h1v1h-1zM15 4h1v1h-1zM15 5h1v1h-1zM15 6h1v1h-1zM15 7h1v1h-1zM15 8h1v1h-1zM14 9h1v1h-1zM13 10h1v1h-1z" fill="#000"/></svg>
<div style="left:952px;top:67px;width:41px;height:40px;background:linear-gradient(#e2eaf7,#f0f4fb);border:1px solid #82a8de;border-radius:5px;box-sizing:border-box;box-shadow:0 0 1.5px 1px #b4cdee, inset 0 0 1px #c8dbf4;"></div>
<svg style="left:956px;top:70px" width="31" height="12"><path d="M2 2h3v1h-3zM1 3h1v1h-1zM5 3h1v1h-1zM5 4h1v1h-1zM3 5h2v1h-2zM5 6h1v1h-1zM5 7h1v1h-1zM1 8h1v1h-1zM5 8h1v1h-1zM2 9h3v1h-3zM8 2h3v1h-3zM7 3h1v1h-1zM11 3h1v1h-1zM7 4h1v1h-1zM11 4h1v1h-1zM7 5h1v1h-1zM11 5h1v1h-1zM7 6h1v1h-1zM11 6h1v1h-1zM7 7h1v1h-1zM11 7h1v1h-1zM7 8h1v1h-1zM11 8h1v1h-1zM8 9h3v1h-3zM13 9h1v1h-1zM20 2h3v1h-3zM19 3h1v1h-1zM23 3h1v1h-1zM19 4h1v1h-1zM23 4h1v1h-1zM19 5h1v1h-1zM23 5h1v1h-1zM20 6h4v1h-4zM23 7h1v1h-1zM19 8h1v1h-1zM23 8h1v1h-1zM20 9h3v1h-3zM25 2h2v1h-2zM29 2h1v1h-1zM25 3h2v1h-2zM28 3h1v1h-1zM28 4h1v1h-1zM27 5h1v1h-1zM27 6h1v1h-1zM26 7h1v1h-1zM26 8h1v1h-1zM28 8h2v1h-2zM25 9h1v1h-1zM28 9h2v1h-2z" fill="#000"/></svg>
<div style="left:957px;top:104px;width:31px;height:1px;background:#4f86d0;"></div>
</body></html>
